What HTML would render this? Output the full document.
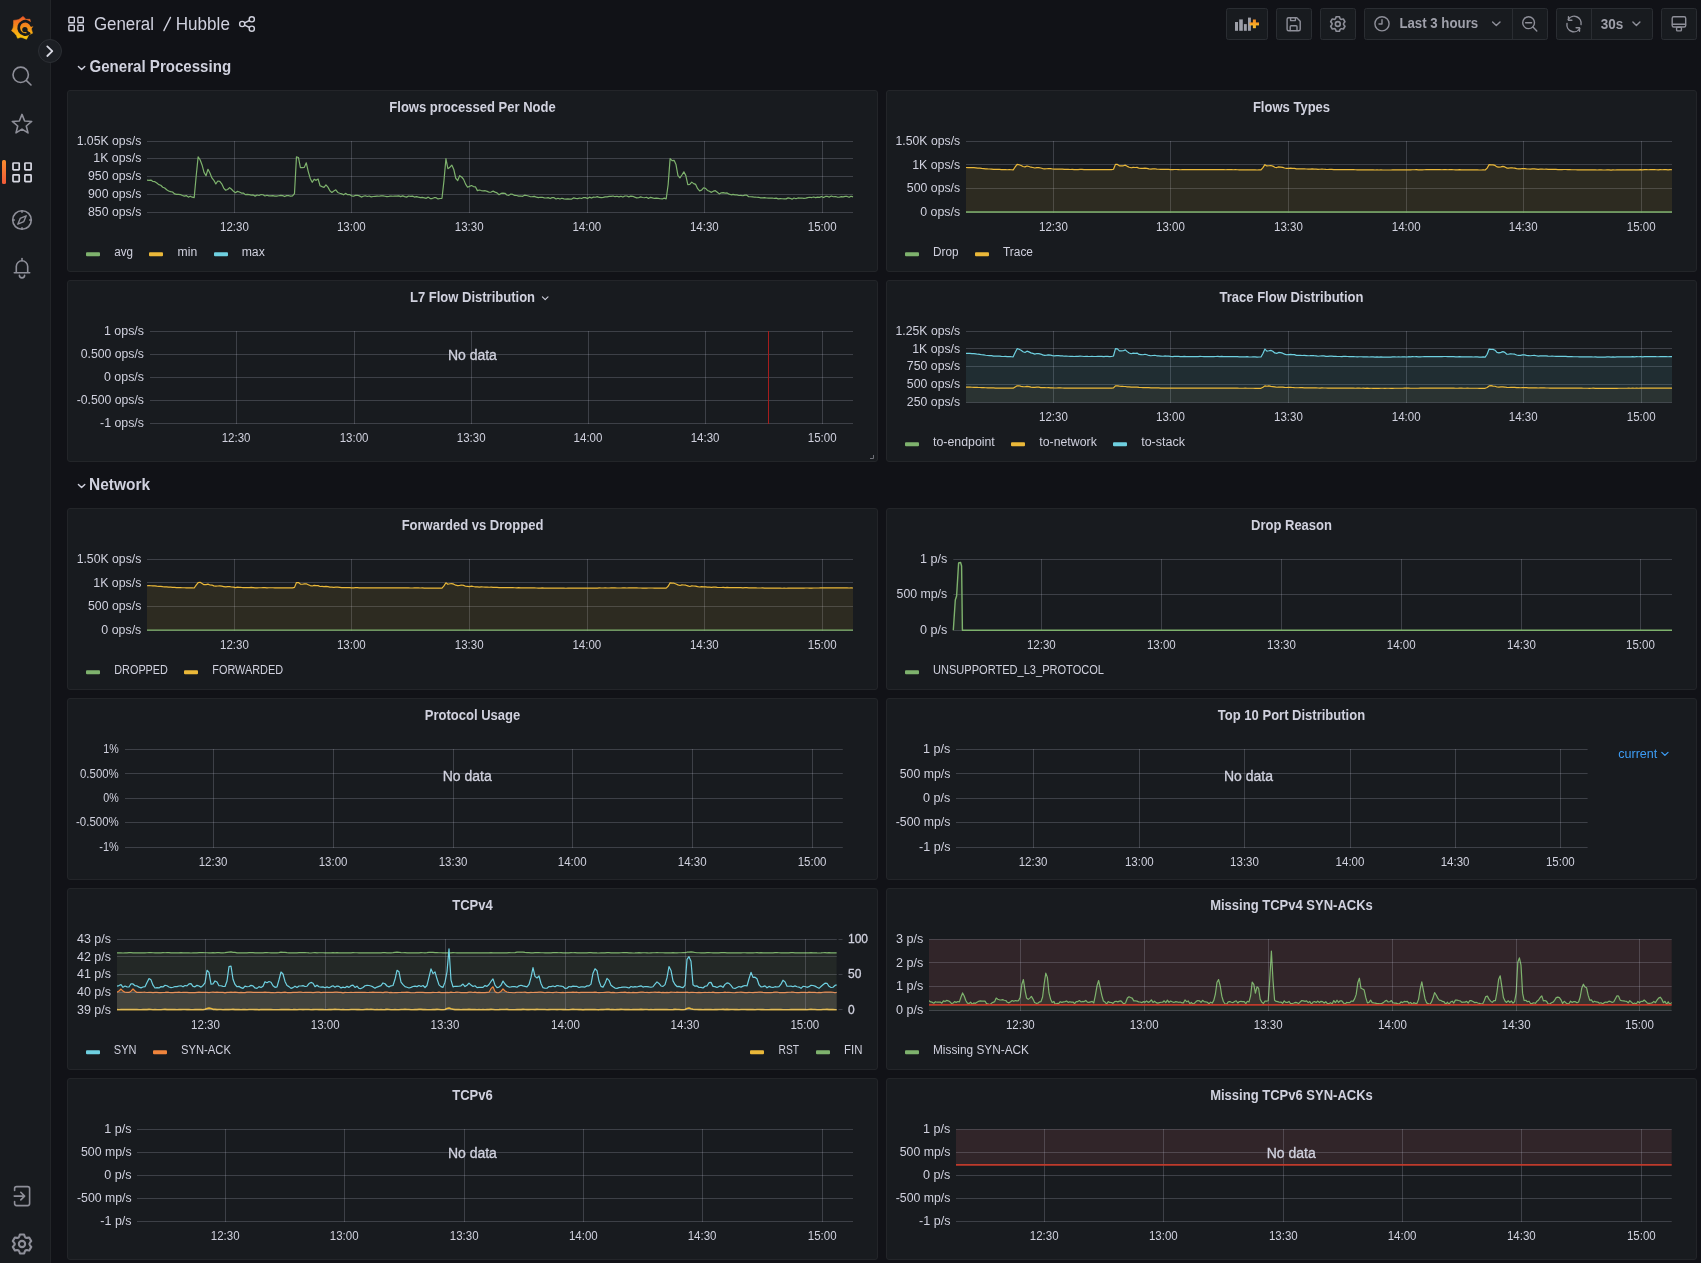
<!DOCTYPE html>
<html><head><meta charset="utf-8"><title>Hubble - Grafana</title>
<style>html,body{margin:0;padding:0;background:#111217;width:1701px;height:1263px;overflow:hidden}
svg{display:block;font-family:"Liberation Sans",sans-serif;will-change:transform}</style></head>
<body><svg width="1701" height="1263" viewBox="0 0 1701 1263" font-family="Liberation Sans, sans-serif"><rect x="0" y="0" width="1701" height="1263" fill="#111217"/><rect x="0" y="0" width="50" height="1263" fill="#181b1f"/><rect x="50" y="0" width="1" height="1263" fill="#222428"/><defs><linearGradient id="lg" x1="0" y1="0" x2="0" y2="1"><stop offset="0" stop-color="#f05a28"/><stop offset="1" stop-color="#fbca0a"/></linearGradient><linearGradient id="pg" x1="0" y1="0" x2="0" y2="1"><stop offset="0" stop-color="#f38a1e"/><stop offset="1" stop-color="#fbc02d"/></linearGradient></defs><polygon points="20.34,18.49 23,16.4 25.44,18.75 25.84,19.56 26.65,19.33 30,19.3 30.49,22.62 30.48,23.6 30.45,24.49 32.8,26.4 31.23,28.98 31.6,29.54 31.68,30.08 32.5,33.2 29.52,34.44 28.63,35.11 28.1,36.24 26.5,39.2 23.35,38.01 21.98,37.49 20.66,37.35 17.6,38.2 16.34,35.28 15.17,34.05 14.19,32.64 11.6,30.8 13.07,27.98 13.38,25.95 13.57,23.77 13.6,20.4 16.94,19.97 18.8,19.62" fill="url(#lg)" stroke="url(#lg)" stroke-width="0.6" stroke-linejoin="round"/><path d="M31.6,25.4 A6.7,6.7 0 1 0 29.2,33.4" fill="none" stroke="#181b1f" stroke-width="2.7" stroke-linecap="round"/><path d="M21.4,28.8 A3.6,3.6 0 0 1 28.4,28.4" fill="none" stroke="none"/><circle cx="24.9" cy="29.6" r="2.7" fill="#181b1f"/><path d="M25,30 L28.2,32.6" stroke="#181b1f" stroke-width="2" stroke-linecap="round"/><circle cx="50" cy="51" r="11.5" fill="#1c1f24" stroke="#2c2f34" stroke-width="1"/><path d="M47.3,46.4 L52.3,51.2 L47.3,56" fill="none" stroke="#d8d9e3" stroke-width="1.8" stroke-linecap="round" stroke-linejoin="round"/><circle cx="20.7" cy="74.8" r="7.7" fill="none" stroke="#8e8f99" stroke-width="1.6" stroke-linecap="round" stroke-linejoin="round"/><path d="M26.5,80.6 L31,85" fill="none" stroke="#8e8f99" stroke-width="1.6" stroke-linecap="round" stroke-linejoin="round"/><polygon points="22,114.4 24.65,120.96 31.7,121.45 26.28,125.99 28,132.85 22,129.1 16,132.85 17.72,125.99 12.3,121.45 19.35,120.96" fill="none" stroke="#8e8f99" stroke-width="1.6" stroke-linecap="round" stroke-linejoin="round"/><rect x="13" y="163" width="6.2" height="6.9" rx="0.6" fill="none" stroke="#d8d9e3" stroke-width="1.7" stroke-linejoin="round"/><rect x="24.9" y="163" width="6.2" height="6.9" rx="0.6" fill="none" stroke="#d8d9e3" stroke-width="1.7" stroke-linejoin="round"/><rect x="13" y="174.8" width="6.2" height="6.9" rx="0.6" fill="none" stroke="#d8d9e3" stroke-width="1.7" stroke-linejoin="round"/><rect x="24.9" y="174.8" width="6.2" height="6.9" rx="0.6" fill="none" stroke="#d8d9e3" stroke-width="1.7" stroke-linejoin="round"/><defs><linearGradient id="ab" x1="0" y1="0" x2="0" y2="1"><stop offset="0" stop-color="#fa8c2f"/><stop offset="1" stop-color="#f05a38"/></linearGradient></defs><rect x="2" y="160" width="4" height="24" rx="1.5" fill="url(#ab)"/><circle cx="22" cy="220" r="9.3" fill="none" stroke="#8e8f99" stroke-width="1.6" stroke-linecap="round" stroke-linejoin="round"/><path d="M17.8,224.2 L20.2,218.4 L26.2,215.8 L23.8,221.6 Z" fill="none" stroke="#8e8f99" stroke-width="1.4" stroke-linecap="round" stroke-linejoin="round"/><path d="M22,210.7 L22,212.3" fill="none" stroke="#8e8f99" stroke-width="1.6" stroke-linecap="round" stroke-linejoin="round"/><path d="M22,227.7 L22,229.3" fill="none" stroke="#8e8f99" stroke-width="1.6" stroke-linecap="round" stroke-linejoin="round"/><path d="M12.7,220 L14.3,220" fill="none" stroke="#8e8f99" stroke-width="1.6" stroke-linecap="round" stroke-linejoin="round"/><path d="M29.7,220 L31.3,220" fill="none" stroke="#8e8f99" stroke-width="1.6" stroke-linecap="round" stroke-linejoin="round"/><path d="M16.3,272.2 V266.5 A5.7,5.7 0 0 1 27.7,266.5 V272.2" fill="none" stroke="#8e8f99" stroke-width="1.6" stroke-linecap="round" stroke-linejoin="round"/><path d="M14.3,272.8 H29.7" fill="none" stroke="#8e8f99" stroke-width="1.6" stroke-linecap="round" stroke-linejoin="round"/><path d="M22,258.6 V260.6" fill="none" stroke="#8e8f99" stroke-width="1.6" stroke-linecap="round" stroke-linejoin="round"/><path d="M19.4,275.3 A2.6,2.6 0 0 0 24.6,275.3" fill="none" stroke="#8e8f99" stroke-width="1.6" stroke-linecap="round" stroke-linejoin="round"/><path d="M14.6,1190.5 V1188.6 A2,2 0 0 1 16.6,1186.6 H27.6 A2,2 0 0 1 29.6,1188.6 V1203.6 A2,2 0 0 1 27.6,1205.6 H16.6 A2,2 0 0 1 14.6,1203.6 V1201.5" fill="none" stroke="#8e8f99" stroke-width="1.6" stroke-linecap="round" stroke-linejoin="round"/><path d="M14.2,1196.1 H24.6 M20.8,1192.3 L24.6,1196.1 L20.8,1199.9" fill="none" stroke="#8e8f99" stroke-width="1.6" stroke-linecap="round" stroke-linejoin="round"/><path transform="translate(9.78,1231.4) scale(1.05)" fill="#8e8f99" d="M19.9,12.66a1,1,0,0,1,0-1.32L21.18,9.9a1,1,0,0,0,.12-1.17l-2-3.46a1,1,0,0,0-1.07-.48l-1.88.38a1,1,0,0,1-1.15-.66l-.61-1.830A1,1,0,0,0,13.640,2h-4a1,1,0,0,0-1,.68L8.08,4.51a1,1,0,0,1-1.15.66L5,4.79A1,1,0,0,0,4,5.27L2,8.73A1,1,0,0,0,2.1,9.9l1.27,1.44a1,1,0,0,1,0,1.32L2.1,14.1A1,1,0,0,0,2,15.27l2,3.46a1,1,0,0,0,1.07.48l1.88-.38a1,1,0,0,1,1.15.66l.61,1.83a1,1,0,0,0,1,.68h4a1,1,0,0,0,.95-.68l.61-1.83a1,1,0,0,1,1.15-.66l1.88.38a1,1,0,0,0,1.07-.48l2-3.46a1,1,0,0,0-.12-1.17ZM18.41,14l.8.9-1.28,2.22-1.18-.24a3,3,0,0,0-3.45,2L12.92,20H10.36L10,18.86a3,3,0,0,0-3.45-2l-1.18.24L4.07,14.89l.8-.9a3,3,0,0,0,0-4l-.8-.9L5.35,6.89l1.18.24a3,3,0,0,0,3.45-2L10.36,4h2.56l.38,1.14a3,3,0,0,0,3.45,2l1.18-.24,1.28,2.22-.8.9A3,3,0,0,0,18.41,14ZM11.64,8a4,4,0,1,0,4,4A4,4,0,0,0,11.64,8Zm0,6a2,2,0,1,1,2-2A2,2,0,0,1,11.64,14Z"/><rect x="68.9" y="17.2" width="5.4" height="5.6" rx="0.8" fill="none" stroke="#d0d1de" stroke-width="1.4" stroke-linejoin="round"/><rect x="77.9" y="17.2" width="5.4" height="5.6" rx="0.8" fill="none" stroke="#d0d1de" stroke-width="1.4" stroke-linejoin="round"/><rect x="68.9" y="25.2" width="5.4" height="5.6" rx="0.8" fill="none" stroke="#d0d1de" stroke-width="1.4" stroke-linejoin="round"/><rect x="77.9" y="25.2" width="5.4" height="5.6" rx="0.8" fill="none" stroke="#d0d1de" stroke-width="1.4" stroke-linejoin="round"/><text x="93.9" y="29.84" font-size="18" font-weight="400" text-anchor="start" fill="#d0d1de" textLength="60.1" lengthAdjust="spacingAndGlyphs">General</text><path d="M163.9,30.6 L170.5,17.4" stroke="#d0d1de" stroke-width="1.35" stroke-linecap="round"/><text x="175.8" y="29.84" font-size="18" font-weight="400" text-anchor="start" fill="#d0d1de" textLength="54.1" lengthAdjust="spacingAndGlyphs">Hubble</text><circle cx="251.8" cy="19.3" r="2.6" fill="none" stroke="#d0d1de" stroke-width="1.4" stroke-linejoin="round"/><circle cx="242.2" cy="24" r="2.6" fill="none" stroke="#d0d1de" stroke-width="1.4" stroke-linejoin="round"/><circle cx="251.8" cy="28.7" r="2.6" fill="none" stroke="#d0d1de" stroke-width="1.4" stroke-linejoin="round"/><path d="M244.5,22.8 L249.5,20.5 M244.5,25.2 L249.5,27.5" fill="none" stroke="#d0d1de" stroke-width="1.4" stroke-linejoin="round"/><rect x="1226.5" y="8.5" width="41" height="31" rx="2" fill="#181b1f" stroke="#2a2d32" stroke-width="1"/><rect x="1276.5" y="8.5" width="35" height="31" rx="2" fill="#181b1f" stroke="#2a2d32" stroke-width="1"/><rect x="1320.5" y="8.5" width="35" height="31" rx="2" fill="#181b1f" stroke="#2a2d32" stroke-width="1"/><rect x="1364.5" y="8.5" width="183" height="31" rx="2" fill="#181b1f" stroke="#2a2d32" stroke-width="1"/><rect x="1556.5" y="8.5" width="96" height="31" rx="2" fill="#181b1f" stroke="#2a2d32" stroke-width="1"/><rect x="1661.5" y="8.5" width="35" height="31" rx="2" fill="#181b1f" stroke="#2a2d32" stroke-width="1"/><rect x="1512" y="9" width="1" height="30" fill="#2a2d32"/><rect x="1591" y="9" width="1" height="30" fill="#2a2d32"/><rect x="1235" y="22" width="3" height="8.8" fill="#9d9fa8"/><rect x="1239.2" y="19.4" width="3.6" height="11.4" fill="#9d9fa8"/><rect x="1243.9" y="24.1" width="2.9" height="6.7" fill="#9d9fa8"/><rect x="1248" y="17.6" width="2.9" height="13.2" fill="#9d9fa8"/><rect x="1249.6" y="22.4" width="9.4" height="3" fill="url(#pg)"/><rect x="1252.9" y="19.5" width="3" height="8.7" fill="url(#pg)"/><path d="M1288.6,17.8 H1296.8 L1300.2,21.2 V29.3 A1.5,1.5 0 0 1 1298.7,30.8 H1288.6 A1.5,1.5 0 0 1 1287.1,29.3 V19.3 A1.5,1.5 0 0 1 1288.6,17.8 Z" fill="none" stroke="#8e8f99" stroke-width="1.4" stroke-linecap="round" stroke-linejoin="round"/><path d="M1290.6,18 V20.6 H1295.4 V18" fill="none" stroke="#8e8f99" stroke-width="1.4" stroke-linecap="round" stroke-linejoin="round"/><path d="M1290.2,30.6 V26.8 A1,1 0 0 1 1291.2,25.8 H1296 A1,1 0 0 1 1297,26.8 V30.6" fill="none" stroke="#8e8f99" stroke-width="1.4" stroke-linecap="round" stroke-linejoin="round"/><path transform="translate(1328.37,14.28) scale(0.81)" fill="#8e8f99" d="M19.9,12.66a1,1,0,0,1,0-1.32L21.18,9.9a1,1,0,0,0,.12-1.17l-2-3.46a1,1,0,0,0-1.07-.48l-1.88.38a1,1,0,0,1-1.15-.66l-.61-1.830A1,1,0,0,0,13.640,2h-4a1,1,0,0,0-1,.68L8.08,4.51a1,1,0,0,1-1.15.66L5,4.79A1,1,0,0,0,4,5.27L2,8.73A1,1,0,0,0,2.1,9.9l1.27,1.44a1,1,0,0,1,0,1.32L2.1,14.1A1,1,0,0,0,2,15.27l2,3.46a1,1,0,0,0,1.07.48l1.88-.38a1,1,0,0,1,1.15.66l.61,1.83a1,1,0,0,0,1,.68h4a1,1,0,0,0,.95-.68l.61-1.83a1,1,0,0,1,1.15-.66l1.88.38a1,1,0,0,0,1.07-.48l2-3.46a1,1,0,0,0-.12-1.17ZM18.41,14l.8.9-1.28,2.22-1.18-.24a3,3,0,0,0-3.45,2L12.92,20H10.36L10,18.86a3,3,0,0,0-3.45-2l-1.18.24L4.07,14.89l.8-.9a3,3,0,0,0,0-4l-.8-.9L5.35,6.89l1.18.24a3,3,0,0,0,3.45-2L10.36,4h2.56l.38,1.14a3,3,0,0,0,3.45,2l1.18-.24,1.28,2.22-.8.9A3,3,0,0,0,18.41,14ZM11.64,8a4,4,0,1,0,4,4A4,4,0,0,0,11.64,8Zm0,6a2,2,0,1,1,2-2A2,2,0,0,1,11.64,14Z"/><circle cx="1382" cy="23.8" r="7.1" fill="none" stroke="#8e8f99" stroke-width="1.4" stroke-linecap="round" stroke-linejoin="round"/><path d="M1382,19.8 V24 H1379" fill="none" stroke="#8e8f99" stroke-width="1.4" stroke-linecap="round" stroke-linejoin="round"/><text x="1399.4" y="28.42" font-size="14" font-weight="700" text-anchor="start" fill="#9fa0aa" textLength="78.8" lengthAdjust="spacingAndGlyphs">Last 3 hours</text><path d="M1492.6,22 L1496.3,25.6 L1500,22" fill="none" stroke="#8e8f99" stroke-width="1.4" stroke-linecap="round" stroke-linejoin="round"/><circle cx="1528.6" cy="22.7" r="5.9" fill="none" stroke="#8e8f99" stroke-width="1.4" stroke-linecap="round" stroke-linejoin="round"/><path d="M1525.6,22.7 H1531.6 M1533,27.1 L1536.8,30.9" fill="none" stroke="#8e8f99" stroke-width="1.4" stroke-linecap="round" stroke-linejoin="round"/><path d="M1568.2,19.5 A7,7 0 0 1 1581,24.5" fill="none" stroke="#8e8f99" stroke-width="1.4" stroke-linecap="round" stroke-linejoin="round"/><path d="M1568.5,16.8 V20.2 H1571.9" fill="none" stroke="#8e8f99" stroke-width="1.4" stroke-linecap="round" stroke-linejoin="round"/><path d="M1579.8,28.5 A7,7 0 0 1 1567,23.5" fill="none" stroke="#8e8f99" stroke-width="1.4" stroke-linecap="round" stroke-linejoin="round"/><path d="M1579.5,31.2 V27.8 H1576.1" fill="none" stroke="#8e8f99" stroke-width="1.4" stroke-linecap="round" stroke-linejoin="round"/><text x="1600.8" y="28.62" font-size="14" font-weight="700" text-anchor="start" fill="#9fa0aa" textLength="22.5" lengthAdjust="spacingAndGlyphs">30s</text><path d="M1632.9,22 L1636.4,25.5 L1639.9,22" fill="none" stroke="#8e8f99" stroke-width="1.4" stroke-linecap="round" stroke-linejoin="round"/><rect x="1672.2" y="16.8" width="13.5" height="10.2" rx="1.5" fill="none" stroke="#8e8f99" stroke-width="1.4" stroke-linecap="round" stroke-linejoin="round"/><path d="M1672.4,24.2 H1685.5" fill="none" stroke="#8e8f99" stroke-width="1.4" stroke-linecap="round" stroke-linejoin="round"/><rect x="1676.6" y="27.3" width="4.8" height="3.6" rx="0.8" fill="none" stroke="#8e8f99" stroke-width="1.4" stroke-linecap="round" stroke-linejoin="round"/><path d="M78.4,66.4 L81.6,69.6 L84.8,66.4" fill="none" stroke="#d0d1de" stroke-width="1.4" stroke-linecap="round" stroke-linejoin="round"/><text x="89.5" y="71.91" font-size="17" font-weight="700" text-anchor="start" fill="#d0d1de" textLength="141.6" lengthAdjust="spacingAndGlyphs">General Processing</text><path d="M78.4,484.4 L81.6,487.6 L84.8,484.4" fill="none" stroke="#d0d1de" stroke-width="1.4" stroke-linecap="round" stroke-linejoin="round"/><text x="89.1" y="489.91" font-size="17" font-weight="700" text-anchor="start" fill="#d0d1de" textLength="61" lengthAdjust="spacingAndGlyphs">Network</text><rect x="67.5" y="90.5" width="810" height="181" rx="2.5" fill="#181b1f" stroke="#232529" stroke-width="1"/><text x="472.5" y="111.62" font-size="14" font-weight="700" text-anchor="middle" fill="#d0d1de" textLength="166.37" lengthAdjust="spacingAndGlyphs">Flows processed Per Node</text><rect x="147" y="141" width="706" height="1" fill="rgba(204,204,220,0.21)"/><rect x="147" y="158" width="706" height="1" fill="rgba(204,204,220,0.21)"/><rect x="147" y="176" width="706" height="1" fill="rgba(204,204,220,0.21)"/><rect x="147" y="194" width="706" height="1" fill="rgba(204,204,220,0.21)"/><rect x="147" y="212" width="706" height="1" fill="rgba(204,204,220,0.21)"/><rect x="234" y="141" width="1" height="72" fill="rgba(204,204,220,0.21)"/><rect x="351" y="141" width="1" height="72" fill="rgba(204,204,220,0.21)"/><rect x="469" y="141" width="1" height="72" fill="rgba(204,204,220,0.21)"/><rect x="587" y="141" width="1" height="72" fill="rgba(204,204,220,0.21)"/><rect x="704" y="141" width="1" height="72" fill="rgba(204,204,220,0.21)"/><rect x="822" y="141" width="1" height="72" fill="rgba(204,204,220,0.21)"/><text x="141.3" y="145.26" font-size="12" font-weight="400" text-anchor="end" fill="#d0d1de" textLength="64.64" lengthAdjust="spacingAndGlyphs">1.05K ops/s</text><text x="141.3" y="162.46" font-size="12" font-weight="400" text-anchor="end" fill="#d0d1de" textLength="47.97" lengthAdjust="spacingAndGlyphs">1K ops/s</text><text x="141.3" y="180.36" font-size="12" font-weight="400" text-anchor="end" fill="#d0d1de" textLength="53.32" lengthAdjust="spacingAndGlyphs">950 ops/s</text><text x="141.3" y="198.16" font-size="12" font-weight="400" text-anchor="end" fill="#d0d1de" textLength="53.32" lengthAdjust="spacingAndGlyphs">900 ops/s</text><text x="141.3" y="216.16" font-size="12" font-weight="400" text-anchor="end" fill="#d0d1de" textLength="53.32" lengthAdjust="spacingAndGlyphs">850 ops/s</text><text x="234.4" y="230.96" font-size="12" font-weight="400" text-anchor="middle" fill="#d0d1de" textLength="28.8" lengthAdjust="spacingAndGlyphs">12:30</text><text x="351.3" y="230.96" font-size="12" font-weight="400" text-anchor="middle" fill="#d0d1de" textLength="28.8" lengthAdjust="spacingAndGlyphs">13:00</text><text x="469.2" y="230.96" font-size="12" font-weight="400" text-anchor="middle" fill="#d0d1de" textLength="28.8" lengthAdjust="spacingAndGlyphs">13:30</text><text x="586.8" y="230.96" font-size="12" font-weight="400" text-anchor="middle" fill="#d0d1de" textLength="28.8" lengthAdjust="spacingAndGlyphs">14:00</text><text x="704.3" y="230.96" font-size="12" font-weight="400" text-anchor="middle" fill="#d0d1de" textLength="28.8" lengthAdjust="spacingAndGlyphs">14:30</text><text x="822.2" y="230.96" font-size="12" font-weight="400" text-anchor="middle" fill="#d0d1de" textLength="28.8" lengthAdjust="spacingAndGlyphs">15:00</text><path d="M147,180.15 L148.97,180.42 L150.93,180.05 L152.9,181.48 L154.87,181.67 L156.83,182.96 L158.8,184.6 L160.77,185.25 L162.73,187.25 L164.7,188.01 L166.67,189.8 L168.63,190.97 L170.6,191.59 L172.57,191.99 L174.53,193.84 L176.5,194.43 L178.47,194.47 L180.43,194.53 L182.4,195.48 L184.36,196.09 L186.33,195.56 L188.3,197.13 L190.26,196.18 L192.23,197.18 L194.2,197.55 L196.16,176.2 L198.13,156.91 L200.1,159.73 L202.06,164.96 L204.03,172.39 L206,175.76 L207.96,169.25 L209.93,173 L211.9,177.93 L213.86,180.28 L215.83,183.93 L217.8,181.03 L219.76,181.45 L221.73,183.84 L223.7,188.04 L225.66,190.24 L227.63,189.51 L229.6,187.62 L231.56,189.25 L233.53,191.34 L235.5,192.76 L237.46,191.34 L239.43,191.95 L241.4,193.03 L243.36,193.06 L245.33,194.65 L247.3,194.46 L249.26,194.7 L251.23,195.16 L253.19,194.93 L255.16,196.12 L257.13,195.02 L259.09,195.49 L261.06,194.53 L263.03,194.73 L264.99,195.96 L266.96,195.29 L268.93,195.9 L270.89,195.94 L272.86,195.68 L274.83,196.11 L276.79,196.12 L278.76,195.73 L280.73,195.34 L282.69,195.6 L284.66,196.55 L286.63,195.6 L288.59,195.59 L290.56,196.22 L292.53,195.99 L294.49,193.58 L296.46,156.9 L298.43,157.47 L300.39,167.6 L302.36,167.6 L304.33,167.33 L306.29,162.82 L308.26,171.62 L310.23,178.43 L312.19,182.31 L314.16,179.25 L316.13,180.36 L318.09,179 L320.06,185.74 L322.03,186.62 L323.99,187.36 L325.96,184.89 L327.92,187.14 L329.89,190.79 L331.86,192.43 L333.82,191.01 L335.79,189.81 L337.76,192.47 L339.72,193.24 L341.69,193.84 L343.66,194.8 L345.62,193.37 L347.59,194.66 L349.56,194.56 L351.52,195.87 L353.49,196.23 L355.46,195.36 L357.42,195.26 L359.39,195.87 L361.36,197.08 L363.32,196.29 L365.29,195.74 L367.26,196.49 L369.22,196.02 L371.19,196.82 L373.16,196.5 L375.12,196.3 L377.09,196.07 L379.06,196.25 L381.02,195.83 L382.99,195.93 L384.96,196.22 L386.92,196.61 L388.89,196.4 L390.86,196.01 L392.82,196.23 L394.79,196.21 L396.75,196.15 L398.72,195.87 L400.69,196.57 L402.65,195.86 L404.62,196.57 L406.59,197.14 L408.55,195.99 L410.52,196.44 L412.49,196.13 L414.45,197.07 L416.42,196.56 L418.39,197.13 L420.35,197.54 L422.32,197.35 L424.29,197.81 L426.25,198.3 L428.22,197.12 L430.19,198.57 L432.15,198.56 L434.12,197.69 L436.09,197.67 L438.05,198.92 L440.02,198.52 L441.99,198.3 L443.95,180.81 L445.92,158.69 L447.89,168.75 L449.85,167.25 L451.82,165.1 L453.79,169.44 L455.75,178.25 L457.72,180.57 L459.69,175.64 L461.65,177 L463.62,179.39 L465.58,184.12 L467.55,187.21 L469.52,186.38 L471.48,185.55 L473.45,186.59 L475.42,186.8 L477.38,190.63 L479.35,190.01 L481.32,190.54 L483.28,190.96 L485.25,190.7 L487.22,191.35 L489.18,192.27 L491.15,192.05 L493.12,191.16 L495.08,192.13 L497.05,192.89 L499.02,194.75 L500.98,193.44 L502.95,193.12 L504.92,193.3 L506.88,194.99 L508.85,195.38 L510.82,193.98 L512.78,194.43 L514.75,195.44 L516.72,195.52 L518.68,196.16 L520.65,196.01 L522.62,196.31 L524.58,195.17 L526.55,195.49 L528.52,195.97 L530.48,196.74 L532.45,196.69 L534.42,196.36 L536.38,197.21 L538.35,197.65 L540.31,197.25 L542.28,197.28 L544.25,197.89 L546.21,198 L548.18,197.62 L550.15,198.55 L552.11,197.62 L554.08,197.71 L556.05,199.01 L558.01,198.25 L559.98,199.05 L561.95,198.22 L563.91,198.82 L565.88,199.03 L567.85,198.94 L569.81,199.04 L571.78,199.07 L573.75,197.86 L575.71,198.31 L577.68,198.6 L579.65,198.01 L581.61,198.47 L583.58,197.49 L585.55,197.59 L587.51,198.48 L589.48,197.16 L591.45,198.05 L593.41,197.12 L595.38,197.25 L597.35,196.62 L599.31,197.47 L601.28,197.63 L603.25,197.32 L605.21,196.89 L607.18,196.8 L609.14,196.41 L611.11,196.41 L613.08,196.01 L615.04,196.7 L617.01,196.23 L618.98,196.83 L620.94,196.21 L622.91,197.05 L624.88,196.01 L626.84,196.02 L628.81,196.91 L630.78,196.12 L632.74,196.29 L634.71,197.17 L636.68,197.81 L638.64,197.74 L640.61,196.86 L642.58,197.47 L644.54,197.74 L646.51,197.23 L648.48,198.41 L650.44,197.34 L652.41,197.85 L654.38,198.45 L656.34,198.04 L658.31,198.36 L660.28,198.77 L662.24,198.94 L664.21,198.17 L666.18,198.81 L668.14,184.73 L670.11,158.66 L672.08,160.68 L674.04,160.35 L676.01,164.52 L677.97,175.54 L679.94,177.8 L681.91,175.02 L683.87,171.83 L685.84,175.6 L687.81,184.69 L689.77,184.31 L691.74,182.11 L693.71,183.61 L695.67,184.41 L697.64,188.66 L699.61,190.81 L701.57,190.14 L703.54,187.76 L705.51,188.33 L707.47,190.46 L709.44,191.31 L711.41,192.35 L713.37,191.16 L715.34,190.69 L717.31,192.21 L719.27,193.91 L721.24,192.84 L723.21,192.7 L725.17,193.14 L727.14,192.91 L729.11,194.15 L731.07,194.79 L733.04,194.46 L735.01,194.82 L736.97,194.95 L738.94,195.51 L740.91,195.4 L742.87,195.77 L744.84,195.12 L746.81,195.18 L748.77,196.7 L750.74,196.73 L752.7,196.94 L754.67,197.22 L756.64,197.23 L758.6,197.28 L760.57,197.87 L762.54,197.8 L764.5,197.63 L766.47,198 L768.44,198.12 L770.4,198.15 L772.37,197.98 L774.34,198.46 L776.3,198.12 L778.27,198.88 L780.24,198.59 L782.2,198.73 L784.17,198.87 L786.14,198.89 L788.1,197.89 L790.07,198.32 L792.04,199.16 L794,197.98 L795.97,198.77 L797.94,197.96 L799.9,198.18 L801.87,197.98 L803.84,198.42 L805.8,198.2 L807.77,197.66 L809.74,197.26 L811.7,197.54 L813.67,196.95 L815.64,197.62 L817.6,197.1 L819.57,197.38 L821.53,196.57 L823.5,197.55 L825.47,196.44 L827.43,196.45 L829.4,197.09 L831.37,196.03 L833.33,196.77 L835.3,196.55 L837.27,197.04 L839.23,197.27 L841.2,196.58 L843.17,196.89 L845.13,196.42 L847.1,196.47 L849.07,197.29 L851.03,196.2 L853,196.9" fill="none" stroke="#7eb26d" stroke-width="1.2" stroke-linejoin="round"/><rect x="86" y="252.3" width="14" height="4" rx="1" fill="#7eb26d"/><text x="114.3" y="255.96" font-size="12" font-weight="400" text-anchor="start" fill="#d0d1de" textLength="18.8" lengthAdjust="spacingAndGlyphs">avg</text><rect x="149" y="252.3" width="14" height="4" rx="1" fill="#eab839"/><text x="177.6" y="255.96" font-size="12" font-weight="400" text-anchor="start" fill="#d0d1de" textLength="19.6" lengthAdjust="spacingAndGlyphs">min</text><rect x="214" y="252.3" width="14" height="4" rx="1" fill="#6ed0e0"/><text x="241.7" y="255.96" font-size="12" font-weight="400" text-anchor="start" fill="#d0d1de" textLength="23.1" lengthAdjust="spacingAndGlyphs">max</text><rect x="886.5" y="90.5" width="810" height="181" rx="2.5" fill="#181b1f" stroke="#232529" stroke-width="1"/><text x="1291.5" y="111.62" font-size="14" font-weight="700" text-anchor="middle" fill="#d0d1de" textLength="77.15" lengthAdjust="spacingAndGlyphs">Flows Types</text><rect x="966" y="141" width="706" height="1" fill="rgba(204,204,220,0.21)"/><rect x="966" y="164" width="706" height="1" fill="rgba(204,204,220,0.21)"/><rect x="966" y="188" width="706" height="1" fill="rgba(204,204,220,0.21)"/><rect x="966" y="212" width="706" height="1" fill="rgba(204,204,220,0.21)"/><rect x="1053" y="141" width="1" height="72" fill="rgba(204,204,220,0.21)"/><rect x="1170" y="141" width="1" height="72" fill="rgba(204,204,220,0.21)"/><rect x="1288" y="141" width="1" height="72" fill="rgba(204,204,220,0.21)"/><rect x="1406" y="141" width="1" height="72" fill="rgba(204,204,220,0.21)"/><rect x="1523" y="141" width="1" height="72" fill="rgba(204,204,220,0.21)"/><rect x="1641" y="141" width="1" height="72" fill="rgba(204,204,220,0.21)"/><text x="960.2" y="145.26" font-size="12" font-weight="400" text-anchor="end" fill="#d0d1de" textLength="64.64" lengthAdjust="spacingAndGlyphs">1.50K ops/s</text><text x="960.2" y="168.56" font-size="12" font-weight="400" text-anchor="end" fill="#d0d1de" textLength="47.97" lengthAdjust="spacingAndGlyphs">1K ops/s</text><text x="960.2" y="192.16" font-size="12" font-weight="400" text-anchor="end" fill="#d0d1de" textLength="53.32" lengthAdjust="spacingAndGlyphs">500 ops/s</text><text x="960.2" y="215.96" font-size="12" font-weight="400" text-anchor="end" fill="#d0d1de" textLength="39.97" lengthAdjust="spacingAndGlyphs">0 ops/s</text><text x="1053.4" y="230.96" font-size="12" font-weight="400" text-anchor="middle" fill="#d0d1de" textLength="28.8" lengthAdjust="spacingAndGlyphs">12:30</text><text x="1170.4" y="230.96" font-size="12" font-weight="400" text-anchor="middle" fill="#d0d1de" textLength="28.8" lengthAdjust="spacingAndGlyphs">13:00</text><text x="1288.4" y="230.96" font-size="12" font-weight="400" text-anchor="middle" fill="#d0d1de" textLength="28.8" lengthAdjust="spacingAndGlyphs">13:30</text><text x="1406.2" y="230.96" font-size="12" font-weight="400" text-anchor="middle" fill="#d0d1de" textLength="28.8" lengthAdjust="spacingAndGlyphs">14:00</text><text x="1523.2" y="230.96" font-size="12" font-weight="400" text-anchor="middle" fill="#d0d1de" textLength="28.8" lengthAdjust="spacingAndGlyphs">14:30</text><text x="1641.2" y="230.96" font-size="12" font-weight="400" text-anchor="middle" fill="#d0d1de" textLength="28.8" lengthAdjust="spacingAndGlyphs">15:00</text><path d="M966,167.49 L967.97,167.53 L969.93,167.48 L971.9,167.67 L973.87,167.7 L975.83,167.87 L977.8,168.09 L979.77,168.17 L981.73,168.44 L983.7,168.54 L985.67,168.78 L987.63,168.94 L989.6,169.02 L991.57,169.07 L993.53,169.32 L995.5,169.4 L997.47,169.4 L999.43,169.41 L1001.4,169.54 L1003.36,169.62 L1005.33,169.55 L1007.3,169.76 L1009.26,169.63 L1011.23,169.76 L1013.2,169.81 L1015.16,166.97 L1017.13,164.39 L1019.1,164.77 L1021.06,165.47 L1023.03,166.46 L1025,166.91 L1026.96,166.04 L1028.93,166.54 L1030.9,167.2 L1032.86,167.51 L1034.83,168 L1036.8,167.61 L1038.76,167.67 L1040.73,167.99 L1042.7,168.54 L1044.66,168.84 L1046.63,168.74 L1048.6,168.49 L1050.56,168.71 L1052.53,168.98 L1054.5,169.18 L1056.46,168.99 L1058.43,169.07 L1060.4,169.21 L1062.36,169.21 L1064.33,169.43 L1066.3,169.4 L1068.26,169.43 L1070.23,169.49 L1072.19,169.46 L1074.16,169.62 L1076.13,169.48 L1078.09,169.54 L1080.06,169.41 L1082.03,169.44 L1083.99,169.6 L1085.96,169.51 L1087.93,169.59 L1089.89,169.6 L1091.86,169.56 L1093.83,169.62 L1095.79,169.62 L1097.76,169.57 L1099.73,169.52 L1101.69,169.55 L1103.66,169.68 L1105.63,169.55 L1107.59,169.55 L1109.56,169.64 L1111.53,169.61 L1113.49,169.28 L1115.46,164.39 L1117.43,164.47 L1119.39,165.82 L1121.36,165.82 L1123.33,165.78 L1125.29,165.18 L1127.26,166.36 L1129.23,167.26 L1131.19,167.78 L1133.16,167.37 L1135.13,167.52 L1137.09,167.34 L1139.06,168.24 L1141.03,168.36 L1142.99,168.45 L1144.96,168.13 L1146.92,168.42 L1148.89,168.91 L1150.86,169.13 L1152.82,168.94 L1154.79,168.78 L1156.76,169.14 L1158.72,169.24 L1160.69,169.32 L1162.66,169.45 L1164.62,169.26 L1166.59,169.43 L1168.56,169.42 L1170.52,169.59 L1172.49,169.64 L1174.46,169.52 L1176.42,169.51 L1178.39,169.59 L1180.36,169.75 L1182.32,169.65 L1184.29,169.57 L1186.26,169.67 L1188.22,169.61 L1190.19,169.72 L1192.16,169.67 L1194.12,169.65 L1196.09,169.62 L1198.06,169.64 L1200.02,169.58 L1201.99,169.6 L1203.96,169.64 L1205.92,169.69 L1207.89,169.66 L1209.86,169.61 L1211.82,169.64 L1213.79,169.63 L1215.75,169.63 L1217.72,169.59 L1219.69,169.68 L1221.65,169.59 L1223.62,169.68 L1225.59,169.76 L1227.55,169.61 L1229.52,169.66 L1231.49,169.62 L1233.45,169.75 L1235.42,169.68 L1237.39,169.76 L1239.35,169.81 L1241.32,169.79 L1243.29,169.85 L1245.25,169.91 L1247.22,169.76 L1249.19,169.95 L1251.15,169.95 L1253.12,169.83 L1255.09,169.83 L1257.05,170 L1259.02,169.94 L1260.99,169.91 L1262.95,167.58 L1264.92,164.63 L1266.89,165.97 L1268.85,165.77 L1270.82,165.49 L1272.79,166.07 L1274.75,167.24 L1276.72,167.55 L1278.69,166.89 L1280.65,167.07 L1282.62,167.39 L1284.58,168.02 L1286.55,168.43 L1288.52,168.32 L1290.48,168.21 L1292.45,168.35 L1294.42,168.38 L1296.38,168.89 L1298.35,168.81 L1300.32,168.88 L1302.28,168.94 L1304.25,168.9 L1306.22,168.99 L1308.18,169.11 L1310.15,169.08 L1312.12,168.96 L1314.08,169.09 L1316.05,169.19 L1318.02,169.44 L1319.98,169.27 L1321.95,169.22 L1323.92,169.25 L1325.88,169.47 L1327.85,169.52 L1329.82,169.34 L1331.78,169.4 L1333.75,169.53 L1335.72,169.54 L1337.68,169.63 L1339.65,169.61 L1341.62,169.65 L1343.58,169.5 L1345.55,169.54 L1347.52,169.6 L1349.48,169.71 L1351.45,169.7 L1353.42,169.66 L1355.38,169.77 L1357.35,169.83 L1359.31,169.77 L1361.28,169.78 L1363.25,169.86 L1365.21,169.87 L1367.18,169.82 L1369.15,169.95 L1371.11,169.82 L1373.08,169.83 L1375.05,170.01 L1377.01,169.91 L1378.98,170.01 L1380.95,169.9 L1382.91,169.98 L1384.88,170.01 L1386.85,170 L1388.81,170.01 L1390.78,170.02 L1392.75,169.85 L1394.71,169.91 L1396.68,169.95 L1398.65,169.88 L1400.61,169.94 L1402.58,169.81 L1404.55,169.82 L1406.51,169.94 L1408.48,169.76 L1410.45,169.88 L1412.41,169.76 L1414.38,169.77 L1416.35,169.69 L1418.31,169.8 L1420.28,169.82 L1422.25,169.78 L1424.21,169.73 L1426.18,169.71 L1428.14,169.66 L1430.11,169.66 L1432.08,169.61 L1434.04,169.7 L1436.01,169.64 L1437.98,169.72 L1439.94,169.64 L1441.91,169.75 L1443.88,169.61 L1445.84,169.61 L1447.81,169.73 L1449.78,169.62 L1451.74,169.65 L1453.71,169.76 L1455.68,169.85 L1457.64,169.84 L1459.61,169.72 L1461.58,169.8 L1463.54,169.84 L1465.51,169.77 L1467.48,169.93 L1469.44,169.79 L1471.41,169.85 L1473.38,169.93 L1475.34,169.88 L1477.31,169.92 L1479.28,169.98 L1481.24,170 L1483.21,169.9 L1485.18,169.98 L1487.14,168.1 L1489.11,164.63 L1491.08,164.9 L1493.04,164.85 L1495.01,165.41 L1496.97,166.88 L1498.94,167.18 L1500.91,166.81 L1502.87,166.38 L1504.84,166.89 L1506.81,168.1 L1508.77,168.05 L1510.74,167.75 L1512.71,167.95 L1514.67,168.06 L1516.64,168.63 L1518.61,168.91 L1520.57,168.83 L1522.54,168.51 L1524.51,168.58 L1526.47,168.87 L1528.44,168.98 L1530.41,169.12 L1532.37,168.96 L1534.34,168.9 L1536.31,169.1 L1538.27,169.33 L1540.24,169.19 L1542.21,169.17 L1544.17,169.23 L1546.14,169.2 L1548.11,169.36 L1550.07,169.45 L1552.04,169.4 L1554.01,169.45 L1555.97,169.47 L1557.94,169.54 L1559.91,169.53 L1561.87,169.58 L1563.84,169.49 L1565.81,169.5 L1567.77,169.7 L1569.74,169.7 L1571.7,169.73 L1573.67,169.77 L1575.64,169.77 L1577.6,169.78 L1579.57,169.86 L1581.54,169.85 L1583.5,169.82 L1585.47,169.87 L1587.44,169.89 L1589.4,169.89 L1591.37,169.87 L1593.34,169.93 L1595.3,169.89 L1597.27,169.99 L1599.24,169.95 L1601.2,169.97 L1603.17,169.99 L1605.14,169.99 L1607.1,169.86 L1609.07,169.92 L1611.04,170.03 L1613,169.87 L1614.97,169.98 L1616.94,169.87 L1618.9,169.9 L1620.87,169.87 L1622.84,169.93 L1624.8,169.9 L1626.77,169.83 L1628.74,169.78 L1630.7,169.81 L1632.67,169.73 L1634.64,169.82 L1636.6,169.75 L1638.57,169.79 L1640.53,169.68 L1642.5,169.81 L1644.47,169.66 L1646.43,169.67 L1648.4,169.75 L1650.37,169.61 L1652.33,169.71 L1654.3,169.68 L1656.27,169.75 L1658.23,169.78 L1660.2,169.68 L1662.17,169.73 L1664.13,169.66 L1666.1,169.67 L1668.07,169.78 L1670.03,169.63 L1672,169.73 L1672,212.5 L966,212.5 Z" fill="#eab839" fill-opacity="0.1"/><path d="M966,167.49 L967.97,167.53 L969.93,167.48 L971.9,167.67 L973.87,167.7 L975.83,167.87 L977.8,168.09 L979.77,168.17 L981.73,168.44 L983.7,168.54 L985.67,168.78 L987.63,168.94 L989.6,169.02 L991.57,169.07 L993.53,169.32 L995.5,169.4 L997.47,169.4 L999.43,169.41 L1001.4,169.54 L1003.36,169.62 L1005.33,169.55 L1007.3,169.76 L1009.26,169.63 L1011.23,169.76 L1013.2,169.81 L1015.16,166.97 L1017.13,164.39 L1019.1,164.77 L1021.06,165.47 L1023.03,166.46 L1025,166.91 L1026.96,166.04 L1028.93,166.54 L1030.9,167.2 L1032.86,167.51 L1034.83,168 L1036.8,167.61 L1038.76,167.67 L1040.73,167.99 L1042.7,168.54 L1044.66,168.84 L1046.63,168.74 L1048.6,168.49 L1050.56,168.71 L1052.53,168.98 L1054.5,169.18 L1056.46,168.99 L1058.43,169.07 L1060.4,169.21 L1062.36,169.21 L1064.33,169.43 L1066.3,169.4 L1068.26,169.43 L1070.23,169.49 L1072.19,169.46 L1074.16,169.62 L1076.13,169.48 L1078.09,169.54 L1080.06,169.41 L1082.03,169.44 L1083.99,169.6 L1085.96,169.51 L1087.93,169.59 L1089.89,169.6 L1091.86,169.56 L1093.83,169.62 L1095.79,169.62 L1097.76,169.57 L1099.73,169.52 L1101.69,169.55 L1103.66,169.68 L1105.63,169.55 L1107.59,169.55 L1109.56,169.64 L1111.53,169.61 L1113.49,169.28 L1115.46,164.39 L1117.43,164.47 L1119.39,165.82 L1121.36,165.82 L1123.33,165.78 L1125.29,165.18 L1127.26,166.36 L1129.23,167.26 L1131.19,167.78 L1133.16,167.37 L1135.13,167.52 L1137.09,167.34 L1139.06,168.24 L1141.03,168.36 L1142.99,168.45 L1144.96,168.13 L1146.92,168.42 L1148.89,168.91 L1150.86,169.13 L1152.82,168.94 L1154.79,168.78 L1156.76,169.14 L1158.72,169.24 L1160.69,169.32 L1162.66,169.45 L1164.62,169.26 L1166.59,169.43 L1168.56,169.42 L1170.52,169.59 L1172.49,169.64 L1174.46,169.52 L1176.42,169.51 L1178.39,169.59 L1180.36,169.75 L1182.32,169.65 L1184.29,169.57 L1186.26,169.67 L1188.22,169.61 L1190.19,169.72 L1192.16,169.67 L1194.12,169.65 L1196.09,169.62 L1198.06,169.64 L1200.02,169.58 L1201.99,169.6 L1203.96,169.64 L1205.92,169.69 L1207.89,169.66 L1209.86,169.61 L1211.82,169.64 L1213.79,169.63 L1215.75,169.63 L1217.72,169.59 L1219.69,169.68 L1221.65,169.59 L1223.62,169.68 L1225.59,169.76 L1227.55,169.61 L1229.52,169.66 L1231.49,169.62 L1233.45,169.75 L1235.42,169.68 L1237.39,169.76 L1239.35,169.81 L1241.32,169.79 L1243.29,169.85 L1245.25,169.91 L1247.22,169.76 L1249.19,169.95 L1251.15,169.95 L1253.12,169.83 L1255.09,169.83 L1257.05,170 L1259.02,169.94 L1260.99,169.91 L1262.95,167.58 L1264.92,164.63 L1266.89,165.97 L1268.85,165.77 L1270.82,165.49 L1272.79,166.07 L1274.75,167.24 L1276.72,167.55 L1278.69,166.89 L1280.65,167.07 L1282.62,167.39 L1284.58,168.02 L1286.55,168.43 L1288.52,168.32 L1290.48,168.21 L1292.45,168.35 L1294.42,168.38 L1296.38,168.89 L1298.35,168.81 L1300.32,168.88 L1302.28,168.94 L1304.25,168.9 L1306.22,168.99 L1308.18,169.11 L1310.15,169.08 L1312.12,168.96 L1314.08,169.09 L1316.05,169.19 L1318.02,169.44 L1319.98,169.27 L1321.95,169.22 L1323.92,169.25 L1325.88,169.47 L1327.85,169.52 L1329.82,169.34 L1331.78,169.4 L1333.75,169.53 L1335.72,169.54 L1337.68,169.63 L1339.65,169.61 L1341.62,169.65 L1343.58,169.5 L1345.55,169.54 L1347.52,169.6 L1349.48,169.71 L1351.45,169.7 L1353.42,169.66 L1355.38,169.77 L1357.35,169.83 L1359.31,169.77 L1361.28,169.78 L1363.25,169.86 L1365.21,169.87 L1367.18,169.82 L1369.15,169.95 L1371.11,169.82 L1373.08,169.83 L1375.05,170.01 L1377.01,169.91 L1378.98,170.01 L1380.95,169.9 L1382.91,169.98 L1384.88,170.01 L1386.85,170 L1388.81,170.01 L1390.78,170.02 L1392.75,169.85 L1394.71,169.91 L1396.68,169.95 L1398.65,169.88 L1400.61,169.94 L1402.58,169.81 L1404.55,169.82 L1406.51,169.94 L1408.48,169.76 L1410.45,169.88 L1412.41,169.76 L1414.38,169.77 L1416.35,169.69 L1418.31,169.8 L1420.28,169.82 L1422.25,169.78 L1424.21,169.73 L1426.18,169.71 L1428.14,169.66 L1430.11,169.66 L1432.08,169.61 L1434.04,169.7 L1436.01,169.64 L1437.98,169.72 L1439.94,169.64 L1441.91,169.75 L1443.88,169.61 L1445.84,169.61 L1447.81,169.73 L1449.78,169.62 L1451.74,169.65 L1453.71,169.76 L1455.68,169.85 L1457.64,169.84 L1459.61,169.72 L1461.58,169.8 L1463.54,169.84 L1465.51,169.77 L1467.48,169.93 L1469.44,169.79 L1471.41,169.85 L1473.38,169.93 L1475.34,169.88 L1477.31,169.92 L1479.28,169.98 L1481.24,170 L1483.21,169.9 L1485.18,169.98 L1487.14,168.1 L1489.11,164.63 L1491.08,164.9 L1493.04,164.85 L1495.01,165.41 L1496.97,166.88 L1498.94,167.18 L1500.91,166.81 L1502.87,166.38 L1504.84,166.89 L1506.81,168.1 L1508.77,168.05 L1510.74,167.75 L1512.71,167.95 L1514.67,168.06 L1516.64,168.63 L1518.61,168.91 L1520.57,168.83 L1522.54,168.51 L1524.51,168.58 L1526.47,168.87 L1528.44,168.98 L1530.41,169.12 L1532.37,168.96 L1534.34,168.9 L1536.31,169.1 L1538.27,169.33 L1540.24,169.19 L1542.21,169.17 L1544.17,169.23 L1546.14,169.2 L1548.11,169.36 L1550.07,169.45 L1552.04,169.4 L1554.01,169.45 L1555.97,169.47 L1557.94,169.54 L1559.91,169.53 L1561.87,169.58 L1563.84,169.49 L1565.81,169.5 L1567.77,169.7 L1569.74,169.7 L1571.7,169.73 L1573.67,169.77 L1575.64,169.77 L1577.6,169.78 L1579.57,169.86 L1581.54,169.85 L1583.5,169.82 L1585.47,169.87 L1587.44,169.89 L1589.4,169.89 L1591.37,169.87 L1593.34,169.93 L1595.3,169.89 L1597.27,169.99 L1599.24,169.95 L1601.2,169.97 L1603.17,169.99 L1605.14,169.99 L1607.1,169.86 L1609.07,169.92 L1611.04,170.03 L1613,169.87 L1614.97,169.98 L1616.94,169.87 L1618.9,169.9 L1620.87,169.87 L1622.84,169.93 L1624.8,169.9 L1626.77,169.83 L1628.74,169.78 L1630.7,169.81 L1632.67,169.73 L1634.64,169.82 L1636.6,169.75 L1638.57,169.79 L1640.53,169.68 L1642.5,169.81 L1644.47,169.66 L1646.43,169.67 L1648.4,169.75 L1650.37,169.61 L1652.33,169.71 L1654.3,169.68 L1656.27,169.75 L1658.23,169.78 L1660.2,169.68 L1662.17,169.73 L1664.13,169.66 L1666.1,169.67 L1668.07,169.78 L1670.03,169.63 L1672,169.73" fill="none" stroke="#eab839" stroke-width="1.2" stroke-linejoin="round"/><path d="M966,212 L1672,212" fill="none" stroke="#7eb26d" stroke-width="1.3" stroke-linejoin="round"/><rect x="905" y="252.3" width="14" height="4" rx="1" fill="#7eb26d"/><text x="933" y="255.96" font-size="12" font-weight="400" text-anchor="start" fill="#d0d1de" textLength="25.5" lengthAdjust="spacingAndGlyphs">Drop</text><rect x="975" y="252.3" width="14" height="4" rx="1" fill="#eab839"/><text x="1003" y="255.96" font-size="12" font-weight="400" text-anchor="start" fill="#d0d1de" textLength="30" lengthAdjust="spacingAndGlyphs">Trace</text><rect x="67.5" y="280.5" width="810" height="181" rx="2.5" fill="#181b1f" stroke="#232529" stroke-width="1"/><text x="472.5" y="301.62" font-size="14" font-weight="700" text-anchor="middle" fill="#d0d1de" textLength="125.09" lengthAdjust="spacingAndGlyphs">L7 Flow Distribution</text><path d="M542.4,296.8 L545.2,299.6 L548,296.8" fill="none" stroke="#d0d1de" stroke-width="1.1" stroke-linecap="round" stroke-linejoin="round"/><rect x="150" y="331" width="703" height="1" fill="rgba(204,204,220,0.21)"/><rect x="150" y="354" width="703" height="1" fill="rgba(204,204,220,0.21)"/><rect x="150" y="377" width="703" height="1" fill="rgba(204,204,220,0.21)"/><rect x="150" y="400" width="703" height="1" fill="rgba(204,204,220,0.21)"/><rect x="150" y="423" width="703" height="1" fill="rgba(204,204,220,0.21)"/><rect x="236" y="331" width="1" height="93" fill="rgba(204,204,220,0.21)"/><rect x="354" y="331" width="1" height="93" fill="rgba(204,204,220,0.21)"/><rect x="471" y="331" width="1" height="93" fill="rgba(204,204,220,0.21)"/><rect x="588" y="331" width="1" height="93" fill="rgba(204,204,220,0.21)"/><rect x="705" y="331" width="1" height="93" fill="rgba(204,204,220,0.21)"/><rect x="822" y="331" width="1" height="93" fill="rgba(204,204,220,0.21)"/><text x="144" y="335.36" font-size="12" font-weight="400" text-anchor="end" fill="#d0d1de" textLength="39.97" lengthAdjust="spacingAndGlyphs">1 ops/s</text><text x="144" y="358.26" font-size="12" font-weight="400" text-anchor="end" fill="#d0d1de" textLength="63.32" lengthAdjust="spacingAndGlyphs">0.500 ops/s</text><text x="144" y="381.16" font-size="12" font-weight="400" text-anchor="end" fill="#d0d1de" textLength="39.97" lengthAdjust="spacingAndGlyphs">0 ops/s</text><text x="144" y="404.16" font-size="12" font-weight="400" text-anchor="end" fill="#d0d1de" textLength="67.32" lengthAdjust="spacingAndGlyphs">-0.500 ops/s</text><text x="144" y="427.06" font-size="12" font-weight="400" text-anchor="end" fill="#d0d1de" textLength="43.97" lengthAdjust="spacingAndGlyphs">-1 ops/s</text><text x="236.1" y="441.96" font-size="12" font-weight="400" text-anchor="middle" fill="#d0d1de" textLength="28.8" lengthAdjust="spacingAndGlyphs">12:30</text><text x="354.1" y="441.96" font-size="12" font-weight="400" text-anchor="middle" fill="#d0d1de" textLength="28.8" lengthAdjust="spacingAndGlyphs">13:00</text><text x="471.2" y="441.96" font-size="12" font-weight="400" text-anchor="middle" fill="#d0d1de" textLength="28.8" lengthAdjust="spacingAndGlyphs">13:30</text><text x="588" y="441.96" font-size="12" font-weight="400" text-anchor="middle" fill="#d0d1de" textLength="28.8" lengthAdjust="spacingAndGlyphs">14:00</text><text x="705.1" y="441.96" font-size="12" font-weight="400" text-anchor="middle" fill="#d0d1de" textLength="28.8" lengthAdjust="spacingAndGlyphs">14:30</text><text x="822.2" y="441.96" font-size="12" font-weight="400" text-anchor="middle" fill="#d0d1de" textLength="28.8" lengthAdjust="spacingAndGlyphs">15:00</text><rect x="768" y="331" width="1" height="93" fill="#a51d1d"/><text x="472.4" y="359.62" font-size="14" font-weight="400" text-anchor="middle" fill="#d0d1de" stroke="#d0d1de" stroke-width="0.3">No data</text><path d="M873.5,455 V458.5 H870" fill="none" stroke="#6e7077" stroke-width="1"/><rect x="886.5" y="280.5" width="810" height="181" rx="2.5" fill="#181b1f" stroke="#232529" stroke-width="1"/><text x="1291.5" y="301.62" font-size="14" font-weight="700" text-anchor="middle" fill="#d0d1de" textLength="143.92" lengthAdjust="spacingAndGlyphs">Trace Flow Distribution</text><rect x="966" y="331" width="706" height="1" fill="rgba(204,204,220,0.21)"/><rect x="966" y="348" width="706" height="1" fill="rgba(204,204,220,0.21)"/><rect x="966" y="366" width="706" height="1" fill="rgba(204,204,220,0.21)"/><rect x="966" y="384" width="706" height="1" fill="rgba(204,204,220,0.21)"/><rect x="966" y="402" width="706" height="1" fill="rgba(204,204,220,0.21)"/><rect x="1053" y="331" width="1" height="72" fill="rgba(204,204,220,0.21)"/><rect x="1170" y="331" width="1" height="72" fill="rgba(204,204,220,0.21)"/><rect x="1288" y="331" width="1" height="72" fill="rgba(204,204,220,0.21)"/><rect x="1406" y="331" width="1" height="72" fill="rgba(204,204,220,0.21)"/><rect x="1523" y="331" width="1" height="72" fill="rgba(204,204,220,0.21)"/><rect x="1641" y="331" width="1" height="72" fill="rgba(204,204,220,0.21)"/><text x="960.2" y="335.36" font-size="12" font-weight="400" text-anchor="end" fill="#d0d1de" textLength="64.64" lengthAdjust="spacingAndGlyphs">1.25K ops/s</text><text x="960.2" y="352.56" font-size="12" font-weight="400" text-anchor="end" fill="#d0d1de" textLength="47.97" lengthAdjust="spacingAndGlyphs">1K ops/s</text><text x="960.2" y="370.26" font-size="12" font-weight="400" text-anchor="end" fill="#d0d1de" textLength="53.32" lengthAdjust="spacingAndGlyphs">750 ops/s</text><text x="960.2" y="388.06" font-size="12" font-weight="400" text-anchor="end" fill="#d0d1de" textLength="53.32" lengthAdjust="spacingAndGlyphs">500 ops/s</text><text x="960.2" y="406.16" font-size="12" font-weight="400" text-anchor="end" fill="#d0d1de" textLength="53.32" lengthAdjust="spacingAndGlyphs">250 ops/s</text><text x="1053.4" y="420.96" font-size="12" font-weight="400" text-anchor="middle" fill="#d0d1de" textLength="28.8" lengthAdjust="spacingAndGlyphs">12:30</text><text x="1170.4" y="420.96" font-size="12" font-weight="400" text-anchor="middle" fill="#d0d1de" textLength="28.8" lengthAdjust="spacingAndGlyphs">13:00</text><text x="1288.4" y="420.96" font-size="12" font-weight="400" text-anchor="middle" fill="#d0d1de" textLength="28.8" lengthAdjust="spacingAndGlyphs">13:30</text><text x="1406.2" y="420.96" font-size="12" font-weight="400" text-anchor="middle" fill="#d0d1de" textLength="28.8" lengthAdjust="spacingAndGlyphs">14:00</text><text x="1523.2" y="420.96" font-size="12" font-weight="400" text-anchor="middle" fill="#d0d1de" textLength="28.8" lengthAdjust="spacingAndGlyphs">14:30</text><text x="1641.2" y="420.96" font-size="12" font-weight="400" text-anchor="middle" fill="#d0d1de" textLength="28.8" lengthAdjust="spacingAndGlyphs">15:00</text><path d="M966,353.33 L967.97,353.38 L969.93,353.31 L971.9,353.59 L973.87,353.63 L975.83,353.89 L977.8,354.22 L979.77,354.35 L981.73,354.74 L983.7,354.9 L985.67,355.25 L987.63,355.49 L989.6,355.61 L991.57,355.69 L993.53,356.06 L995.5,356.18 L997.47,356.18 L999.43,356.2 L1001.4,356.39 L1003.36,356.51 L1005.33,356.4 L1007.3,356.71 L1009.26,356.53 L1011.23,356.72 L1013.2,356.8 L1015.16,352.54 L1017.13,348.69 L1019.1,349.26 L1021.06,350.3 L1023.03,351.78 L1025,352.45 L1026.96,351.15 L1028.93,351.9 L1030.9,352.88 L1032.86,353.35 L1034.83,354.08 L1036.8,353.5 L1038.76,353.59 L1040.73,354.06 L1042.7,354.9 L1044.66,355.34 L1046.63,355.2 L1048.6,354.82 L1050.56,355.14 L1052.53,355.56 L1054.5,355.84 L1056.46,355.56 L1058.43,355.68 L1060.4,355.9 L1062.36,355.9 L1064.33,356.22 L1066.3,356.18 L1068.26,356.23 L1070.23,356.32 L1072.19,356.28 L1074.16,356.51 L1076.13,356.29 L1078.09,356.39 L1080.06,356.2 L1082.03,356.24 L1083.99,356.48 L1085.96,356.35 L1087.93,356.47 L1089.89,356.48 L1091.86,356.43 L1093.83,356.51 L1095.79,356.51 L1097.76,356.43 L1099.73,356.36 L1101.69,356.41 L1103.66,356.6 L1105.63,356.41 L1107.59,356.41 L1109.56,356.53 L1111.53,356.49 L1113.49,356.01 L1115.46,348.69 L1117.43,348.8 L1119.39,350.82 L1121.36,350.82 L1123.33,350.77 L1125.29,349.87 L1127.26,351.63 L1129.23,352.99 L1131.19,353.76 L1133.16,353.15 L1135.13,353.37 L1137.09,353.1 L1139.06,354.44 L1141.03,354.62 L1142.99,354.77 L1144.96,354.27 L1146.92,354.72 L1148.89,355.45 L1150.86,355.78 L1152.82,355.49 L1154.79,355.26 L1156.76,355.78 L1158.72,355.94 L1160.69,356.06 L1162.66,356.25 L1164.62,355.97 L1166.59,356.22 L1168.56,356.2 L1170.52,356.46 L1172.49,356.53 L1174.46,356.36 L1176.42,356.34 L1178.39,356.46 L1180.36,356.7 L1182.32,356.55 L1184.29,356.44 L1186.26,356.59 L1188.22,356.49 L1190.19,356.65 L1192.16,356.59 L1194.12,356.55 L1196.09,356.5 L1198.06,356.54 L1200.02,356.46 L1201.99,356.48 L1203.96,356.53 L1205.92,356.61 L1207.89,356.57 L1209.86,356.49 L1211.82,356.53 L1213.79,356.53 L1215.75,356.52 L1217.72,356.46 L1219.69,356.6 L1221.65,356.46 L1223.62,356.6 L1225.59,356.72 L1227.55,356.49 L1229.52,356.58 L1231.49,356.52 L1233.45,356.7 L1235.42,356.6 L1237.39,356.71 L1239.35,356.8 L1241.32,356.76 L1243.29,356.85 L1245.25,356.95 L1247.22,356.71 L1249.19,357 L1251.15,357 L1253.12,356.83 L1255.09,356.82 L1257.05,357.07 L1259.02,356.99 L1260.99,356.95 L1262.95,353.46 L1264.92,349.05 L1266.89,351.05 L1268.85,350.75 L1270.82,350.33 L1272.79,351.19 L1274.75,352.95 L1276.72,353.41 L1278.69,352.43 L1280.65,352.7 L1282.62,353.18 L1284.58,354.12 L1286.55,354.74 L1288.52,354.57 L1290.48,354.4 L1292.45,354.61 L1294.42,354.65 L1296.38,355.42 L1298.35,355.3 L1300.32,355.4 L1302.28,355.48 L1304.25,355.43 L1306.22,355.56 L1308.18,355.75 L1310.15,355.7 L1312.12,355.52 L1314.08,355.72 L1316.05,355.87 L1318.02,356.24 L1319.98,355.98 L1321.95,355.92 L1323.92,355.95 L1325.88,356.29 L1327.85,356.37 L1329.82,356.09 L1331.78,356.18 L1333.75,356.38 L1335.72,356.39 L1337.68,356.52 L1339.65,356.49 L1341.62,356.55 L1343.58,356.32 L1345.55,356.39 L1347.52,356.48 L1349.48,356.64 L1351.45,356.63 L1353.42,356.56 L1355.38,356.73 L1357.35,356.82 L1359.31,356.74 L1361.28,356.74 L1363.25,356.87 L1365.21,356.89 L1367.18,356.81 L1369.15,357 L1371.11,356.81 L1373.08,356.83 L1375.05,357.09 L1377.01,356.94 L1378.98,357.1 L1380.95,356.93 L1382.91,357.05 L1384.88,357.09 L1386.85,357.07 L1388.81,357.1 L1390.78,357.1 L1392.75,356.86 L1394.71,356.95 L1396.68,357.01 L1398.65,356.89 L1400.61,356.98 L1402.58,356.79 L1404.55,356.81 L1406.51,356.98 L1408.48,356.72 L1410.45,356.9 L1412.41,356.71 L1414.38,356.74 L1416.35,356.61 L1418.31,356.78 L1420.28,356.81 L1422.25,356.75 L1424.21,356.67 L1426.18,356.65 L1428.14,356.57 L1430.11,356.57 L1432.08,356.49 L1434.04,356.63 L1436.01,356.53 L1437.98,356.66 L1439.94,356.53 L1441.91,356.7 L1443.88,356.49 L1445.84,356.49 L1447.81,356.67 L1449.78,356.51 L1451.74,356.55 L1453.71,356.72 L1455.68,356.85 L1457.64,356.84 L1459.61,356.66 L1461.58,356.78 L1463.54,356.84 L1465.51,356.73 L1467.48,356.97 L1469.44,356.76 L1471.41,356.86 L1473.38,356.98 L1475.34,356.9 L1477.31,356.96 L1479.28,357.04 L1481.24,357.08 L1483.21,356.92 L1485.18,357.05 L1487.14,354.24 L1489.11,349.04 L1491.08,349.45 L1493.04,349.38 L1495.01,350.21 L1496.97,352.41 L1498.94,352.86 L1500.91,352.31 L1502.87,351.67 L1504.84,352.42 L1506.81,354.23 L1508.77,354.16 L1510.74,353.72 L1512.71,354.02 L1514.67,354.18 L1516.64,355.03 L1518.61,355.45 L1520.57,355.32 L1522.54,354.85 L1524.51,354.96 L1526.47,355.38 L1528.44,355.55 L1530.41,355.76 L1532.37,355.52 L1534.34,355.43 L1536.31,355.73 L1538.27,356.07 L1540.24,355.86 L1542.21,355.83 L1544.17,355.92 L1546.14,355.87 L1548.11,356.12 L1550.07,356.25 L1552.04,356.18 L1554.01,356.25 L1555.97,356.28 L1557.94,356.39 L1559.91,356.37 L1561.87,356.44 L1563.84,356.31 L1565.81,356.33 L1567.77,356.63 L1569.74,356.63 L1571.7,356.68 L1573.67,356.73 L1575.64,356.74 L1577.6,356.75 L1579.57,356.86 L1581.54,356.85 L1583.5,356.81 L1585.47,356.89 L1587.44,356.91 L1589.4,356.92 L1591.37,356.88 L1593.34,356.98 L1595.3,356.91 L1597.27,357.06 L1599.24,357.01 L1601.2,357.03 L1603.17,357.06 L1605.14,357.07 L1607.1,356.87 L1609.07,356.95 L1611.04,357.12 L1613,356.88 L1614.97,357.04 L1616.94,356.88 L1618.9,356.92 L1620.87,356.88 L1622.84,356.97 L1624.8,356.93 L1626.77,356.82 L1628.74,356.74 L1630.7,356.8 L1632.67,356.68 L1634.64,356.81 L1636.6,356.71 L1638.57,356.76 L1640.53,356.6 L1642.5,356.8 L1644.47,356.58 L1646.43,356.58 L1648.4,356.71 L1650.37,356.5 L1652.33,356.64 L1654.3,356.6 L1656.27,356.7 L1658.23,356.74 L1660.2,356.6 L1662.17,356.67 L1664.13,356.57 L1666.1,356.58 L1668.07,356.75 L1670.03,356.53 L1672,356.67 L1672,402.5 L966,402.5 Z" fill="#6ed0e0" fill-opacity="0.1"/><path d="M966,387.17 L967.97,387.17 L969.93,387.16 L971.9,387.23 L973.87,387.28 L975.83,387.33 L977.8,387.44 L979.77,387.49 L981.73,387.56 L983.7,387.62 L985.67,387.76 L987.63,387.81 L989.6,387.9 L991.57,387.89 L993.53,387.96 L995.5,388.05 L997.47,388.01 L999.43,388.04 L1001.4,388.1 L1003.36,388.12 L1005.33,388.18 L1007.3,388.2 L1009.26,388.17 L1011.23,388.22 L1013.2,388.22 L1015.16,386.94 L1017.13,385.84 L1019.1,385.79 L1021.06,386.31 L1023.03,386.69 L1025,386.74 L1026.96,386.36 L1028.93,386.56 L1030.9,387.1 L1032.86,387.39 L1034.83,387.28 L1036.8,387.2 L1038.76,387.16 L1040.73,387.6 L1042.7,387.59 L1044.66,387.66 L1046.63,387.74 L1048.6,387.66 L1050.56,387.83 L1052.53,387.81 L1054.5,388.01 L1056.46,388 L1058.43,387.9 L1060.4,387.94 L1062.36,388.01 L1064.33,388.07 L1066.3,388.08 L1068.26,388.06 L1070.23,387.98 L1072.19,388.05 L1074.16,388.12 L1076.13,388.08 L1078.09,388.06 L1080.06,388.11 L1082.03,388.1 L1083.99,388.16 L1085.96,388.12 L1087.93,388.1 L1089.89,388.11 L1091.86,388.1 L1093.83,388.09 L1095.79,388.16 L1097.76,388.09 L1099.73,388.14 L1101.69,388.08 L1103.66,388.09 L1105.63,388.12 L1107.59,388.17 L1109.56,388.1 L1111.53,388.13 L1113.49,387.92 L1115.46,385.8 L1117.43,385.81 L1119.39,386.11 L1121.36,386.28 L1123.33,386.45 L1125.29,386.48 L1127.26,386.79 L1129.23,386.82 L1131.19,387.17 L1133.16,387.22 L1135.13,386.99 L1137.09,387.21 L1139.06,387.39 L1141.03,387.52 L1142.99,387.53 L1144.96,387.56 L1146.92,387.57 L1148.89,387.7 L1150.86,387.88 L1152.82,387.92 L1154.79,387.79 L1156.76,387.84 L1158.72,387.96 L1160.69,388.06 L1162.66,388.05 L1164.62,387.98 L1166.59,388.07 L1168.56,388.11 L1170.52,388.11 L1172.49,388.12 L1174.46,388.09 L1176.42,388.1 L1178.39,388.15 L1180.36,388.1 L1182.32,388.16 L1184.29,388.17 L1186.26,388.13 L1188.22,388.11 L1190.19,388.19 L1192.16,388.19 L1194.12,388.17 L1196.09,388.18 L1198.06,388.11 L1200.02,388.18 L1201.99,388.14 L1203.96,388.1 L1205.92,388.14 L1207.89,388.14 L1209.86,388.16 L1211.82,388.14 L1213.79,388.15 L1215.75,388.18 L1217.72,388.17 L1219.69,388.11 L1221.65,388.12 L1223.62,388.16 L1225.59,388.15 L1227.55,388.15 L1229.52,388.13 L1231.49,388.16 L1233.45,388.16 L1235.42,388.2 L1237.39,388.2 L1239.35,388.25 L1241.32,388.23 L1243.29,388.26 L1245.25,388.2 L1247.22,388.24 L1249.19,388.27 L1251.15,388.24 L1253.12,388.23 L1255.09,388.28 L1257.05,388.3 L1259.02,388.28 L1260.99,388.28 L1262.95,387.29 L1264.92,385.87 L1266.89,386.26 L1268.85,385.9 L1270.82,386.36 L1272.79,386.54 L1274.75,386.79 L1276.72,387.23 L1278.69,387.05 L1280.65,387.08 L1282.62,387.12 L1284.58,387.41 L1286.55,387.5 L1288.52,387.45 L1290.48,387.38 L1292.45,387.51 L1294.42,387.68 L1296.38,387.73 L1298.35,387.77 L1300.32,387.67 L1302.28,387.72 L1304.25,387.89 L1306.22,387.9 L1308.18,387.97 L1310.15,387.89 L1312.12,387.87 L1314.08,387.94 L1316.05,387.94 L1318.02,388 L1319.98,388.03 L1321.95,387.94 L1323.92,388 L1325.88,388.01 L1327.85,388.06 L1329.82,388.03 L1331.78,388.08 L1333.75,388.09 L1335.72,388.06 L1337.68,388.1 L1339.65,388.1 L1341.62,388.15 L1343.58,388.14 L1345.55,388.18 L1347.52,388.16 L1349.48,388.16 L1351.45,388.16 L1353.42,388.19 L1355.38,388.24 L1357.35,388.21 L1359.31,388.22 L1361.28,388.27 L1363.25,388.22 L1365.21,388.28 L1367.18,388.22 L1369.15,388.28 L1371.11,388.27 L1373.08,388.3 L1375.05,388.31 L1377.01,388.27 L1378.98,388.29 L1380.95,388.25 L1382.91,388.25 L1384.88,388.3 L1386.85,388.27 L1388.81,388.24 L1390.78,388.32 L1392.75,388.31 L1394.71,388.26 L1396.68,388.27 L1398.65,388.24 L1400.61,388.25 L1402.58,388.27 L1404.55,388.2 L1406.51,388.2 L1408.48,388.2 L1410.45,388.23 L1412.41,388.25 L1414.38,388.23 L1416.35,388.24 L1418.31,388.23 L1420.28,388.16 L1422.25,388.2 L1424.21,388.15 L1426.18,388.19 L1428.14,388.17 L1430.11,388.17 L1432.08,388.19 L1434.04,388.16 L1436.01,388.2 L1437.98,388.2 L1439.94,388.16 L1441.91,388.19 L1443.88,388.15 L1445.84,388.16 L1447.81,388.16 L1449.78,388.17 L1451.74,388.15 L1453.71,388.17 L1455.68,388.23 L1457.64,388.23 L1459.61,388.17 L1461.58,388.21 L1463.54,388.23 L1465.51,388.27 L1467.48,388.22 L1469.44,388.27 L1471.41,388.25 L1473.38,388.23 L1475.34,388.23 L1477.31,388.23 L1479.28,388.28 L1481.24,388.3 L1483.21,388.26 L1485.18,388.32 L1487.14,387.48 L1489.11,385.91 L1491.08,385.62 L1493.04,386.17 L1495.01,386.24 L1496.97,386.98 L1498.94,387.03 L1500.91,386.88 L1502.87,386.94 L1504.84,387.03 L1506.81,387.31 L1508.77,387.5 L1510.74,387.43 L1512.71,387.38 L1514.67,387.41 L1516.64,387.68 L1518.61,387.66 L1520.57,387.76 L1522.54,387.64 L1524.51,387.72 L1526.47,387.72 L1528.44,387.91 L1530.41,387.85 L1532.37,387.79 L1534.34,387.86 L1536.31,387.92 L1538.27,388.02 L1540.24,387.97 L1542.21,387.94 L1544.17,387.93 L1546.14,387.98 L1548.11,388 L1550.07,388.09 L1552.04,388.03 L1554.01,388.07 L1555.97,388.06 L1557.94,388.1 L1559.91,388.08 L1561.87,388.09 L1563.84,388.07 L1565.81,388.09 L1567.77,388.15 L1569.74,388.15 L1571.7,388.21 L1573.67,388.16 L1575.64,388.21 L1577.6,388.17 L1579.57,388.21 L1581.54,388.22 L1583.5,388.24 L1585.47,388.25 L1587.44,388.26 L1589.4,388.28 L1591.37,388.24 L1593.34,388.22 L1595.3,388.31 L1597.27,388.24 L1599.24,388.28 L1601.2,388.31 L1603.17,388.29 L1605.14,388.3 L1607.1,388.32 L1609.07,388.32 L1611.04,388.32 L1613,388.28 L1614.97,388.28 L1616.94,388.3 L1618.9,388.24 L1620.87,388.26 L1622.84,388.25 L1624.8,388.23 L1626.77,388.24 L1628.74,388.21 L1630.7,388.24 L1632.67,388.19 L1634.64,388.25 L1636.6,388.21 L1638.57,388.23 L1640.53,388.17 L1642.5,388.15 L1644.47,388.22 L1646.43,388.15 L1648.4,388.21 L1650.37,388.2 L1652.33,388.13 L1654.3,388.21 L1656.27,388.15 L1658.23,388.18 L1660.2,388.18 L1662.17,388.19 L1664.13,388.15 L1666.1,388.16 L1668.07,388.2 L1670.03,388.19 L1672,388.16 L1672,402.5 L966,402.5 Z" fill="#eab839" fill-opacity="0.05"/><path d="M966,353.33 L967.97,353.38 L969.93,353.31 L971.9,353.59 L973.87,353.63 L975.83,353.89 L977.8,354.22 L979.77,354.35 L981.73,354.74 L983.7,354.9 L985.67,355.25 L987.63,355.49 L989.6,355.61 L991.57,355.69 L993.53,356.06 L995.5,356.18 L997.47,356.18 L999.43,356.2 L1001.4,356.39 L1003.36,356.51 L1005.33,356.4 L1007.3,356.71 L1009.26,356.53 L1011.23,356.72 L1013.2,356.8 L1015.16,352.54 L1017.13,348.69 L1019.1,349.26 L1021.06,350.3 L1023.03,351.78 L1025,352.45 L1026.96,351.15 L1028.93,351.9 L1030.9,352.88 L1032.86,353.35 L1034.83,354.08 L1036.8,353.5 L1038.76,353.59 L1040.73,354.06 L1042.7,354.9 L1044.66,355.34 L1046.63,355.2 L1048.6,354.82 L1050.56,355.14 L1052.53,355.56 L1054.5,355.84 L1056.46,355.56 L1058.43,355.68 L1060.4,355.9 L1062.36,355.9 L1064.33,356.22 L1066.3,356.18 L1068.26,356.23 L1070.23,356.32 L1072.19,356.28 L1074.16,356.51 L1076.13,356.29 L1078.09,356.39 L1080.06,356.2 L1082.03,356.24 L1083.99,356.48 L1085.96,356.35 L1087.93,356.47 L1089.89,356.48 L1091.86,356.43 L1093.83,356.51 L1095.79,356.51 L1097.76,356.43 L1099.73,356.36 L1101.69,356.41 L1103.66,356.6 L1105.63,356.41 L1107.59,356.41 L1109.56,356.53 L1111.53,356.49 L1113.49,356.01 L1115.46,348.69 L1117.43,348.8 L1119.39,350.82 L1121.36,350.82 L1123.33,350.77 L1125.29,349.87 L1127.26,351.63 L1129.23,352.99 L1131.19,353.76 L1133.16,353.15 L1135.13,353.37 L1137.09,353.1 L1139.06,354.44 L1141.03,354.62 L1142.99,354.77 L1144.96,354.27 L1146.92,354.72 L1148.89,355.45 L1150.86,355.78 L1152.82,355.49 L1154.79,355.26 L1156.76,355.78 L1158.72,355.94 L1160.69,356.06 L1162.66,356.25 L1164.62,355.97 L1166.59,356.22 L1168.56,356.2 L1170.52,356.46 L1172.49,356.53 L1174.46,356.36 L1176.42,356.34 L1178.39,356.46 L1180.36,356.7 L1182.32,356.55 L1184.29,356.44 L1186.26,356.59 L1188.22,356.49 L1190.19,356.65 L1192.16,356.59 L1194.12,356.55 L1196.09,356.5 L1198.06,356.54 L1200.02,356.46 L1201.99,356.48 L1203.96,356.53 L1205.92,356.61 L1207.89,356.57 L1209.86,356.49 L1211.82,356.53 L1213.79,356.53 L1215.75,356.52 L1217.72,356.46 L1219.69,356.6 L1221.65,356.46 L1223.62,356.6 L1225.59,356.72 L1227.55,356.49 L1229.52,356.58 L1231.49,356.52 L1233.45,356.7 L1235.42,356.6 L1237.39,356.71 L1239.35,356.8 L1241.32,356.76 L1243.29,356.85 L1245.25,356.95 L1247.22,356.71 L1249.19,357 L1251.15,357 L1253.12,356.83 L1255.09,356.82 L1257.05,357.07 L1259.02,356.99 L1260.99,356.95 L1262.95,353.46 L1264.92,349.05 L1266.89,351.05 L1268.85,350.75 L1270.82,350.33 L1272.79,351.19 L1274.75,352.95 L1276.72,353.41 L1278.69,352.43 L1280.65,352.7 L1282.62,353.18 L1284.58,354.12 L1286.55,354.74 L1288.52,354.57 L1290.48,354.4 L1292.45,354.61 L1294.42,354.65 L1296.38,355.42 L1298.35,355.3 L1300.32,355.4 L1302.28,355.48 L1304.25,355.43 L1306.22,355.56 L1308.18,355.75 L1310.15,355.7 L1312.12,355.52 L1314.08,355.72 L1316.05,355.87 L1318.02,356.24 L1319.98,355.98 L1321.95,355.92 L1323.92,355.95 L1325.88,356.29 L1327.85,356.37 L1329.82,356.09 L1331.78,356.18 L1333.75,356.38 L1335.72,356.39 L1337.68,356.52 L1339.65,356.49 L1341.62,356.55 L1343.58,356.32 L1345.55,356.39 L1347.52,356.48 L1349.48,356.64 L1351.45,356.63 L1353.42,356.56 L1355.38,356.73 L1357.35,356.82 L1359.31,356.74 L1361.28,356.74 L1363.25,356.87 L1365.21,356.89 L1367.18,356.81 L1369.15,357 L1371.11,356.81 L1373.08,356.83 L1375.05,357.09 L1377.01,356.94 L1378.98,357.1 L1380.95,356.93 L1382.91,357.05 L1384.88,357.09 L1386.85,357.07 L1388.81,357.1 L1390.78,357.1 L1392.75,356.86 L1394.71,356.95 L1396.68,357.01 L1398.65,356.89 L1400.61,356.98 L1402.58,356.79 L1404.55,356.81 L1406.51,356.98 L1408.48,356.72 L1410.45,356.9 L1412.41,356.71 L1414.38,356.74 L1416.35,356.61 L1418.31,356.78 L1420.28,356.81 L1422.25,356.75 L1424.21,356.67 L1426.18,356.65 L1428.14,356.57 L1430.11,356.57 L1432.08,356.49 L1434.04,356.63 L1436.01,356.53 L1437.98,356.66 L1439.94,356.53 L1441.91,356.7 L1443.88,356.49 L1445.84,356.49 L1447.81,356.67 L1449.78,356.51 L1451.74,356.55 L1453.71,356.72 L1455.68,356.85 L1457.64,356.84 L1459.61,356.66 L1461.58,356.78 L1463.54,356.84 L1465.51,356.73 L1467.48,356.97 L1469.44,356.76 L1471.41,356.86 L1473.38,356.98 L1475.34,356.9 L1477.31,356.96 L1479.28,357.04 L1481.24,357.08 L1483.21,356.92 L1485.18,357.05 L1487.14,354.24 L1489.11,349.04 L1491.08,349.45 L1493.04,349.38 L1495.01,350.21 L1496.97,352.41 L1498.94,352.86 L1500.91,352.31 L1502.87,351.67 L1504.84,352.42 L1506.81,354.23 L1508.77,354.16 L1510.74,353.72 L1512.71,354.02 L1514.67,354.18 L1516.64,355.03 L1518.61,355.45 L1520.57,355.32 L1522.54,354.85 L1524.51,354.96 L1526.47,355.38 L1528.44,355.55 L1530.41,355.76 L1532.37,355.52 L1534.34,355.43 L1536.31,355.73 L1538.27,356.07 L1540.24,355.86 L1542.21,355.83 L1544.17,355.92 L1546.14,355.87 L1548.11,356.12 L1550.07,356.25 L1552.04,356.18 L1554.01,356.25 L1555.97,356.28 L1557.94,356.39 L1559.91,356.37 L1561.87,356.44 L1563.84,356.31 L1565.81,356.33 L1567.77,356.63 L1569.74,356.63 L1571.7,356.68 L1573.67,356.73 L1575.64,356.74 L1577.6,356.75 L1579.57,356.86 L1581.54,356.85 L1583.5,356.81 L1585.47,356.89 L1587.44,356.91 L1589.4,356.92 L1591.37,356.88 L1593.34,356.98 L1595.3,356.91 L1597.27,357.06 L1599.24,357.01 L1601.2,357.03 L1603.17,357.06 L1605.14,357.07 L1607.1,356.87 L1609.07,356.95 L1611.04,357.12 L1613,356.88 L1614.97,357.04 L1616.94,356.88 L1618.9,356.92 L1620.87,356.88 L1622.84,356.97 L1624.8,356.93 L1626.77,356.82 L1628.74,356.74 L1630.7,356.8 L1632.67,356.68 L1634.64,356.81 L1636.6,356.71 L1638.57,356.76 L1640.53,356.6 L1642.5,356.8 L1644.47,356.58 L1646.43,356.58 L1648.4,356.71 L1650.37,356.5 L1652.33,356.64 L1654.3,356.6 L1656.27,356.7 L1658.23,356.74 L1660.2,356.6 L1662.17,356.67 L1664.13,356.57 L1666.1,356.58 L1668.07,356.75 L1670.03,356.53 L1672,356.67" fill="none" stroke="#6ed0e0" stroke-width="1.2" stroke-linejoin="round"/><path d="M966,387.17 L967.97,387.17 L969.93,387.16 L971.9,387.23 L973.87,387.28 L975.83,387.33 L977.8,387.44 L979.77,387.49 L981.73,387.56 L983.7,387.62 L985.67,387.76 L987.63,387.81 L989.6,387.9 L991.57,387.89 L993.53,387.96 L995.5,388.05 L997.47,388.01 L999.43,388.04 L1001.4,388.1 L1003.36,388.12 L1005.33,388.18 L1007.3,388.2 L1009.26,388.17 L1011.23,388.22 L1013.2,388.22 L1015.16,386.94 L1017.13,385.84 L1019.1,385.79 L1021.06,386.31 L1023.03,386.69 L1025,386.74 L1026.96,386.36 L1028.93,386.56 L1030.9,387.1 L1032.86,387.39 L1034.83,387.28 L1036.8,387.2 L1038.76,387.16 L1040.73,387.6 L1042.7,387.59 L1044.66,387.66 L1046.63,387.74 L1048.6,387.66 L1050.56,387.83 L1052.53,387.81 L1054.5,388.01 L1056.46,388 L1058.43,387.9 L1060.4,387.94 L1062.36,388.01 L1064.33,388.07 L1066.3,388.08 L1068.26,388.06 L1070.23,387.98 L1072.19,388.05 L1074.16,388.12 L1076.13,388.08 L1078.09,388.06 L1080.06,388.11 L1082.03,388.1 L1083.99,388.16 L1085.96,388.12 L1087.93,388.1 L1089.89,388.11 L1091.86,388.1 L1093.83,388.09 L1095.79,388.16 L1097.76,388.09 L1099.73,388.14 L1101.69,388.08 L1103.66,388.09 L1105.63,388.12 L1107.59,388.17 L1109.56,388.1 L1111.53,388.13 L1113.49,387.92 L1115.46,385.8 L1117.43,385.81 L1119.39,386.11 L1121.36,386.28 L1123.33,386.45 L1125.29,386.48 L1127.26,386.79 L1129.23,386.82 L1131.19,387.17 L1133.16,387.22 L1135.13,386.99 L1137.09,387.21 L1139.06,387.39 L1141.03,387.52 L1142.99,387.53 L1144.96,387.56 L1146.92,387.57 L1148.89,387.7 L1150.86,387.88 L1152.82,387.92 L1154.79,387.79 L1156.76,387.84 L1158.72,387.96 L1160.69,388.06 L1162.66,388.05 L1164.62,387.98 L1166.59,388.07 L1168.56,388.11 L1170.52,388.11 L1172.49,388.12 L1174.46,388.09 L1176.42,388.1 L1178.39,388.15 L1180.36,388.1 L1182.32,388.16 L1184.29,388.17 L1186.26,388.13 L1188.22,388.11 L1190.19,388.19 L1192.16,388.19 L1194.12,388.17 L1196.09,388.18 L1198.06,388.11 L1200.02,388.18 L1201.99,388.14 L1203.96,388.1 L1205.92,388.14 L1207.89,388.14 L1209.86,388.16 L1211.82,388.14 L1213.79,388.15 L1215.75,388.18 L1217.72,388.17 L1219.69,388.11 L1221.65,388.12 L1223.62,388.16 L1225.59,388.15 L1227.55,388.15 L1229.52,388.13 L1231.49,388.16 L1233.45,388.16 L1235.42,388.2 L1237.39,388.2 L1239.35,388.25 L1241.32,388.23 L1243.29,388.26 L1245.25,388.2 L1247.22,388.24 L1249.19,388.27 L1251.15,388.24 L1253.12,388.23 L1255.09,388.28 L1257.05,388.3 L1259.02,388.28 L1260.99,388.28 L1262.95,387.29 L1264.92,385.87 L1266.89,386.26 L1268.85,385.9 L1270.82,386.36 L1272.79,386.54 L1274.75,386.79 L1276.72,387.23 L1278.69,387.05 L1280.65,387.08 L1282.62,387.12 L1284.58,387.41 L1286.55,387.5 L1288.52,387.45 L1290.48,387.38 L1292.45,387.51 L1294.42,387.68 L1296.38,387.73 L1298.35,387.77 L1300.32,387.67 L1302.28,387.72 L1304.25,387.89 L1306.22,387.9 L1308.18,387.97 L1310.15,387.89 L1312.12,387.87 L1314.08,387.94 L1316.05,387.94 L1318.02,388 L1319.98,388.03 L1321.95,387.94 L1323.92,388 L1325.88,388.01 L1327.85,388.06 L1329.82,388.03 L1331.78,388.08 L1333.75,388.09 L1335.72,388.06 L1337.68,388.1 L1339.65,388.1 L1341.62,388.15 L1343.58,388.14 L1345.55,388.18 L1347.52,388.16 L1349.48,388.16 L1351.45,388.16 L1353.42,388.19 L1355.38,388.24 L1357.35,388.21 L1359.31,388.22 L1361.28,388.27 L1363.25,388.22 L1365.21,388.28 L1367.18,388.22 L1369.15,388.28 L1371.11,388.27 L1373.08,388.3 L1375.05,388.31 L1377.01,388.27 L1378.98,388.29 L1380.95,388.25 L1382.91,388.25 L1384.88,388.3 L1386.85,388.27 L1388.81,388.24 L1390.78,388.32 L1392.75,388.31 L1394.71,388.26 L1396.68,388.27 L1398.65,388.24 L1400.61,388.25 L1402.58,388.27 L1404.55,388.2 L1406.51,388.2 L1408.48,388.2 L1410.45,388.23 L1412.41,388.25 L1414.38,388.23 L1416.35,388.24 L1418.31,388.23 L1420.28,388.16 L1422.25,388.2 L1424.21,388.15 L1426.18,388.19 L1428.14,388.17 L1430.11,388.17 L1432.08,388.19 L1434.04,388.16 L1436.01,388.2 L1437.98,388.2 L1439.94,388.16 L1441.91,388.19 L1443.88,388.15 L1445.84,388.16 L1447.81,388.16 L1449.78,388.17 L1451.74,388.15 L1453.71,388.17 L1455.68,388.23 L1457.64,388.23 L1459.61,388.17 L1461.58,388.21 L1463.54,388.23 L1465.51,388.27 L1467.48,388.22 L1469.44,388.27 L1471.41,388.25 L1473.38,388.23 L1475.34,388.23 L1477.31,388.23 L1479.28,388.28 L1481.24,388.3 L1483.21,388.26 L1485.18,388.32 L1487.14,387.48 L1489.11,385.91 L1491.08,385.62 L1493.04,386.17 L1495.01,386.24 L1496.97,386.98 L1498.94,387.03 L1500.91,386.88 L1502.87,386.94 L1504.84,387.03 L1506.81,387.31 L1508.77,387.5 L1510.74,387.43 L1512.71,387.38 L1514.67,387.41 L1516.64,387.68 L1518.61,387.66 L1520.57,387.76 L1522.54,387.64 L1524.51,387.72 L1526.47,387.72 L1528.44,387.91 L1530.41,387.85 L1532.37,387.79 L1534.34,387.86 L1536.31,387.92 L1538.27,388.02 L1540.24,387.97 L1542.21,387.94 L1544.17,387.93 L1546.14,387.98 L1548.11,388 L1550.07,388.09 L1552.04,388.03 L1554.01,388.07 L1555.97,388.06 L1557.94,388.1 L1559.91,388.08 L1561.87,388.09 L1563.84,388.07 L1565.81,388.09 L1567.77,388.15 L1569.74,388.15 L1571.7,388.21 L1573.67,388.16 L1575.64,388.21 L1577.6,388.17 L1579.57,388.21 L1581.54,388.22 L1583.5,388.24 L1585.47,388.25 L1587.44,388.26 L1589.4,388.28 L1591.37,388.24 L1593.34,388.22 L1595.3,388.31 L1597.27,388.24 L1599.24,388.28 L1601.2,388.31 L1603.17,388.29 L1605.14,388.3 L1607.1,388.32 L1609.07,388.32 L1611.04,388.32 L1613,388.28 L1614.97,388.28 L1616.94,388.3 L1618.9,388.24 L1620.87,388.26 L1622.84,388.25 L1624.8,388.23 L1626.77,388.24 L1628.74,388.21 L1630.7,388.24 L1632.67,388.19 L1634.64,388.25 L1636.6,388.21 L1638.57,388.23 L1640.53,388.17 L1642.5,388.15 L1644.47,388.22 L1646.43,388.15 L1648.4,388.21 L1650.37,388.2 L1652.33,388.13 L1654.3,388.21 L1656.27,388.15 L1658.23,388.18 L1660.2,388.18 L1662.17,388.19 L1664.13,388.15 L1666.1,388.16 L1668.07,388.2 L1670.03,388.19 L1672,388.16" fill="none" stroke="#eab839" stroke-width="1.2" stroke-linejoin="round"/><rect x="905" y="442.3" width="14" height="4" rx="1" fill="#7eb26d"/><text x="933" y="445.96" font-size="12" font-weight="400" text-anchor="start" fill="#d0d1de" textLength="61.8" lengthAdjust="spacingAndGlyphs">to-endpoint</text><rect x="1011" y="442.3" width="14" height="4" rx="1" fill="#eab839"/><text x="1039.3" y="445.96" font-size="12" font-weight="400" text-anchor="start" fill="#d0d1de" textLength="57.5" lengthAdjust="spacingAndGlyphs">to-network</text><rect x="1113" y="442.3" width="14" height="4" rx="1" fill="#6ed0e0"/><text x="1141.2" y="445.96" font-size="12" font-weight="400" text-anchor="start" fill="#d0d1de" textLength="43.8" lengthAdjust="spacingAndGlyphs">to-stack</text><rect x="67.5" y="508.5" width="810" height="181" rx="2.5" fill="#181b1f" stroke="#232529" stroke-width="1"/><text x="472.5" y="529.62" font-size="14" font-weight="700" text-anchor="middle" fill="#d0d1de" textLength="141.75" lengthAdjust="spacingAndGlyphs">Forwarded vs Dropped</text><rect x="147" y="559" width="706" height="1" fill="rgba(204,204,220,0.21)"/><rect x="147" y="582" width="706" height="1" fill="rgba(204,204,220,0.21)"/><rect x="147" y="606" width="706" height="1" fill="rgba(204,204,220,0.21)"/><rect x="147" y="630" width="706" height="1" fill="rgba(204,204,220,0.21)"/><rect x="234" y="559" width="1" height="72" fill="rgba(204,204,220,0.21)"/><rect x="351" y="559" width="1" height="72" fill="rgba(204,204,220,0.21)"/><rect x="469" y="559" width="1" height="72" fill="rgba(204,204,220,0.21)"/><rect x="587" y="559" width="1" height="72" fill="rgba(204,204,220,0.21)"/><rect x="704" y="559" width="1" height="72" fill="rgba(204,204,220,0.21)"/><rect x="822" y="559" width="1" height="72" fill="rgba(204,204,220,0.21)"/><text x="141.3" y="563.26" font-size="12" font-weight="400" text-anchor="end" fill="#d0d1de" textLength="64.64" lengthAdjust="spacingAndGlyphs">1.50K ops/s</text><text x="141.3" y="586.76" font-size="12" font-weight="400" text-anchor="end" fill="#d0d1de" textLength="47.97" lengthAdjust="spacingAndGlyphs">1K ops/s</text><text x="141.3" y="610.26" font-size="12" font-weight="400" text-anchor="end" fill="#d0d1de" textLength="53.32" lengthAdjust="spacingAndGlyphs">500 ops/s</text><text x="141.3" y="634.06" font-size="12" font-weight="400" text-anchor="end" fill="#d0d1de" textLength="39.97" lengthAdjust="spacingAndGlyphs">0 ops/s</text><text x="234.4" y="648.96" font-size="12" font-weight="400" text-anchor="middle" fill="#d0d1de" textLength="28.8" lengthAdjust="spacingAndGlyphs">12:30</text><text x="351.3" y="648.96" font-size="12" font-weight="400" text-anchor="middle" fill="#d0d1de" textLength="28.8" lengthAdjust="spacingAndGlyphs">13:00</text><text x="469.2" y="648.96" font-size="12" font-weight="400" text-anchor="middle" fill="#d0d1de" textLength="28.8" lengthAdjust="spacingAndGlyphs">13:30</text><text x="586.8" y="648.96" font-size="12" font-weight="400" text-anchor="middle" fill="#d0d1de" textLength="28.8" lengthAdjust="spacingAndGlyphs">14:00</text><text x="704.3" y="648.96" font-size="12" font-weight="400" text-anchor="middle" fill="#d0d1de" textLength="28.8" lengthAdjust="spacingAndGlyphs">14:30</text><text x="822.2" y="648.96" font-size="12" font-weight="400" text-anchor="middle" fill="#d0d1de" textLength="28.8" lengthAdjust="spacingAndGlyphs">15:00</text><path d="M147,585.73 L148.97,585.68 L150.93,585.76 L152.9,585.79 L154.87,585.9 L156.83,586.15 L158.8,586.32 L160.77,586.33 L162.73,586.62 L164.7,586.8 L166.67,586.83 L168.63,587.09 L170.6,587.16 L172.57,587.36 L174.53,587.44 L176.5,587.63 L178.47,587.62 L180.43,587.65 L182.4,587.77 L184.36,587.77 L186.33,587.83 L188.3,587.97 L190.26,587.87 L192.23,587.93 L194.2,588 L196.16,585.21 L198.13,582.6 L200.1,582.27 L202.06,583.51 L204.03,584.71 L206,584.63 L207.96,584.16 L209.93,584.98 L211.9,585.03 L213.86,585.92 L215.83,586.1 L217.8,585.99 L219.76,585.85 L221.73,586.19 L223.7,586.54 L225.66,586.93 L227.63,586.63 L229.6,586.67 L231.56,586.99 L233.53,587.17 L235.5,587.54 L237.46,587.2 L239.43,587.34 L241.4,587.47 L243.36,587.54 L245.33,587.68 L247.3,587.71 L249.26,587.59 L251.23,587.47 L253.19,587.6 L255.16,587.86 L257.13,587.84 L259.09,587.76 L261.06,587.76 L263.03,587.71 L264.99,587.72 L266.96,587.8 L268.93,587.77 L270.89,587.73 L272.86,587.75 L274.83,587.78 L276.79,587.77 L278.76,587.84 L280.73,587.77 L282.69,587.89 L284.66,587.81 L286.63,587.82 L288.59,587.92 L290.56,587.84 L292.53,587.87 L294.49,587.37 L296.46,582.58 L298.43,582.59 L300.39,584.03 L302.36,584.25 L304.33,583.91 L306.29,583.73 L308.26,584.67 L310.23,585.58 L312.19,585.99 L314.16,585.35 L316.13,585.7 L318.09,585.6 L320.06,586.51 L322.03,586.45 L323.99,586.66 L325.96,586.45 L327.92,586.69 L329.89,587.06 L331.86,587.19 L333.82,587.31 L335.79,587.1 L337.76,587.21 L339.72,587.33 L341.69,587.66 L343.66,587.69 L345.62,587.63 L347.59,587.48 L349.56,587.61 L351.52,587.81 L353.49,587.8 L355.46,587.72 L357.42,587.71 L359.39,587.8 L361.36,587.79 L363.32,587.78 L365.29,587.93 L367.26,587.9 L369.22,587.84 L371.19,587.81 L373.16,587.97 L375.12,587.79 L377.09,587.85 L379.06,587.87 L381.02,587.87 L382.99,587.93 L384.96,587.87 L386.92,587.87 L388.89,587.85 L390.86,587.85 L392.82,587.81 L394.79,587.86 L396.75,587.82 L398.72,587.87 L400.69,587.88 L402.65,587.92 L404.62,587.83 L406.59,587.84 L408.55,587.89 L410.52,588.01 L412.49,588.02 L414.45,587.88 L416.42,587.9 L418.39,587.94 L420.35,587.98 L422.32,587.97 L424.29,588.11 L426.25,588.13 L428.22,588 L430.19,588.13 L432.15,588.12 L434.12,588.14 L436.09,588.13 L438.05,588.09 L440.02,588.1 L441.99,588.16 L443.95,585.94 L445.92,582.76 L447.89,584.28 L449.85,583.75 L451.82,583.66 L453.79,584.2 L455.75,585.19 L457.72,585.61 L459.69,585.34 L461.65,585 L463.62,585.39 L465.58,586.23 L467.55,586.31 L469.52,586.61 L471.48,586.07 L473.45,586.52 L475.42,586.86 L477.38,586.97 L479.35,587.04 L481.32,586.82 L483.28,586.98 L485.25,587.13 L487.22,587.22 L489.18,587.27 L491.15,587.18 L493.12,587.31 L495.08,587.43 L497.05,587.46 L499.02,587.56 L500.98,587.49 L502.95,587.57 L504.92,587.51 L506.88,587.66 L508.85,587.72 L510.82,587.69 L512.78,587.59 L514.75,587.77 L516.72,587.81 L518.68,587.72 L520.65,587.86 L522.62,587.85 L524.58,587.73 L526.55,587.84 L528.52,587.93 L530.48,587.87 L532.45,587.93 L534.42,587.94 L536.38,587.98 L538.35,588.07 L540.31,588.07 L542.28,587.96 L544.25,588.12 L546.21,588.03 L548.18,588.02 L550.15,588.12 L552.11,588.19 L554.08,588.12 L556.05,588.15 L558.01,588.08 L559.98,588.16 L561.95,588.22 L563.91,588.22 L565.88,588.23 L567.85,588.17 L569.81,588.18 L571.78,588.18 L573.75,588.22 L575.71,588.17 L577.68,588.17 L579.65,588.15 L581.61,588.08 L583.58,588 L585.55,588.15 L587.51,588.03 L589.48,588.05 L591.45,588.12 L593.41,588.09 L595.38,588.02 L597.35,588.05 L599.31,587.96 L601.28,588.01 L603.25,588.01 L605.21,587.96 L607.18,588.02 L609.14,588 L611.11,587.84 L613.08,587.86 L615.04,587.92 L617.01,587.98 L618.98,587.99 L620.94,588 L622.91,587.9 L624.88,587.86 L626.84,588 L628.81,587.84 L630.78,587.94 L632.74,587.92 L634.71,587.94 L636.68,587.95 L638.64,587.99 L640.61,588 L642.58,588.03 L644.54,588.06 L646.51,588.13 L648.48,588.02 L650.44,588 L652.41,588.02 L654.38,588.13 L656.34,588.04 L658.31,588.17 L660.28,588.1 L662.24,588.11 L664.21,588.2 L666.18,588.12 L668.14,586.3 L670.11,582.84 L672.08,583.03 L674.04,583.22 L676.01,584 L677.97,584.86 L679.94,585.51 L681.91,584.91 L683.87,584.98 L685.84,585.2 L687.81,585.81 L689.77,586.46 L691.74,585.93 L693.71,586.02 L695.67,586.12 L697.64,586.65 L699.61,586.97 L701.57,586.69 L703.54,586.8 L705.51,586.83 L707.47,587.11 L709.44,587.22 L711.41,587.31 L713.37,587.17 L715.34,587.15 L717.31,587.45 L719.27,587.51 L721.24,587.49 L723.21,587.39 L725.17,587.53 L727.14,587.46 L729.11,587.6 L731.07,587.57 L733.04,587.5 L735.01,587.58 L736.97,587.59 L738.94,587.72 L740.91,587.68 L742.87,587.83 L744.84,587.71 L746.81,587.7 L748.77,587.86 L750.74,587.9 L752.7,587.82 L754.67,587.83 L756.64,587.96 L758.6,587.98 L760.57,588.02 L762.54,587.97 L764.5,588.05 L766.47,587.98 L768.44,588.09 L770.4,588.17 L772.37,588.2 L774.34,588.04 L776.3,588.05 L778.27,588.16 L780.24,588.1 L782.2,588.26 L784.17,588.16 L786.14,588.24 L788.1,588.11 L790.07,588.18 L792.04,588.14 L794,588.13 L795.97,588.22 L797.94,588.17 L799.9,588.16 L801.87,588.14 L803.84,588.16 L805.8,588.02 L807.77,587.99 L809.74,588.06 L811.7,588.06 L813.67,587.99 L815.64,588 L817.6,587.98 L819.57,587.97 L821.53,587.9 L823.5,587.92 L825.47,587.85 L827.43,587.89 L829.4,587.93 L831.37,587.9 L833.33,587.9 L835.3,587.81 L837.27,587.87 L839.23,587.95 L841.2,587.89 L843.17,587.96 L845.13,587.91 L847.1,587.91 L849.07,588 L851.03,587.84 L853,588 L853,630.5 L147,630.5 Z" fill="#eab839" fill-opacity="0.1"/><path d="M147,585.73 L148.97,585.68 L150.93,585.76 L152.9,585.79 L154.87,585.9 L156.83,586.15 L158.8,586.32 L160.77,586.33 L162.73,586.62 L164.7,586.8 L166.67,586.83 L168.63,587.09 L170.6,587.16 L172.57,587.36 L174.53,587.44 L176.5,587.63 L178.47,587.62 L180.43,587.65 L182.4,587.77 L184.36,587.77 L186.33,587.83 L188.3,587.97 L190.26,587.87 L192.23,587.93 L194.2,588 L196.16,585.21 L198.13,582.6 L200.1,582.27 L202.06,583.51 L204.03,584.71 L206,584.63 L207.96,584.16 L209.93,584.98 L211.9,585.03 L213.86,585.92 L215.83,586.1 L217.8,585.99 L219.76,585.85 L221.73,586.19 L223.7,586.54 L225.66,586.93 L227.63,586.63 L229.6,586.67 L231.56,586.99 L233.53,587.17 L235.5,587.54 L237.46,587.2 L239.43,587.34 L241.4,587.47 L243.36,587.54 L245.33,587.68 L247.3,587.71 L249.26,587.59 L251.23,587.47 L253.19,587.6 L255.16,587.86 L257.13,587.84 L259.09,587.76 L261.06,587.76 L263.03,587.71 L264.99,587.72 L266.96,587.8 L268.93,587.77 L270.89,587.73 L272.86,587.75 L274.83,587.78 L276.79,587.77 L278.76,587.84 L280.73,587.77 L282.69,587.89 L284.66,587.81 L286.63,587.82 L288.59,587.92 L290.56,587.84 L292.53,587.87 L294.49,587.37 L296.46,582.58 L298.43,582.59 L300.39,584.03 L302.36,584.25 L304.33,583.91 L306.29,583.73 L308.26,584.67 L310.23,585.58 L312.19,585.99 L314.16,585.35 L316.13,585.7 L318.09,585.6 L320.06,586.51 L322.03,586.45 L323.99,586.66 L325.96,586.45 L327.92,586.69 L329.89,587.06 L331.86,587.19 L333.82,587.31 L335.79,587.1 L337.76,587.21 L339.72,587.33 L341.69,587.66 L343.66,587.69 L345.62,587.63 L347.59,587.48 L349.56,587.61 L351.52,587.81 L353.49,587.8 L355.46,587.72 L357.42,587.71 L359.39,587.8 L361.36,587.79 L363.32,587.78 L365.29,587.93 L367.26,587.9 L369.22,587.84 L371.19,587.81 L373.16,587.97 L375.12,587.79 L377.09,587.85 L379.06,587.87 L381.02,587.87 L382.99,587.93 L384.96,587.87 L386.92,587.87 L388.89,587.85 L390.86,587.85 L392.82,587.81 L394.79,587.86 L396.75,587.82 L398.72,587.87 L400.69,587.88 L402.65,587.92 L404.62,587.83 L406.59,587.84 L408.55,587.89 L410.52,588.01 L412.49,588.02 L414.45,587.88 L416.42,587.9 L418.39,587.94 L420.35,587.98 L422.32,587.97 L424.29,588.11 L426.25,588.13 L428.22,588 L430.19,588.13 L432.15,588.12 L434.12,588.14 L436.09,588.13 L438.05,588.09 L440.02,588.1 L441.99,588.16 L443.95,585.94 L445.92,582.76 L447.89,584.28 L449.85,583.75 L451.82,583.66 L453.79,584.2 L455.75,585.19 L457.72,585.61 L459.69,585.34 L461.65,585 L463.62,585.39 L465.58,586.23 L467.55,586.31 L469.52,586.61 L471.48,586.07 L473.45,586.52 L475.42,586.86 L477.38,586.97 L479.35,587.04 L481.32,586.82 L483.28,586.98 L485.25,587.13 L487.22,587.22 L489.18,587.27 L491.15,587.18 L493.12,587.31 L495.08,587.43 L497.05,587.46 L499.02,587.56 L500.98,587.49 L502.95,587.57 L504.92,587.51 L506.88,587.66 L508.85,587.72 L510.82,587.69 L512.78,587.59 L514.75,587.77 L516.72,587.81 L518.68,587.72 L520.65,587.86 L522.62,587.85 L524.58,587.73 L526.55,587.84 L528.52,587.93 L530.48,587.87 L532.45,587.93 L534.42,587.94 L536.38,587.98 L538.35,588.07 L540.31,588.07 L542.28,587.96 L544.25,588.12 L546.21,588.03 L548.18,588.02 L550.15,588.12 L552.11,588.19 L554.08,588.12 L556.05,588.15 L558.01,588.08 L559.98,588.16 L561.95,588.22 L563.91,588.22 L565.88,588.23 L567.85,588.17 L569.81,588.18 L571.78,588.18 L573.75,588.22 L575.71,588.17 L577.68,588.17 L579.65,588.15 L581.61,588.08 L583.58,588 L585.55,588.15 L587.51,588.03 L589.48,588.05 L591.45,588.12 L593.41,588.09 L595.38,588.02 L597.35,588.05 L599.31,587.96 L601.28,588.01 L603.25,588.01 L605.21,587.96 L607.18,588.02 L609.14,588 L611.11,587.84 L613.08,587.86 L615.04,587.92 L617.01,587.98 L618.98,587.99 L620.94,588 L622.91,587.9 L624.88,587.86 L626.84,588 L628.81,587.84 L630.78,587.94 L632.74,587.92 L634.71,587.94 L636.68,587.95 L638.64,587.99 L640.61,588 L642.58,588.03 L644.54,588.06 L646.51,588.13 L648.48,588.02 L650.44,588 L652.41,588.02 L654.38,588.13 L656.34,588.04 L658.31,588.17 L660.28,588.1 L662.24,588.11 L664.21,588.2 L666.18,588.12 L668.14,586.3 L670.11,582.84 L672.08,583.03 L674.04,583.22 L676.01,584 L677.97,584.86 L679.94,585.51 L681.91,584.91 L683.87,584.98 L685.84,585.2 L687.81,585.81 L689.77,586.46 L691.74,585.93 L693.71,586.02 L695.67,586.12 L697.64,586.65 L699.61,586.97 L701.57,586.69 L703.54,586.8 L705.51,586.83 L707.47,587.11 L709.44,587.22 L711.41,587.31 L713.37,587.17 L715.34,587.15 L717.31,587.45 L719.27,587.51 L721.24,587.49 L723.21,587.39 L725.17,587.53 L727.14,587.46 L729.11,587.6 L731.07,587.57 L733.04,587.5 L735.01,587.58 L736.97,587.59 L738.94,587.72 L740.91,587.68 L742.87,587.83 L744.84,587.71 L746.81,587.7 L748.77,587.86 L750.74,587.9 L752.7,587.82 L754.67,587.83 L756.64,587.96 L758.6,587.98 L760.57,588.02 L762.54,587.97 L764.5,588.05 L766.47,587.98 L768.44,588.09 L770.4,588.17 L772.37,588.2 L774.34,588.04 L776.3,588.05 L778.27,588.16 L780.24,588.1 L782.2,588.26 L784.17,588.16 L786.14,588.24 L788.1,588.11 L790.07,588.18 L792.04,588.14 L794,588.13 L795.97,588.22 L797.94,588.17 L799.9,588.16 L801.87,588.14 L803.84,588.16 L805.8,588.02 L807.77,587.99 L809.74,588.06 L811.7,588.06 L813.67,587.99 L815.64,588 L817.6,587.98 L819.57,587.97 L821.53,587.9 L823.5,587.92 L825.47,587.85 L827.43,587.89 L829.4,587.93 L831.37,587.9 L833.33,587.9 L835.3,587.81 L837.27,587.87 L839.23,587.95 L841.2,587.89 L843.17,587.96 L845.13,587.91 L847.1,587.91 L849.07,588 L851.03,587.84 L853,588" fill="none" stroke="#eab839" stroke-width="1.2" stroke-linejoin="round"/><path d="M147,630.1 L853,630.1" fill="none" stroke="#7eb26d" stroke-width="1.3" stroke-linejoin="round"/><rect x="86" y="670.3" width="14" height="4" rx="1" fill="#7eb26d"/><text x="114.3" y="673.96" font-size="12" font-weight="400" text-anchor="start" fill="#d0d1de" textLength="53.6" lengthAdjust="spacingAndGlyphs">DROPPED</text><rect x="184" y="670.3" width="14" height="4" rx="1" fill="#eab839"/><text x="212.3" y="673.96" font-size="12" font-weight="400" text-anchor="start" fill="#d0d1de" textLength="70.7" lengthAdjust="spacingAndGlyphs">FORWARDED</text><rect x="886.5" y="508.5" width="810" height="181" rx="2.5" fill="#181b1f" stroke="#232529" stroke-width="1"/><text x="1291.5" y="529.62" font-size="14" font-weight="700" text-anchor="middle" fill="#d0d1de" textLength="81" lengthAdjust="spacingAndGlyphs">Drop Reason</text><rect x="953.3" y="559" width="718.7" height="1" fill="rgba(204,204,220,0.21)"/><rect x="953.3" y="594" width="718.7" height="1" fill="rgba(204,204,220,0.21)"/><rect x="953.3" y="630" width="718.7" height="1" fill="rgba(204,204,220,0.21)"/><rect x="1041" y="559" width="1" height="72" fill="rgba(204,204,220,0.21)"/><rect x="1161" y="559" width="1" height="72" fill="rgba(204,204,220,0.21)"/><rect x="1281" y="559" width="1" height="72" fill="rgba(204,204,220,0.21)"/><rect x="1401" y="559" width="1" height="72" fill="rgba(204,204,220,0.21)"/><rect x="1521" y="559" width="1" height="72" fill="rgba(204,204,220,0.21)"/><rect x="1640" y="559" width="1" height="72" fill="rgba(204,204,220,0.21)"/><text x="947.2" y="563.26" font-size="12" font-weight="400" text-anchor="end" fill="#d0d1de" textLength="27.3" lengthAdjust="spacingAndGlyphs">1 p/s</text><text x="947.2" y="598.36" font-size="12" font-weight="400" text-anchor="end" fill="#d0d1de" textLength="50.64" lengthAdjust="spacingAndGlyphs">500 mp/s</text><text x="947.2" y="634.16" font-size="12" font-weight="400" text-anchor="end" fill="#d0d1de" textLength="27.3" lengthAdjust="spacingAndGlyphs">0 p/s</text><text x="1041.3" y="648.96" font-size="12" font-weight="400" text-anchor="middle" fill="#d0d1de" textLength="28.8" lengthAdjust="spacingAndGlyphs">12:30</text><text x="1161.3" y="648.96" font-size="12" font-weight="400" text-anchor="middle" fill="#d0d1de" textLength="28.8" lengthAdjust="spacingAndGlyphs">13:00</text><text x="1281.5" y="648.96" font-size="12" font-weight="400" text-anchor="middle" fill="#d0d1de" textLength="28.8" lengthAdjust="spacingAndGlyphs">13:30</text><text x="1401.2" y="648.96" font-size="12" font-weight="400" text-anchor="middle" fill="#d0d1de" textLength="28.8" lengthAdjust="spacingAndGlyphs">14:00</text><text x="1521.4" y="648.96" font-size="12" font-weight="400" text-anchor="middle" fill="#d0d1de" textLength="28.8" lengthAdjust="spacingAndGlyphs">14:30</text><text x="1640.4" y="648.96" font-size="12" font-weight="400" text-anchor="middle" fill="#d0d1de" textLength="28.8" lengthAdjust="spacingAndGlyphs">15:00</text><path d="M953.3,630.2 L955.3,600 L956.6,596 L958.6,563 L960.6,562.5 L961.6,566 L962.4,630.2 L1672,630.2 L1672,630.5 L953.3,630.5 Z" fill="#7eb26d" fill-opacity="0.1"/><path d="M953.3,630.2 L955.3,600 L956.6,596 L958.6,563 L960.6,562.5 L961.6,566 L962.4,630.2 L1672,630.2" fill="none" stroke="#7eb26d" stroke-width="1.4" stroke-linejoin="round"/><rect x="905" y="670.3" width="14" height="4" rx="1" fill="#7eb26d"/><text x="933" y="673.96" font-size="12" font-weight="400" text-anchor="start" fill="#d0d1de" textLength="171" lengthAdjust="spacingAndGlyphs">UNSUPPORTED_L3_PROTOCOL</text><rect x="67.5" y="698.5" width="810" height="181" rx="2.5" fill="#181b1f" stroke="#232529" stroke-width="1"/><text x="472.5" y="719.62" font-size="14" font-weight="700" text-anchor="middle" fill="#d0d1de" textLength="95.47" lengthAdjust="spacingAndGlyphs">Protocol Usage</text><rect x="125" y="749" width="717.8" height="1" fill="rgba(204,204,220,0.21)"/><rect x="125" y="773" width="717.8" height="1" fill="rgba(204,204,220,0.21)"/><rect x="125" y="798" width="717.8" height="1" fill="rgba(204,204,220,0.21)"/><rect x="125" y="822" width="717.8" height="1" fill="rgba(204,204,220,0.21)"/><rect x="125" y="847" width="717.8" height="1" fill="rgba(204,204,220,0.21)"/><rect x="213" y="749" width="1" height="99" fill="rgba(204,204,220,0.21)"/><rect x="333" y="749" width="1" height="99" fill="rgba(204,204,220,0.21)"/><rect x="453" y="749" width="1" height="99" fill="rgba(204,204,220,0.21)"/><rect x="572" y="749" width="1" height="99" fill="rgba(204,204,220,0.21)"/><rect x="692" y="749" width="1" height="99" fill="rgba(204,204,220,0.21)"/><rect x="812" y="749" width="1" height="99" fill="rgba(204,204,220,0.21)"/><text x="118.8" y="753.26" font-size="12" font-weight="400" text-anchor="end" fill="#d0d1de" textLength="15.44" lengthAdjust="spacingAndGlyphs">1%</text><text x="118.8" y="777.56" font-size="12" font-weight="400" text-anchor="end" fill="#d0d1de" textLength="38.79" lengthAdjust="spacingAndGlyphs">0.500%</text><text x="118.8" y="802.16" font-size="12" font-weight="400" text-anchor="end" fill="#d0d1de" textLength="15.44" lengthAdjust="spacingAndGlyphs">0%</text><text x="118.8" y="826.46" font-size="12" font-weight="400" text-anchor="end" fill="#d0d1de" textLength="42.79" lengthAdjust="spacingAndGlyphs">-0.500%</text><text x="118.8" y="851.46" font-size="12" font-weight="400" text-anchor="end" fill="#d0d1de" textLength="19.44" lengthAdjust="spacingAndGlyphs">-1%</text><text x="213.1" y="865.96" font-size="12" font-weight="400" text-anchor="middle" fill="#d0d1de" textLength="28.8" lengthAdjust="spacingAndGlyphs">12:30</text><text x="333.1" y="865.96" font-size="12" font-weight="400" text-anchor="middle" fill="#d0d1de" textLength="28.8" lengthAdjust="spacingAndGlyphs">13:00</text><text x="453.1" y="865.96" font-size="12" font-weight="400" text-anchor="middle" fill="#d0d1de" textLength="28.8" lengthAdjust="spacingAndGlyphs">13:30</text><text x="572.2" y="865.96" font-size="12" font-weight="400" text-anchor="middle" fill="#d0d1de" textLength="28.8" lengthAdjust="spacingAndGlyphs">14:00</text><text x="692.2" y="865.96" font-size="12" font-weight="400" text-anchor="middle" fill="#d0d1de" textLength="28.8" lengthAdjust="spacingAndGlyphs">14:30</text><text x="812.1" y="865.96" font-size="12" font-weight="400" text-anchor="middle" fill="#d0d1de" textLength="28.8" lengthAdjust="spacingAndGlyphs">15:00</text><text x="467.2" y="780.62" font-size="14" font-weight="400" text-anchor="middle" fill="#d0d1de" stroke="#d0d1de" stroke-width="0.3">No data</text><rect x="886.5" y="698.5" width="810" height="181" rx="2.5" fill="#181b1f" stroke="#232529" stroke-width="1"/><text x="1291.5" y="719.62" font-size="14" font-weight="700" text-anchor="middle" fill="#d0d1de" textLength="147.27" lengthAdjust="spacingAndGlyphs">Top 10 Port Distribution</text><rect x="956" y="749" width="631.6" height="1" fill="rgba(204,204,220,0.21)"/><rect x="956" y="773" width="631.6" height="1" fill="rgba(204,204,220,0.21)"/><rect x="956" y="798" width="631.6" height="1" fill="rgba(204,204,220,0.21)"/><rect x="956" y="822" width="631.6" height="1" fill="rgba(204,204,220,0.21)"/><rect x="956" y="847" width="631.6" height="1" fill="rgba(204,204,220,0.21)"/><rect x="1033" y="749" width="1" height="99" fill="rgba(204,204,220,0.21)"/><rect x="1139" y="749" width="1" height="99" fill="rgba(204,204,220,0.21)"/><rect x="1244" y="749" width="1" height="99" fill="rgba(204,204,220,0.21)"/><rect x="1350" y="749" width="1" height="99" fill="rgba(204,204,220,0.21)"/><rect x="1455" y="749" width="1" height="99" fill="rgba(204,204,220,0.21)"/><rect x="1560" y="749" width="1" height="99" fill="rgba(204,204,220,0.21)"/><text x="950.4" y="753.26" font-size="12" font-weight="400" text-anchor="end" fill="#d0d1de" textLength="27.3" lengthAdjust="spacingAndGlyphs">1 p/s</text><text x="950.4" y="777.56" font-size="12" font-weight="400" text-anchor="end" fill="#d0d1de" textLength="50.64" lengthAdjust="spacingAndGlyphs">500 mp/s</text><text x="950.4" y="802.16" font-size="12" font-weight="400" text-anchor="end" fill="#d0d1de" textLength="27.3" lengthAdjust="spacingAndGlyphs">0 p/s</text><text x="950.4" y="826.46" font-size="12" font-weight="400" text-anchor="end" fill="#d0d1de" textLength="54.64" lengthAdjust="spacingAndGlyphs">-500 mp/s</text><text x="950.4" y="851.46" font-size="12" font-weight="400" text-anchor="end" fill="#d0d1de" textLength="31.3" lengthAdjust="spacingAndGlyphs">-1 p/s</text><text x="1033.1" y="865.96" font-size="12" font-weight="400" text-anchor="middle" fill="#d0d1de" textLength="28.8" lengthAdjust="spacingAndGlyphs">12:30</text><text x="1139.3" y="865.96" font-size="12" font-weight="400" text-anchor="middle" fill="#d0d1de" textLength="28.8" lengthAdjust="spacingAndGlyphs">13:00</text><text x="1244.5" y="865.96" font-size="12" font-weight="400" text-anchor="middle" fill="#d0d1de" textLength="28.8" lengthAdjust="spacingAndGlyphs">13:30</text><text x="1350" y="865.96" font-size="12" font-weight="400" text-anchor="middle" fill="#d0d1de" textLength="28.8" lengthAdjust="spacingAndGlyphs">14:00</text><text x="1455.1" y="865.96" font-size="12" font-weight="400" text-anchor="middle" fill="#d0d1de" textLength="28.8" lengthAdjust="spacingAndGlyphs">14:30</text><text x="1560.3" y="865.96" font-size="12" font-weight="400" text-anchor="middle" fill="#d0d1de" textLength="28.8" lengthAdjust="spacingAndGlyphs">15:00</text><text x="1248.5" y="780.62" font-size="14" font-weight="400" text-anchor="middle" fill="#d0d1de" stroke="#d0d1de" stroke-width="0.3">No data</text><text x="1618.2" y="757.96" font-size="12" font-weight="400" text-anchor="start" fill="#3d9df5" textLength="39.1" lengthAdjust="spacingAndGlyphs">current</text><path d="M1661.8,752.4 L1664.9,755.4 L1668,752.4" fill="none" stroke="#3d9df5" stroke-width="1.3" stroke-linecap="round" stroke-linejoin="round"/><rect x="67.5" y="888.5" width="810" height="181" rx="2.5" fill="#181b1f" stroke="#232529" stroke-width="1"/><text x="472.5" y="909.62" font-size="14" font-weight="700" text-anchor="middle" fill="#d0d1de" textLength="40.51" lengthAdjust="spacingAndGlyphs">TCPv4</text><defs><clipPath id="c9"><rect x="117" y="938.3" width="719.8" height="72.5"/></clipPath></defs><g clip-path="url(#c9)"><path d="M117,952.78 L119,952.86 L121,952.92 L123,952.98 L125,952.91 L127,952.91 L129,952.65 L131,952.72 L133,952.84 L135,952.81 L137,952.93 L139,952.77 L141,952.86 L143,952.77 L145,952.79 L147,952.76 L149,952.61 L151,952.69 L153,952.75 L155,952.95 L157,952.94 L159,952.77 L161,952.88 L163,952.67 L165,952.76 L167,952.65 L169,952.66 L171,952.92 L173,952.8 L175,952.8 L177,952.95 L179,952.87 L181,952.69 L183,952.84 L185,952.76 L187,952.85 L189,952.78 L191,952.98 L193,952.9 L195,952.92 L197,952.85 L199,952.68 L201,952.71 L203,952.7 L205,952.75 L207,952.76 L209,952.82 L211,952.86 L213,952.66 L215,952.78 L217,952.69 L219,952.71 L221,952.88 L223,952.81 L225,952.66 L227,952.39 L229,952.1 L231,951.9 L233,952.39 L235,952.46 L237,952.8 L239,952.91 L241,952.75 L243,952.94 L245,952.8 L247,952.8 L249,952.62 L251,952.62 L253,952.68 L255,952.92 L257,952.78 L259,952.93 L261,952.96 L263,952.91 L265,952.72 L267,952.69 L269,952.75 L271,952.85 L273,952.74 L275,952.9 L277,952.81 L279,952.58 L281,952.1 L283,952.28 L285,952.29 L287,952.59 L289,952.81 L291,952.95 L293,952.83 L295,952.95 L297,952.82 L299,952.71 L301,952.68 L303,952.66 L305,952.68 L307,952.75 L309,952.91 L311,952.99 L313,952.75 L315,952.67 L317,952.85 L319,952.74 L321,952.74 L323,952.75 L325,952.88 L327,952.95 L329,952.84 L331,952.78 L333,952.65 L335,952.83 L337,952.63 L339,952.78 L341,952.92 L343,952.78 L345,952.92 L347,952.94 L349,952.81 L351,952.81 L353,952.64 L355,952.74 L357,952.73 L359,952.94 L361,952.82 L363,952.84 L365,952.92 L367,952.84 L369,952.84 L371,952.73 L373,952.78 L375,952.89 L377,952.86 L379,952.82 L381,952.81 L383,952.69 L385,952.71 L387,952.85 L389,952.86 L391,952.78 L393,952.64 L395,952.37 L397,952.15 L399,952.28 L401,952.6 L403,952.75 L405,952.7 L407,952.85 L409,952.9 L411,952.92 L413,952.9 L415,952.89 L417,952.74 L419,952.79 L421,952.68 L423,952.75 L425,952.81 L427,952.68 L429,952.36 L431,952.36 L433,952.37 L435,952.55 L437,952.55 L439,952.74 L441,952.73 L443,952.88 L445,952.86 L447,952.94 L449,952.86 L451,952.85 L453,952.7 L455,952.77 L457,952.82 L459,952.89 L461,952.82 L463,952.95 L465,952.94 L467,952.85 L469,952.87 L471,952.84 L473,952.75 L475,952.79 L477,952.76 L479,952.95 L481,952.97 L483,952.82 L485,952.82 L487,952.79 L489,952.79 L491,952.68 L493,952.88 L495,952.88 L497,952.91 L499,952.83 L501,952.83 L503,952.82 L505,952.76 L507,952.8 L509,952.67 L511,952.73 L513,952.74 L515,952.61 L517,952.2 L519,952.05 L521,952 L523,952.06 L525,952.46 L527,952.64 L529,952.72 L531,952.78 L533,952.8 L535,952.72 L537,952.68 L539,952.62 L541,952.74 L543,952.76 L545,952.87 L547,952.89 L549,952.8 L551,952.92 L553,952.65 L555,952.71 L557,952.68 L559,952.74 L561,952.72 L563,952.94 L565,952.84 L567,952.73 L569,952.82 L571,952.65 L573,952.74 L575,952.71 L577,952.81 L579,952.95 L581,952.95 L583,952.84 L585,952.9 L587,952.8 L589,952.7 L591,952.65 L593,952.79 L595,952.83 L597,952.97 L599,952.98 L601,952.87 L603,952.76 L605,952.84 L607,952.61 L609,952.65 L611,952.81 L613,952.87 L615,952.78 L617,952.89 L619,952.92 L621,952.74 L623,952.72 L625,952.67 L627,952.72 L629,952.93 L631,952.83 L633,952.98 L635,952.94 L637,952.82 L639,952.69 L641,952.84 L643,952.74 L645,952.77 L647,952.8 L649,952.99 L651,952.86 L653,952.77 L655,952.76 L657,952.64 L659,952.76 L661,952.75 L663,952.77 L665,952.93 L667,952.95 L669,952.73 L671,952.8 L673,952.69 L675,952.83 L677,952.81 L679,952.73 L681,952.76 L683,952.68 L685,952.68 L687,952.21 L689,952.03 L691,951.96 L693,952.21 L695,952.5 L697,952.77 L699,952.74 L701,952.93 L703,952.79 L705,952.8 L707,952.71 L709,952.68 L711,952.75 L713,952.79 L715,952.81 L717,952.93 L719,952.88 L721,952.71 L723,952.71 L725,952.72 L727,952.83 L729,952.86 L731,952.83 L733,952.75 L735,952.94 L737,952.82 L739,952.81 L741,952.8 L743,952.76 L745,952.74 L747,952.89 L749,952.82 L751,952.85 L753,952.94 L755,952.75 L757,952.72 L759,952.81 L761,952.63 L763,952.85 L765,952.87 L767,952.85 L769,952.82 L771,952.91 L773,952.89 L775,952.66 L777,952.72 L779,952.76 L781,952.8 L783,952.8 L785,952.79 L787,952.88 L789,952.89 L791,952.66 L793,952.67 L795,952.81 L797,952.84 L799,952.86 L801,952.75 L803,952.92 L805,952.96 L807,952.91 L809,952.79 L811,952.62 L813,952.83 L815,952.73 L817,952.88 L819,952.98 L821,952.91 L823,952.73 L825,952.71 L827,952.83 L829,952.65 L831,952.8 L833,952.8 L835,952.78 L836.8,952.9 L836.8,1010.5 L117,1010.5 Z" fill="#232826" fill-opacity="1"/><path d="M117,986.13 L119,985.56 L121,984.67 L123,987.27 L125,986.05 L127,986.87 L129,987.02 L131,983.75 L133,983.96 L135,985.68 L137,985.89 L139,987.13 L141,987.87 L143,986.98 L145,986.65 L147,982.41 L149,978.6 L151,979.84 L153,985.18 L155,988.03 L157,987.65 L159,987.9 L161,986.62 L163,986.96 L165,985.28 L167,985.77 L169,986.99 L171,987.58 L173,987.24 L175,986.51 L177,986.59 L179,985.99 L181,985.76 L183,986.82 L185,985.49 L187,985.87 L189,983.92 L191,983.54 L193,986.4 L195,986.81 L197,985.36 L199,985.99 L201,987.12 L203,985.47 L205,982.94 L207,970.25 L209,972.34 L211,984.2 L213,984.02 L215,980.92 L217,982.08 L219,985.77 L221,985.75 L223,986.33 L225,986.51 L227,980.98 L229,966.62 L231,966.11 L233,979.22 L235,984.41 L237,986.75 L239,986.38 L241,987.66 L243,988.42 L245,986.11 L247,986.74 L249,986.47 L251,985.38 L253,985.9 L255,987.96 L257,988.39 L259,986.62 L261,987.52 L263,986.18 L265,981.72 L267,982.7 L269,981.54 L271,982.24 L273,985.82 L275,987.32 L277,986.82 L279,979.77 L281,972.02 L283,973.99 L285,981.44 L287,985.55 L289,986.61 L291,988.37 L293,987.62 L295,986.22 L297,987.5 L299,986.01 L301,986 L303,985.62 L305,986.49 L307,986.23 L309,983.59 L311,982.39 L313,983.27 L315,986.73 L317,985.16 L319,986.77 L321,987.1 L323,986.88 L325,987.77 L327,986.91 L329,987.79 L331,986.67 L333,985.79 L335,987.17 L337,986.04 L339,986.37 L341,987.91 L343,987.14 L345,987.77 L347,986.34 L349,987.34 L351,985.69 L353,985.17 L355,987.47 L357,986.17 L359,988.29 L361,988.53 L363,987.5 L365,985.75 L367,985.41 L369,985.5 L371,986.01 L373,986.9 L375,988.15 L377,987.09 L379,986.35 L381,985.64 L383,982.98 L385,983.76 L387,986.02 L389,986.85 L391,985.8 L393,985.47 L395,979.27 L397,970.26 L399,971.84 L401,982.15 L403,984.7 L405,986.7 L407,987.26 L409,987.97 L411,987.42 L413,986.51 L415,986.06 L417,986.64 L419,985.5 L421,986.45 L423,985.53 L425,987.49 L427,985.48 L429,977.14 L431,968.91 L433,973.59 L435,971.87 L437,978.8 L439,984.85 L441,986.62 L443,987.31 L445,982.15 L447,971.85 L449,948.75 L451,980.17 L453,986.94 L455,986.26 L457,986.43 L459,986.26 L461,985.81 L463,984.07 L465,986.56 L467,985.27 L469,983.11 L471,985.09 L473,986.5 L475,985.8 L477,987.59 L479,987.33 L481,987.37 L483,987.33 L485,985.57 L487,986.33 L489,984.48 L491,981.46 L493,978.94 L495,985.17 L497,987.6 L499,987.11 L501,985.29 L503,981.13 L505,984.03 L507,986.14 L509,987.06 L511,986.95 L513,986.49 L515,986.7 L517,987.26 L519,985.85 L521,985.25 L523,985.85 L525,986.4 L527,986.92 L529,984.48 L531,977.38 L533,967.56 L535,976.35 L537,977.96 L539,976 L541,983.47 L543,987.64 L545,988.24 L547,988.17 L549,986.51 L551,986.68 L553,985.95 L555,986.81 L557,985.5 L559,985.86 L561,986.09 L563,986.51 L565,988.42 L567,988.27 L569,986.49 L571,986.86 L573,986.07 L575,986.34 L577,986.42 L579,987.47 L581,986.86 L583,986.84 L585,987.05 L587,985.86 L589,985.87 L591,984.15 L593,973.15 L595,968.8 L597,970.71 L599,981.03 L601,986.39 L603,987.12 L605,983.45 L607,978.4 L609,980.33 L611,985.15 L613,986.67 L615,988.1 L617,988.42 L619,987.63 L621,987.41 L623,987.14 L625,987.01 L627,987.41 L629,987.99 L631,986.46 L633,987.05 L635,986.65 L637,986.98 L639,986.3 L641,985.8 L643,987.05 L645,986.5 L647,986.55 L649,986.95 L651,987.25 L653,986.74 L655,984.06 L657,981.88 L659,983.44 L661,985.97 L663,986.41 L665,984.65 L667,977.73 L669,966.53 L671,970.48 L673,980.91 L675,984.53 L677,986.54 L679,986.38 L681,987.08 L683,987.67 L685,985.26 L687,959.33 L689,956.68 L691,961.3 L693,984.84 L695,986.14 L697,985.92 L699,987.48 L701,987.38 L703,988 L705,986.22 L707,985.85 L709,982.71 L711,982.36 L713,986.39 L715,986.66 L717,987.52 L719,986.41 L721,985.89 L723,987.34 L725,984.37 L727,982.93 L729,983.43 L731,985.43 L733,988.02 L735,988.53 L737,987.52 L739,986.5 L741,987.16 L743,986.15 L745,985.48 L747,986.01 L749,978.74 L751,972.34 L753,977.36 L755,977.22 L757,978.81 L759,984.74 L761,986.88 L763,986.68 L765,985.92 L767,987.78 L769,986.39 L771,987.13 L773,987.52 L775,986.69 L777,987.03 L779,986.66 L781,984.13 L783,980.25 L785,981.85 L787,986.25 L789,986.24 L791,986.11 L793,986.72 L795,985.86 L797,986.75 L799,987.11 L801,988.32 L803,986.4 L805,986.48 L807,987.32 L809,986.66 L811,985.25 L813,985.53 L815,986.14 L817,987.32 L819,988.33 L821,986.53 L823,984.79 L825,983.22 L827,983.28 L829,986.34 L831,987.52 L833,987.24 L835,985.44 L836.8,984.9 L836.8,1010.5 L117,1010.5 Z" fill="#222a2b" fill-opacity="1"/><path d="M117,992.11 L119,990.96 L121,989.05 L123,991.13 L125,992.24 L127,992.37 L129,992.46 L131,991.15 L133,989 L135,990.96 L137,992.42 L139,992.43 L141,992.38 L143,992.27 L145,992.22 L147,992.49 L149,992.42 L151,992.46 L153,992.56 L155,992.35 L157,992.45 L159,992.58 L161,992.53 L163,992.49 L165,992.44 L167,992.06 L169,992.41 L171,992.55 L173,992.54 L175,992.38 L177,992.46 L179,992.16 L181,992.49 L183,992.43 L185,992.33 L187,992.31 L189,992.71 L191,992.59 L193,992.7 L195,992.59 L197,992.32 L199,992.21 L201,992.32 L203,992.32 L205,992.3 L207,992.44 L209,992.7 L211,992.24 L213,992.13 L215,992.34 L217,992.14 L219,992.33 L221,992.4 L223,992.43 L225,992.8 L227,992.36 L229,992.37 L231,992.16 L233,992.32 L235,992.16 L237,992.29 L239,992.59 L241,992.45 L243,992.57 L245,992.67 L247,992.16 L249,992.05 L251,992.12 L253,992.44 L255,992.47 L257,992.38 L259,992.47 L261,992.35 L263,992.39 L265,992.08 L267,992.35 L269,992.47 L271,992.59 L273,992.59 L275,992.77 L277,992.3 L279,992.36 L281,992.59 L283,992.41 L285,992.21 L287,992.53 L289,992.48 L291,992.67 L293,992.45 L295,992.35 L297,992.38 L299,992.12 L301,992.19 L303,992.51 L305,992.28 L307,992.23 L309,992.31 L311,992.37 L313,992.6 L315,992.29 L317,992.16 L319,992.05 L321,992.55 L323,992.38 L325,992.37 L327,992.33 L329,992.28 L331,992.24 L333,992.39 L335,992.08 L337,992.05 L339,992.36 L341,992.35 L343,992.79 L345,992.35 L347,992.48 L349,992.49 L351,992.22 L353,992.5 L355,992.3 L357,992.29 L359,992.47 L361,992.32 L363,992.47 L365,992.28 L367,992.5 L369,992.42 L371,992.28 L373,992.13 L375,992.35 L377,992.41 L379,992.39 L381,992.32 L383,992.54 L385,992.09 L387,992.03 L389,992.53 L391,992.46 L393,992.76 L395,992.5 L397,992.7 L399,992.48 L401,992.45 L403,992.37 L405,992.28 L407,992.17 L409,992.33 L411,992.73 L413,992.74 L415,992.67 L417,992.27 L419,992.35 L421,992.4 L423,992.39 L425,992.58 L427,992.53 L429,992.63 L431,992.6 L433,992.29 L435,992.51 L437,992.48 L439,992.07 L441,992.61 L443,992.71 L445,992.63 L447,992.31 L449,992.65 L451,992.16 L453,992.5 L455,992.34 L457,992.1 L459,992.26 L461,992.59 L463,992.58 L465,992.62 L467,992.61 L469,992.16 L471,992 L473,992.49 L475,992.13 L477,992.67 L479,992.35 L481,992.69 L483,992.59 L485,992.53 L487,992.29 L489,992.26 L491,988.68 L493,986.79 L495,991.64 L497,992.74 L499,992.61 L501,991.39 L503,988.91 L505,991.02 L507,992.02 L509,992.42 L511,992.48 L513,992.73 L515,992.59 L517,992.27 L519,992.27 L521,992.4 L523,992.27 L525,992.08 L527,992.6 L529,992.69 L531,992.34 L533,992.52 L535,992.34 L537,992.44 L539,992.16 L541,992.15 L543,992.37 L545,992.72 L547,992.34 L549,992.34 L551,992.51 L553,992.53 L555,992.27 L557,992.22 L559,992.51 L561,992.57 L563,992.31 L565,992.74 L567,992.34 L569,992.29 L571,992.46 L573,992.21 L575,992.43 L577,992.21 L579,992.67 L581,992.38 L583,992.36 L585,992.44 L587,992.26 L589,992.28 L591,992.46 L593,992.43 L595,992.19 L597,992.43 L599,992.57 L601,992.49 L603,992.5 L605,992.28 L607,992.04 L609,992.16 L611,992.56 L613,992.41 L615,992.68 L617,992.77 L619,992.51 L621,992.43 L623,992.32 L625,992.17 L627,992.54 L629,992.42 L631,992.73 L633,992.45 L635,992.68 L637,992.53 L639,992.35 L641,992.22 L643,992.11 L645,992.52 L647,992.42 L649,992.63 L651,992.35 L653,992.23 L655,992.16 L657,992.42 L659,992.1 L661,992.53 L663,992.38 L665,992.56 L667,992.47 L669,992.55 L671,992.18 L673,992.24 L675,992.47 L677,992.13 L679,992.46 L681,992.4 L683,992.45 L685,992.29 L687,992.2 L689,992.56 L691,992.43 L693,992.41 L695,992.49 L697,992.67 L699,992.36 L701,992.59 L703,992.49 L705,992.42 L707,992.51 L709,992.38 L711,992.52 L713,992.2 L715,992.57 L717,992.64 L719,992.65 L721,992.5 L723,992.5 L725,992.16 L727,992.47 L729,992.29 L731,992.49 L733,992.73 L735,992.65 L737,992.39 L739,992.25 L741,992.2 L743,992.31 L745,992.54 L747,992.59 L749,992.44 L751,992.5 L753,992.68 L755,992.33 L757,992.29 L759,992.02 L761,992.1 L763,992.36 L765,992.54 L767,992.59 L769,992.48 L771,992.71 L773,992.44 L775,992.11 L777,992.03 L779,992.53 L781,992.64 L783,992.7 L785,992.6 L787,992.43 L789,992.23 L791,992.21 L793,992.12 L795,992.48 L797,992.54 L799,992.59 L801,992.36 L803,992.42 L805,992.38 L807,992.6 L809,992.12 L811,992.4 L813,992.38 L815,992.42 L817,992.73 L819,992.43 L821,992.54 L823,992.26 L825,992.12 L827,992.02 L829,992.17 L831,992.15 L833,992.23 L835,992.78 L836.8,992.44 L836.8,1010.5 L117,1010.5 Z" fill="#42433d" fill-opacity="1"/><path d="M117,952.78 L119,952.86 L121,952.92 L123,952.98 L125,952.91 L127,952.91 L129,952.65 L131,952.72 L133,952.84 L135,952.81 L137,952.93 L139,952.77 L141,952.86 L143,952.77 L145,952.79 L147,952.76 L149,952.61 L151,952.69 L153,952.75 L155,952.95 L157,952.94 L159,952.77 L161,952.88 L163,952.67 L165,952.76 L167,952.65 L169,952.66 L171,952.92 L173,952.8 L175,952.8 L177,952.95 L179,952.87 L181,952.69 L183,952.84 L185,952.76 L187,952.85 L189,952.78 L191,952.98 L193,952.9 L195,952.92 L197,952.85 L199,952.68 L201,952.71 L203,952.7 L205,952.75 L207,952.76 L209,952.82 L211,952.86 L213,952.66 L215,952.78 L217,952.69 L219,952.71 L221,952.88 L223,952.81 L225,952.66 L227,952.39 L229,952.1 L231,951.9 L233,952.39 L235,952.46 L237,952.8 L239,952.91 L241,952.75 L243,952.94 L245,952.8 L247,952.8 L249,952.62 L251,952.62 L253,952.68 L255,952.92 L257,952.78 L259,952.93 L261,952.96 L263,952.91 L265,952.72 L267,952.69 L269,952.75 L271,952.85 L273,952.74 L275,952.9 L277,952.81 L279,952.58 L281,952.1 L283,952.28 L285,952.29 L287,952.59 L289,952.81 L291,952.95 L293,952.83 L295,952.95 L297,952.82 L299,952.71 L301,952.68 L303,952.66 L305,952.68 L307,952.75 L309,952.91 L311,952.99 L313,952.75 L315,952.67 L317,952.85 L319,952.74 L321,952.74 L323,952.75 L325,952.88 L327,952.95 L329,952.84 L331,952.78 L333,952.65 L335,952.83 L337,952.63 L339,952.78 L341,952.92 L343,952.78 L345,952.92 L347,952.94 L349,952.81 L351,952.81 L353,952.64 L355,952.74 L357,952.73 L359,952.94 L361,952.82 L363,952.84 L365,952.92 L367,952.84 L369,952.84 L371,952.73 L373,952.78 L375,952.89 L377,952.86 L379,952.82 L381,952.81 L383,952.69 L385,952.71 L387,952.85 L389,952.86 L391,952.78 L393,952.64 L395,952.37 L397,952.15 L399,952.28 L401,952.6 L403,952.75 L405,952.7 L407,952.85 L409,952.9 L411,952.92 L413,952.9 L415,952.89 L417,952.74 L419,952.79 L421,952.68 L423,952.75 L425,952.81 L427,952.68 L429,952.36 L431,952.36 L433,952.37 L435,952.55 L437,952.55 L439,952.74 L441,952.73 L443,952.88 L445,952.86 L447,952.94 L449,952.86 L451,952.85 L453,952.7 L455,952.77 L457,952.82 L459,952.89 L461,952.82 L463,952.95 L465,952.94 L467,952.85 L469,952.87 L471,952.84 L473,952.75 L475,952.79 L477,952.76 L479,952.95 L481,952.97 L483,952.82 L485,952.82 L487,952.79 L489,952.79 L491,952.68 L493,952.88 L495,952.88 L497,952.91 L499,952.83 L501,952.83 L503,952.82 L505,952.76 L507,952.8 L509,952.67 L511,952.73 L513,952.74 L515,952.61 L517,952.2 L519,952.05 L521,952 L523,952.06 L525,952.46 L527,952.64 L529,952.72 L531,952.78 L533,952.8 L535,952.72 L537,952.68 L539,952.62 L541,952.74 L543,952.76 L545,952.87 L547,952.89 L549,952.8 L551,952.92 L553,952.65 L555,952.71 L557,952.68 L559,952.74 L561,952.72 L563,952.94 L565,952.84 L567,952.73 L569,952.82 L571,952.65 L573,952.74 L575,952.71 L577,952.81 L579,952.95 L581,952.95 L583,952.84 L585,952.9 L587,952.8 L589,952.7 L591,952.65 L593,952.79 L595,952.83 L597,952.97 L599,952.98 L601,952.87 L603,952.76 L605,952.84 L607,952.61 L609,952.65 L611,952.81 L613,952.87 L615,952.78 L617,952.89 L619,952.92 L621,952.74 L623,952.72 L625,952.67 L627,952.72 L629,952.93 L631,952.83 L633,952.98 L635,952.94 L637,952.82 L639,952.69 L641,952.84 L643,952.74 L645,952.77 L647,952.8 L649,952.99 L651,952.86 L653,952.77 L655,952.76 L657,952.64 L659,952.76 L661,952.75 L663,952.77 L665,952.93 L667,952.95 L669,952.73 L671,952.8 L673,952.69 L675,952.83 L677,952.81 L679,952.73 L681,952.76 L683,952.68 L685,952.68 L687,952.21 L689,952.03 L691,951.96 L693,952.21 L695,952.5 L697,952.77 L699,952.74 L701,952.93 L703,952.79 L705,952.8 L707,952.71 L709,952.68 L711,952.75 L713,952.79 L715,952.81 L717,952.93 L719,952.88 L721,952.71 L723,952.71 L725,952.72 L727,952.83 L729,952.86 L731,952.83 L733,952.75 L735,952.94 L737,952.82 L739,952.81 L741,952.8 L743,952.76 L745,952.74 L747,952.89 L749,952.82 L751,952.85 L753,952.94 L755,952.75 L757,952.72 L759,952.81 L761,952.63 L763,952.85 L765,952.87 L767,952.85 L769,952.82 L771,952.91 L773,952.89 L775,952.66 L777,952.72 L779,952.76 L781,952.8 L783,952.8 L785,952.79 L787,952.88 L789,952.89 L791,952.66 L793,952.67 L795,952.81 L797,952.84 L799,952.86 L801,952.75 L803,952.92 L805,952.96 L807,952.91 L809,952.79 L811,952.62 L813,952.83 L815,952.73 L817,952.88 L819,952.98 L821,952.91 L823,952.73 L825,952.71 L827,952.83 L829,952.65 L831,952.8 L833,952.8 L835,952.78 L836.8,952.9" fill="none" stroke="#7eb26d" stroke-width="1.2" stroke-linejoin="round"/><path d="M117,986.13 L119,985.56 L121,984.67 L123,987.27 L125,986.05 L127,986.87 L129,987.02 L131,983.75 L133,983.96 L135,985.68 L137,985.89 L139,987.13 L141,987.87 L143,986.98 L145,986.65 L147,982.41 L149,978.6 L151,979.84 L153,985.18 L155,988.03 L157,987.65 L159,987.9 L161,986.62 L163,986.96 L165,985.28 L167,985.77 L169,986.99 L171,987.58 L173,987.24 L175,986.51 L177,986.59 L179,985.99 L181,985.76 L183,986.82 L185,985.49 L187,985.87 L189,983.92 L191,983.54 L193,986.4 L195,986.81 L197,985.36 L199,985.99 L201,987.12 L203,985.47 L205,982.94 L207,970.25 L209,972.34 L211,984.2 L213,984.02 L215,980.92 L217,982.08 L219,985.77 L221,985.75 L223,986.33 L225,986.51 L227,980.98 L229,966.62 L231,966.11 L233,979.22 L235,984.41 L237,986.75 L239,986.38 L241,987.66 L243,988.42 L245,986.11 L247,986.74 L249,986.47 L251,985.38 L253,985.9 L255,987.96 L257,988.39 L259,986.62 L261,987.52 L263,986.18 L265,981.72 L267,982.7 L269,981.54 L271,982.24 L273,985.82 L275,987.32 L277,986.82 L279,979.77 L281,972.02 L283,973.99 L285,981.44 L287,985.55 L289,986.61 L291,988.37 L293,987.62 L295,986.22 L297,987.5 L299,986.01 L301,986 L303,985.62 L305,986.49 L307,986.23 L309,983.59 L311,982.39 L313,983.27 L315,986.73 L317,985.16 L319,986.77 L321,987.1 L323,986.88 L325,987.77 L327,986.91 L329,987.79 L331,986.67 L333,985.79 L335,987.17 L337,986.04 L339,986.37 L341,987.91 L343,987.14 L345,987.77 L347,986.34 L349,987.34 L351,985.69 L353,985.17 L355,987.47 L357,986.17 L359,988.29 L361,988.53 L363,987.5 L365,985.75 L367,985.41 L369,985.5 L371,986.01 L373,986.9 L375,988.15 L377,987.09 L379,986.35 L381,985.64 L383,982.98 L385,983.76 L387,986.02 L389,986.85 L391,985.8 L393,985.47 L395,979.27 L397,970.26 L399,971.84 L401,982.15 L403,984.7 L405,986.7 L407,987.26 L409,987.97 L411,987.42 L413,986.51 L415,986.06 L417,986.64 L419,985.5 L421,986.45 L423,985.53 L425,987.49 L427,985.48 L429,977.14 L431,968.91 L433,973.59 L435,971.87 L437,978.8 L439,984.85 L441,986.62 L443,987.31 L445,982.15 L447,971.85 L449,948.75 L451,980.17 L453,986.94 L455,986.26 L457,986.43 L459,986.26 L461,985.81 L463,984.07 L465,986.56 L467,985.27 L469,983.11 L471,985.09 L473,986.5 L475,985.8 L477,987.59 L479,987.33 L481,987.37 L483,987.33 L485,985.57 L487,986.33 L489,984.48 L491,981.46 L493,978.94 L495,985.17 L497,987.6 L499,987.11 L501,985.29 L503,981.13 L505,984.03 L507,986.14 L509,987.06 L511,986.95 L513,986.49 L515,986.7 L517,987.26 L519,985.85 L521,985.25 L523,985.85 L525,986.4 L527,986.92 L529,984.48 L531,977.38 L533,967.56 L535,976.35 L537,977.96 L539,976 L541,983.47 L543,987.64 L545,988.24 L547,988.17 L549,986.51 L551,986.68 L553,985.95 L555,986.81 L557,985.5 L559,985.86 L561,986.09 L563,986.51 L565,988.42 L567,988.27 L569,986.49 L571,986.86 L573,986.07 L575,986.34 L577,986.42 L579,987.47 L581,986.86 L583,986.84 L585,987.05 L587,985.86 L589,985.87 L591,984.15 L593,973.15 L595,968.8 L597,970.71 L599,981.03 L601,986.39 L603,987.12 L605,983.45 L607,978.4 L609,980.33 L611,985.15 L613,986.67 L615,988.1 L617,988.42 L619,987.63 L621,987.41 L623,987.14 L625,987.01 L627,987.41 L629,987.99 L631,986.46 L633,987.05 L635,986.65 L637,986.98 L639,986.3 L641,985.8 L643,987.05 L645,986.5 L647,986.55 L649,986.95 L651,987.25 L653,986.74 L655,984.06 L657,981.88 L659,983.44 L661,985.97 L663,986.41 L665,984.65 L667,977.73 L669,966.53 L671,970.48 L673,980.91 L675,984.53 L677,986.54 L679,986.38 L681,987.08 L683,987.67 L685,985.26 L687,959.33 L689,956.68 L691,961.3 L693,984.84 L695,986.14 L697,985.92 L699,987.48 L701,987.38 L703,988 L705,986.22 L707,985.85 L709,982.71 L711,982.36 L713,986.39 L715,986.66 L717,987.52 L719,986.41 L721,985.89 L723,987.34 L725,984.37 L727,982.93 L729,983.43 L731,985.43 L733,988.02 L735,988.53 L737,987.52 L739,986.5 L741,987.16 L743,986.15 L745,985.48 L747,986.01 L749,978.74 L751,972.34 L753,977.36 L755,977.22 L757,978.81 L759,984.74 L761,986.88 L763,986.68 L765,985.92 L767,987.78 L769,986.39 L771,987.13 L773,987.52 L775,986.69 L777,987.03 L779,986.66 L781,984.13 L783,980.25 L785,981.85 L787,986.25 L789,986.24 L791,986.11 L793,986.72 L795,985.86 L797,986.75 L799,987.11 L801,988.32 L803,986.4 L805,986.48 L807,987.32 L809,986.66 L811,985.25 L813,985.53 L815,986.14 L817,987.32 L819,988.33 L821,986.53 L823,984.79 L825,983.22 L827,983.28 L829,986.34 L831,987.52 L833,987.24 L835,985.44 L836.8,984.9" fill="none" stroke="#6ed0e0" stroke-width="1.2" stroke-linejoin="round"/><path d="M117,992.11 L119,990.96 L121,989.05 L123,991.13 L125,992.24 L127,992.37 L129,992.46 L131,991.15 L133,989 L135,990.96 L137,992.42 L139,992.43 L141,992.38 L143,992.27 L145,992.22 L147,992.49 L149,992.42 L151,992.46 L153,992.56 L155,992.35 L157,992.45 L159,992.58 L161,992.53 L163,992.49 L165,992.44 L167,992.06 L169,992.41 L171,992.55 L173,992.54 L175,992.38 L177,992.46 L179,992.16 L181,992.49 L183,992.43 L185,992.33 L187,992.31 L189,992.71 L191,992.59 L193,992.7 L195,992.59 L197,992.32 L199,992.21 L201,992.32 L203,992.32 L205,992.3 L207,992.44 L209,992.7 L211,992.24 L213,992.13 L215,992.34 L217,992.14 L219,992.33 L221,992.4 L223,992.43 L225,992.8 L227,992.36 L229,992.37 L231,992.16 L233,992.32 L235,992.16 L237,992.29 L239,992.59 L241,992.45 L243,992.57 L245,992.67 L247,992.16 L249,992.05 L251,992.12 L253,992.44 L255,992.47 L257,992.38 L259,992.47 L261,992.35 L263,992.39 L265,992.08 L267,992.35 L269,992.47 L271,992.59 L273,992.59 L275,992.77 L277,992.3 L279,992.36 L281,992.59 L283,992.41 L285,992.21 L287,992.53 L289,992.48 L291,992.67 L293,992.45 L295,992.35 L297,992.38 L299,992.12 L301,992.19 L303,992.51 L305,992.28 L307,992.23 L309,992.31 L311,992.37 L313,992.6 L315,992.29 L317,992.16 L319,992.05 L321,992.55 L323,992.38 L325,992.37 L327,992.33 L329,992.28 L331,992.24 L333,992.39 L335,992.08 L337,992.05 L339,992.36 L341,992.35 L343,992.79 L345,992.35 L347,992.48 L349,992.49 L351,992.22 L353,992.5 L355,992.3 L357,992.29 L359,992.47 L361,992.32 L363,992.47 L365,992.28 L367,992.5 L369,992.42 L371,992.28 L373,992.13 L375,992.35 L377,992.41 L379,992.39 L381,992.32 L383,992.54 L385,992.09 L387,992.03 L389,992.53 L391,992.46 L393,992.76 L395,992.5 L397,992.7 L399,992.48 L401,992.45 L403,992.37 L405,992.28 L407,992.17 L409,992.33 L411,992.73 L413,992.74 L415,992.67 L417,992.27 L419,992.35 L421,992.4 L423,992.39 L425,992.58 L427,992.53 L429,992.63 L431,992.6 L433,992.29 L435,992.51 L437,992.48 L439,992.07 L441,992.61 L443,992.71 L445,992.63 L447,992.31 L449,992.65 L451,992.16 L453,992.5 L455,992.34 L457,992.1 L459,992.26 L461,992.59 L463,992.58 L465,992.62 L467,992.61 L469,992.16 L471,992 L473,992.49 L475,992.13 L477,992.67 L479,992.35 L481,992.69 L483,992.59 L485,992.53 L487,992.29 L489,992.26 L491,988.68 L493,986.79 L495,991.64 L497,992.74 L499,992.61 L501,991.39 L503,988.91 L505,991.02 L507,992.02 L509,992.42 L511,992.48 L513,992.73 L515,992.59 L517,992.27 L519,992.27 L521,992.4 L523,992.27 L525,992.08 L527,992.6 L529,992.69 L531,992.34 L533,992.52 L535,992.34 L537,992.44 L539,992.16 L541,992.15 L543,992.37 L545,992.72 L547,992.34 L549,992.34 L551,992.51 L553,992.53 L555,992.27 L557,992.22 L559,992.51 L561,992.57 L563,992.31 L565,992.74 L567,992.34 L569,992.29 L571,992.46 L573,992.21 L575,992.43 L577,992.21 L579,992.67 L581,992.38 L583,992.36 L585,992.44 L587,992.26 L589,992.28 L591,992.46 L593,992.43 L595,992.19 L597,992.43 L599,992.57 L601,992.49 L603,992.5 L605,992.28 L607,992.04 L609,992.16 L611,992.56 L613,992.41 L615,992.68 L617,992.77 L619,992.51 L621,992.43 L623,992.32 L625,992.17 L627,992.54 L629,992.42 L631,992.73 L633,992.45 L635,992.68 L637,992.53 L639,992.35 L641,992.22 L643,992.11 L645,992.52 L647,992.42 L649,992.63 L651,992.35 L653,992.23 L655,992.16 L657,992.42 L659,992.1 L661,992.53 L663,992.38 L665,992.56 L667,992.47 L669,992.55 L671,992.18 L673,992.24 L675,992.47 L677,992.13 L679,992.46 L681,992.4 L683,992.45 L685,992.29 L687,992.2 L689,992.56 L691,992.43 L693,992.41 L695,992.49 L697,992.67 L699,992.36 L701,992.59 L703,992.49 L705,992.42 L707,992.51 L709,992.38 L711,992.52 L713,992.2 L715,992.57 L717,992.64 L719,992.65 L721,992.5 L723,992.5 L725,992.16 L727,992.47 L729,992.29 L731,992.49 L733,992.73 L735,992.65 L737,992.39 L739,992.25 L741,992.2 L743,992.31 L745,992.54 L747,992.59 L749,992.44 L751,992.5 L753,992.68 L755,992.33 L757,992.29 L759,992.02 L761,992.1 L763,992.36 L765,992.54 L767,992.59 L769,992.48 L771,992.71 L773,992.44 L775,992.11 L777,992.03 L779,992.53 L781,992.64 L783,992.7 L785,992.6 L787,992.43 L789,992.23 L791,992.21 L793,992.12 L795,992.48 L797,992.54 L799,992.59 L801,992.36 L803,992.42 L805,992.38 L807,992.6 L809,992.12 L811,992.4 L813,992.38 L815,992.42 L817,992.73 L819,992.43 L821,992.54 L823,992.26 L825,992.12 L827,992.02 L829,992.17 L831,992.15 L833,992.23 L835,992.78 L836.8,992.44" fill="none" stroke="#ef843c" stroke-width="1.2" stroke-linejoin="round"/><path d="M117,1009.63 L119,1009.7 L121,1009.66 L123,1009.62 L125,1009.52 L127,1009.66 L129,1009.54 L131,1009.59 L133,1009.48 L135,1009.65 L137,1009.57 L139,1009.77 L141,1009.75 L143,1009.62 L145,1009.59 L147,1009.58 L149,1009.42 L151,1009.56 L153,1009.7 L155,1009.59 L157,1009.78 L159,1009.72 L161,1009.71 L163,1009.5 L165,1009.39 L167,1009.61 L169,1009.66 L171,1009.62 L173,1009.56 L175,1009.59 L177,1009.68 L179,1009.51 L181,1009.66 L183,1009.54 L185,1009.45 L187,1009.65 L189,1009.62 L191,1009.82 L193,1009.79 L195,1009.61 L197,1009.59 L199,1009.57 L201,1009.61 L203,1009.69 L205,1009.23 L207,1008.62 L209,1008.11 L211,1008.56 L213,1009.33 L215,1009.37 L217,1009.62 L219,1009.55 L221,1009.49 L223,1009.72 L225,1009.63 L227,1009.58 L229,1009.6 L231,1009.44 L233,1009.42 L235,1009.63 L237,1009.64 L239,1009.49 L241,1009.77 L243,1009.54 L245,1009.59 L247,1009.7 L249,1009.56 L251,1009.45 L253,1009.51 L255,1009.58 L257,1009.56 L259,1009.84 L261,1009.53 L263,1009.58 L265,1009.62 L267,1009.48 L269,1009.67 L271,1009.5 L273,1009.79 L275,1009.8 L277,1009.73 L279,1009.76 L281,1009.56 L283,1009.62 L285,1009.6 L287,1009.55 L289,1009.6 L291,1009.73 L293,1009.66 L295,1009.54 L297,1009.68 L299,1009.47 L301,1009.51 L303,1009.61 L305,1009.48 L307,1009.5 L309,1009.57 L311,1009.71 L313,1009.6 L315,1009.5 L317,1009.51 L319,1009.64 L321,1009.47 L323,1009.58 L325,1009.78 L327,1009.72 L329,1009.59 L331,1009.6 L333,1009.54 L335,1009.4 L337,1009.49 L339,1009.52 L341,1009.74 L343,1009.63 L345,1009.73 L347,1009.78 L349,1009.7 L351,1009.48 L353,1009.54 L355,1009.5 L357,1009.58 L359,1009.67 L361,1009.78 L363,1009.79 L365,1009.54 L367,1009.39 L369,1009.5 L371,1009.39 L373,1009.44 L375,1009.73 L377,1009.57 L379,1009.75 L381,1009.59 L383,1009.7 L385,1009.63 L387,1009.38 L389,1009.46 L391,1009.75 L393,1009.7 L395,1009.67 L397,1009.75 L399,1009.7 L401,1009.54 L403,1009.5 L405,1009.41 L407,1009.54 L409,1009.54 L411,1009.72 L413,1009.71 L415,1009.53 L417,1009.61 L419,1009.4 L421,1009.39 L423,1009.6 L425,1009.6 L427,1009.79 L429,1009.73 L431,1009.72 L433,1009.49 L435,1009.64 L437,1009.39 L439,1009.56 L441,1009.7 L443,1009.73 L445,1009.45 L447,1008.51 L449,1008.11 L451,1008.77 L453,1009.21 L455,1009.63 L457,1009.67 L459,1009.6 L461,1009.76 L463,1009.67 L465,1009.59 L467,1009.66 L469,1009.41 L471,1009.6 L473,1009.67 L475,1009.52 L477,1009.78 L479,1009.56 L481,1009.79 L483,1009.57 L485,1009.71 L487,1009.5 L489,1009.64 L491,1009.41 L493,1009.49 L495,1009.77 L497,1009.73 L499,1009.67 L501,1009.46 L503,1009.44 L505,1009.47 L507,1009.39 L509,1009.73 L511,1009.73 L513,1009.82 L515,1009.74 L517,1009.58 L519,1009.44 L521,1009.59 L523,1009.4 L525,1009.57 L527,1009.61 L529,1009.67 L531,1009.56 L533,1009.53 L535,1009.6 L537,1009.4 L539,1009.52 L541,1009.43 L543,1009.52 L545,1009.55 L547,1009.71 L549,1009.65 L551,1009.55 L553,1009.48 L555,1009.54 L557,1009.64 L559,1009.53 L561,1009.52 L563,1009.62 L565,1009.61 L567,1009.68 L569,1009.68 L571,1009.56 L573,1009.42 L575,1009.48 L577,1009.55 L579,1009.63 L581,1009.66 L583,1009.83 L585,1009.64 L587,1009.61 L589,1009.58 L591,1009.56 L593,1009.65 L595,1009.58 L597,1009.72 L599,1009.83 L601,1009.56 L603,1009.63 L605,1009.5 L607,1009.38 L609,1009.39 L611,1009.67 L613,1009.54 L615,1009.75 L617,1009.56 L619,1009.59 L621,1009.42 L623,1009.53 L625,1009.6 L627,1009.48 L629,1009.64 L631,1009.8 L633,1009.63 L635,1009.65 L637,1009.66 L639,1009.64 L641,1009.41 L643,1009.58 L645,1009.48 L647,1009.54 L649,1009.83 L651,1009.54 L653,1009.75 L655,1009.64 L657,1009.57 L659,1009.58 L661,1009.6 L663,1009.56 L665,1009.66 L667,1009.6 L669,1009.76 L671,1009.68 L673,1009.62 L675,1009.42 L677,1009.56 L679,1009.52 L681,1009.74 L683,1009.72 L685,1009.5 L687,1008.57 L689,1008.02 L691,1008.66 L693,1009.17 L695,1009.57 L697,1009.48 L699,1009.64 L701,1009.57 L703,1009.79 L705,1009.45 L707,1009.66 L709,1009.64 L711,1009.51 L713,1009.69 L715,1009.52 L717,1009.58 L719,1009.53 L721,1009.49 L723,1009.41 L725,1009.61 L727,1009.39 L729,1009.59 L731,1009.56 L733,1009.57 L735,1009.66 L737,1009.56 L739,1009.73 L741,1009.5 L743,1009.54 L745,1009.55 L747,1009.63 L749,1009.65 L751,1009.62 L753,1009.57 L755,1009.74 L757,1009.47 L759,1009.5 L761,1009.61 L763,1009.59 L765,1009.76 L767,1009.77 L769,1009.69 L771,1009.54 L773,1009.62 L775,1009.52 L777,1009.62 L779,1009.54 L781,1009.65 L783,1009.75 L785,1009.68 L787,1009.78 L789,1009.74 L791,1009.45 L793,1009.64 L795,1009.63 L797,1009.67 L799,1009.58 L801,1009.6 L803,1009.58 L805,1009.61 L807,1009.69 L809,1009.49 L811,1009.36 L813,1009.48 L815,1009.47 L817,1009.69 L819,1009.77 L821,1009.8 L823,1009.5 L825,1009.52 L827,1009.4 L829,1009.64 L831,1009.67 L833,1009.64 L835,1009.82 L836.8,1009.69" fill="none" stroke="#eab839" stroke-width="1.6" stroke-linejoin="round"/></g><rect x="117" y="939" width="719.8" height="1" fill="rgba(204,204,220,0.21)"/><rect x="117" y="956" width="719.8" height="1" fill="rgba(204,204,220,0.21)"/><rect x="117" y="974" width="719.8" height="1" fill="rgba(204,204,220,0.21)"/><rect x="117" y="992" width="719.8" height="1" fill="rgba(204,204,220,0.21)"/><rect x="117" y="1009" width="719.8" height="1" fill="rgba(204,204,220,0.21)"/><rect x="205" y="939" width="1" height="71" fill="rgba(204,204,220,0.21)"/><rect x="325" y="939" width="1" height="71" fill="rgba(204,204,220,0.21)"/><rect x="445" y="939" width="1" height="71" fill="rgba(204,204,220,0.21)"/><rect x="565" y="939" width="1" height="71" fill="rgba(204,204,220,0.21)"/><rect x="685" y="939" width="1" height="71" fill="rgba(204,204,220,0.21)"/><rect x="805" y="939" width="1" height="71" fill="rgba(204,204,220,0.21)"/><text x="111" y="943.26" font-size="12" font-weight="400" text-anchor="end" fill="#d0d1de" textLength="33.97" lengthAdjust="spacingAndGlyphs">43 p/s</text><text x="111" y="960.56" font-size="12" font-weight="400" text-anchor="end" fill="#d0d1de" textLength="33.97" lengthAdjust="spacingAndGlyphs">42 p/s</text><text x="111" y="978.26" font-size="12" font-weight="400" text-anchor="end" fill="#d0d1de" textLength="33.97" lengthAdjust="spacingAndGlyphs">41 p/s</text><text x="111" y="996.06" font-size="12" font-weight="400" text-anchor="end" fill="#d0d1de" textLength="33.97" lengthAdjust="spacingAndGlyphs">40 p/s</text><text x="111" y="1013.76" font-size="12" font-weight="400" text-anchor="end" fill="#d0d1de" textLength="33.97" lengthAdjust="spacingAndGlyphs">39 p/s</text><rect x="838.5" y="939" width="4" height="1" fill="rgba(204,204,220,0.21)"/><text x="848" y="943.26" font-size="12" font-weight="400" text-anchor="start" fill="#d0d1de" stroke="#d0d1de" stroke-width="0.3">100</text><rect x="838.5" y="974" width="4" height="1" fill="rgba(204,204,220,0.21)"/><text x="848" y="978.26" font-size="12" font-weight="400" text-anchor="start" fill="#d0d1de" stroke="#d0d1de" stroke-width="0.3">50</text><rect x="838.5" y="1009" width="4" height="1" fill="rgba(204,204,220,0.21)"/><text x="848" y="1013.76" font-size="12" font-weight="400" text-anchor="start" fill="#d0d1de" stroke="#d0d1de" stroke-width="0.3">0</text><text x="205.5" y="1028.96" font-size="12" font-weight="400" text-anchor="middle" fill="#d0d1de" textLength="28.8" lengthAdjust="spacingAndGlyphs">12:30</text><text x="325.2" y="1028.96" font-size="12" font-weight="400" text-anchor="middle" fill="#d0d1de" textLength="28.8" lengthAdjust="spacingAndGlyphs">13:00</text><text x="445" y="1028.96" font-size="12" font-weight="400" text-anchor="middle" fill="#d0d1de" textLength="28.8" lengthAdjust="spacingAndGlyphs">13:30</text><text x="565.5" y="1028.96" font-size="12" font-weight="400" text-anchor="middle" fill="#d0d1de" textLength="28.8" lengthAdjust="spacingAndGlyphs">14:00</text><text x="685" y="1028.96" font-size="12" font-weight="400" text-anchor="middle" fill="#d0d1de" textLength="28.8" lengthAdjust="spacingAndGlyphs">14:30</text><text x="804.8" y="1028.96" font-size="12" font-weight="400" text-anchor="middle" fill="#d0d1de" textLength="28.8" lengthAdjust="spacingAndGlyphs">15:00</text><rect x="86" y="1050.3" width="14" height="4" rx="1" fill="#6ed0e0"/><text x="113.8" y="1053.96" font-size="12" font-weight="400" text-anchor="start" fill="#d0d1de" textLength="22.7" lengthAdjust="spacingAndGlyphs">SYN</text><rect x="153" y="1050.3" width="14" height="4" rx="1" fill="#ef843c"/><text x="181" y="1053.96" font-size="12" font-weight="400" text-anchor="start" fill="#d0d1de" textLength="49.9" lengthAdjust="spacingAndGlyphs">SYN-ACK</text><rect x="750" y="1050.3" width="14" height="4" rx="1" fill="#eab839"/><text x="778.5" y="1053.96" font-size="12" font-weight="400" text-anchor="start" fill="#d0d1de" textLength="20.5" lengthAdjust="spacingAndGlyphs">RST</text><rect x="816" y="1050.3" width="14" height="4" rx="1" fill="#7eb26d"/><text x="844" y="1053.96" font-size="12" font-weight="400" text-anchor="start" fill="#d0d1de" textLength="18.4" lengthAdjust="spacingAndGlyphs">FIN</text><rect x="886.5" y="888.5" width="810" height="181" rx="2.5" fill="#181b1f" stroke="#232529" stroke-width="1"/><text x="1291.5" y="909.62" font-size="14" font-weight="700" text-anchor="middle" fill="#d0d1de" textLength="162.75" lengthAdjust="spacingAndGlyphs">Missing TCPv4 SYN-ACKs</text><rect x="929" y="939.3" width="742.7" height="65.7" fill="rgba(234,112,112,0.12)"/><defs><clipPath id="c10"><rect x="929" y="938.3" width="742.7" height="72.9"/></clipPath></defs><g clip-path="url(#c10)"><path d="M929,1000.61 L930.6,1001.9 L932.2,1002.2 L933.8,1003.19 L935.4,1001.71 L937,1002.2 L938.6,1002.03 L940.2,1002.05 L941.8,1003.13 L943.4,1000.79 L945,1001.57 L946.6,1000.44 L948.2,1000.82 L949.8,1001.62 L951.4,1003.36 L953,1003.14 L954.6,1001.62 L956.2,1002.36 L957.8,1001.51 L959.4,1001.91 L961,996.95 L962.6,992.91 L964.2,995.93 L965.8,1000.52 L967.4,1003.16 L969,1003.41 L970.6,1002.22 L972.2,1004.15 L973.8,1002.91 L975.4,1003.3 L977,1002.21 L978.6,1001.34 L980.2,1000.91 L981.8,1001.16 L983.4,1001.16 L985,1001.07 L986.6,1003.68 L988.2,1003.94 L989.8,1004.53 L991.4,1003.37 L993,1002.33 L994.6,1001.65 L996.2,998.08 L997.8,999.22 L999.4,999.81 L1001,999.98 L1002.6,999.64 L1004.2,1000.24 L1005.8,1000.5 L1007.4,1002.29 L1009,1002.87 L1010.6,1001.82 L1012.2,1000.54 L1013.8,1001.32 L1015.4,1000.54 L1017,1000.8 L1018.6,1000.57 L1020.2,997.14 L1021.8,984.49 L1023.4,979.51 L1025,990.35 L1026.6,998.02 L1028.2,999.36 L1029.8,998.11 L1031.4,996.42 L1033,999.1 L1034.6,1002.5 L1036.2,1003.31 L1037.8,1003.2 L1039.4,1001.93 L1041,1001.57 L1042.6,997.05 L1044.2,983.77 L1045.8,973.11 L1047.4,977.37 L1049,992.95 L1050.6,999.16 L1052.2,1002.41 L1053.8,1001.41 L1055.4,1004.34 L1057,1003.41 L1058.6,1003.63 L1060.2,1001.71 L1061.8,1002.4 L1063.4,1001.82 L1065,1001.6 L1066.6,1000.94 L1068.2,1002.37 L1069.8,1001.71 L1071.4,1002.08 L1073,1002.02 L1074.6,1003.64 L1076.2,1001.67 L1077.8,1001.55 L1079.4,1000.56 L1081,1001.88 L1082.6,1001.47 L1084.2,1001.59 L1085.8,1000.48 L1087.4,1002.21 L1089,1002.38 L1090.6,1001.86 L1092.2,1001.4 L1093.8,1002.96 L1095.4,995.11 L1097,985.92 L1098.6,980.49 L1100.2,987.65 L1101.8,995.29 L1103.4,1001.03 L1105,1002.09 L1106.6,1003.97 L1108.2,1001.62 L1109.8,1002.42 L1111.4,1002.48 L1113,1003.38 L1114.6,1001.57 L1116.2,1001.23 L1117.8,1001.9 L1119.4,1001.15 L1121,1000.86 L1122.6,1002.73 L1124.2,1003.98 L1125.8,1002.31 L1127.4,998.08 L1129,996.75 L1130.6,997.54 L1132.2,998.09 L1133.8,1000.85 L1135.4,1000.96 L1137,1001.17 L1138.6,1001.83 L1140.2,1002.02 L1141.8,1002.65 L1143.4,1001.6 L1145,1002.3 L1146.6,1000.85 L1148.2,1002.38 L1149.8,1001.63 L1151.4,999.86 L1153,1002.48 L1154.6,1001.22 L1156.2,1002.6 L1157.8,1003.18 L1159.4,1002.59 L1161,1002.23 L1162.6,1002.22 L1164.2,1000.8 L1165.8,1002.56 L1167.4,1000.14 L1169,1002.41 L1170.6,1000.99 L1172.2,1001.77 L1173.8,1002.49 L1175.4,1001.68 L1177,1001.92 L1178.6,1002.29 L1180.2,1002.03 L1181.8,1002.83 L1183.4,1002.84 L1185,999.95 L1186.6,1001.67 L1188.2,1000.92 L1189.8,1003.46 L1191.4,1002.42 L1193,1004.28 L1194.6,1003.07 L1196.2,1001.4 L1197.8,1000.52 L1199.4,1000.79 L1201,1002.42 L1202.6,1000.33 L1204.2,1001.66 L1205.8,1001.85 L1207.4,1002.27 L1209,1003.95 L1210.6,1002.18 L1212.2,1003.09 L1213.8,1000.38 L1215.4,994 L1217,982.25 L1218.6,979.59 L1220.2,985.77 L1221.8,996.19 L1223.4,1001.51 L1225,1003.74 L1226.6,1004.28 L1228.2,1001.85 L1229.8,1001.55 L1231.4,1002.22 L1233,1002.57 L1234.6,1001.44 L1236.2,1000.74 L1237.8,1003.02 L1239.4,1001.51 L1241,1001.39 L1242.6,1001.65 L1244.2,1001.69 L1245.8,1003.57 L1247.4,1001.25 L1249,1001.95 L1250.6,995.82 L1252.2,982.05 L1253.8,984.33 L1255.4,993.07 L1257,986.9 L1258.6,988.28 L1260.2,999.41 L1261.8,1002.09 L1263.4,1003.52 L1265,1001.07 L1266.6,1001.12 L1268.2,1000.76 L1269.8,978.67 L1271.4,951.14 L1273,980.3 L1274.6,1000.26 L1276.2,1001.41 L1277.8,1001.69 L1279.4,1002.24 L1281,1002.06 L1282.6,1003.35 L1284.2,1000.81 L1285.8,1002.37 L1287.4,1002.43 L1289,1001.45 L1290.6,1003.68 L1292.2,1003.49 L1293.8,1002.99 L1295.4,1002.37 L1297,1002.71 L1298.6,1003.57 L1300.2,1001.95 L1301.8,1000.52 L1303.4,1000.93 L1305,1001.39 L1306.6,1000.95 L1308.2,1002.62 L1309.8,1001.46 L1311.4,1004.05 L1313,1002.05 L1314.6,1001.48 L1316.2,1002.42 L1317.8,1001.08 L1319.4,1002.51 L1321,1001.32 L1322.6,1001.67 L1324.2,1003.08 L1325.8,1001.74 L1327.4,1003.72 L1329,1003.54 L1330.6,1002.69 L1332.2,1003.86 L1333.8,1000.52 L1335.4,1002.6 L1337,1000.24 L1338.6,1002.42 L1340.2,1000.73 L1341.8,1000.95 L1343.4,1002.77 L1345,1004.34 L1346.6,1002.33 L1348.2,1002.72 L1349.8,1002.6 L1351.4,1000.99 L1353,1001.43 L1354.6,998.84 L1356.2,994.4 L1357.8,982.72 L1359.4,978.22 L1361,988.29 L1362.6,988.96 L1364.2,990.05 L1365.8,997.65 L1367.4,1002.85 L1369,1002.31 L1370.6,1000.13 L1372.2,1002.6 L1373.8,1002.96 L1375.4,1003.11 L1377,1003.67 L1378.6,1003.56 L1380.2,1003.75 L1381.8,1003.36 L1383.4,1002.67 L1385,1001.15 L1386.6,1000.36 L1388.2,1001.98 L1389.8,1001.73 L1391.4,1000.52 L1393,1002.79 L1394.6,1003.16 L1396.2,1003.12 L1397.8,1003.86 L1399.4,1003.83 L1401,1001.84 L1402.6,1002.64 L1404.2,1001.36 L1405.8,1001.54 L1407.4,1001.32 L1409,1003.34 L1410.6,1002.4 L1412.2,1004.32 L1413.8,1002.61 L1415.4,1003.43 L1417,1003.36 L1418.6,999.11 L1420.2,988.85 L1421.8,981.87 L1423.4,990.3 L1425,998.73 L1426.6,1002.91 L1428.2,1003.58 L1429.8,1004.47 L1431.4,1002.21 L1433,998.06 L1434.6,992.64 L1436.2,994.97 L1437.8,998.14 L1439.4,1000.26 L1441,1000.43 L1442.6,1001.4 L1444.2,1001.85 L1445.8,1004.3 L1447.4,1002.22 L1449,1004.3 L1450.6,1002.01 L1452.2,1001.22 L1453.8,1003.05 L1455.4,1000.1 L1457,1000.18 L1458.6,1000.53 L1460.2,1000.83 L1461.8,1002.3 L1463.4,1002.14 L1465,1002.07 L1466.6,1001.43 L1468.2,1003.03 L1469.8,1000.56 L1471.4,1000.68 L1473,1001.5 L1474.6,1002.58 L1476.2,1002.29 L1477.8,1002.96 L1479.4,1003.41 L1481,1003.97 L1482.6,1004.05 L1484.2,1000.82 L1485.8,996.57 L1487.4,996.13 L1489,999.15 L1490.6,1001.13 L1492.2,1002.37 L1493.8,1000.71 L1495.4,1000.58 L1497,991.99 L1498.6,979.55 L1500.2,975.84 L1501.8,986.39 L1503.4,997.52 L1505,1000.97 L1506.6,1002.47 L1508.2,1000.71 L1509.8,1002.36 L1511.4,1001 L1513,1003.17 L1514.6,1001.58 L1516.2,992.78 L1517.8,962.31 L1519.4,957.86 L1521,965.1 L1522.6,993.4 L1524.2,1000.53 L1525.8,1000.28 L1527.4,1001.72 L1529,1001.23 L1530.6,1003.48 L1532.2,1003.32 L1533.8,1002.77 L1535.4,1003.27 L1537,1001.18 L1538.6,999.96 L1540.2,997.53 L1541.8,995.82 L1543.4,1000.82 L1545,1000.47 L1546.6,1001.38 L1548.2,1003.88 L1549.8,1004.05 L1551.4,1002.74 L1553,1002.18 L1554.6,1000.3 L1556.2,997.62 L1557.8,997.19 L1559.4,997.65 L1561,999.85 L1562.6,1003.41 L1564.2,1001.33 L1565.8,1002.65 L1567.4,1003.81 L1569,1003.5 L1570.6,1001.09 L1572.2,1002.48 L1573.8,1001.58 L1575.4,1001.7 L1577,1002.8 L1578.6,1001.99 L1580.2,997.01 L1581.8,987.95 L1583.4,984.22 L1585,986.96 L1586.6,987.84 L1588.2,995.41 L1589.8,1000.28 L1591.4,999.85 L1593,1002.23 L1594.6,1001.2 L1596.2,1001.96 L1597.8,1002.05 L1599.4,1003.19 L1601,1002.79 L1602.6,1003.85 L1604.2,1002.67 L1605.8,1002.04 L1607.4,1002.3 L1609,1001.12 L1610.6,1001.55 L1612.2,1002.45 L1613.8,1001.77 L1615.4,998.76 L1617,995.76 L1618.6,996.17 L1620.2,1000.12 L1621.8,1000.75 L1623.4,1000.86 L1625,1001.16 L1626.6,1001.32 L1628.2,1002.78 L1629.8,1000.68 L1631.4,1002.13 L1633,1003.69 L1634.6,1002.98 L1636.2,1003.97 L1637.8,1001.48 L1639.4,1002.79 L1641,1001.32 L1642.6,1001.51 L1644.2,1000.06 L1645.8,1001.46 L1647.4,1003.17 L1649,1003.46 L1650.6,1003.25 L1652.2,1002.83 L1653.8,1001.39 L1655.4,1002.68 L1657,1000.17 L1658.6,998.13 L1660.2,997.22 L1661.8,999.18 L1663.4,1002.68 L1665,1001.33 L1666.6,1004.28 L1668.2,1001.85 L1669.8,1004.4 L1671.4,1002.87 L1671.7,1002.36 L1671.7,1010.5 L929,1010.5 Z" fill="#7eb26d" fill-opacity="0.1"/><path d="M929,1000.61 L930.6,1001.9 L932.2,1002.2 L933.8,1003.19 L935.4,1001.71 L937,1002.2 L938.6,1002.03 L940.2,1002.05 L941.8,1003.13 L943.4,1000.79 L945,1001.57 L946.6,1000.44 L948.2,1000.82 L949.8,1001.62 L951.4,1003.36 L953,1003.14 L954.6,1001.62 L956.2,1002.36 L957.8,1001.51 L959.4,1001.91 L961,996.95 L962.6,992.91 L964.2,995.93 L965.8,1000.52 L967.4,1003.16 L969,1003.41 L970.6,1002.22 L972.2,1004.15 L973.8,1002.91 L975.4,1003.3 L977,1002.21 L978.6,1001.34 L980.2,1000.91 L981.8,1001.16 L983.4,1001.16 L985,1001.07 L986.6,1003.68 L988.2,1003.94 L989.8,1004.53 L991.4,1003.37 L993,1002.33 L994.6,1001.65 L996.2,998.08 L997.8,999.22 L999.4,999.81 L1001,999.98 L1002.6,999.64 L1004.2,1000.24 L1005.8,1000.5 L1007.4,1002.29 L1009,1002.87 L1010.6,1001.82 L1012.2,1000.54 L1013.8,1001.32 L1015.4,1000.54 L1017,1000.8 L1018.6,1000.57 L1020.2,997.14 L1021.8,984.49 L1023.4,979.51 L1025,990.35 L1026.6,998.02 L1028.2,999.36 L1029.8,998.11 L1031.4,996.42 L1033,999.1 L1034.6,1002.5 L1036.2,1003.31 L1037.8,1003.2 L1039.4,1001.93 L1041,1001.57 L1042.6,997.05 L1044.2,983.77 L1045.8,973.11 L1047.4,977.37 L1049,992.95 L1050.6,999.16 L1052.2,1002.41 L1053.8,1001.41 L1055.4,1004.34 L1057,1003.41 L1058.6,1003.63 L1060.2,1001.71 L1061.8,1002.4 L1063.4,1001.82 L1065,1001.6 L1066.6,1000.94 L1068.2,1002.37 L1069.8,1001.71 L1071.4,1002.08 L1073,1002.02 L1074.6,1003.64 L1076.2,1001.67 L1077.8,1001.55 L1079.4,1000.56 L1081,1001.88 L1082.6,1001.47 L1084.2,1001.59 L1085.8,1000.48 L1087.4,1002.21 L1089,1002.38 L1090.6,1001.86 L1092.2,1001.4 L1093.8,1002.96 L1095.4,995.11 L1097,985.92 L1098.6,980.49 L1100.2,987.65 L1101.8,995.29 L1103.4,1001.03 L1105,1002.09 L1106.6,1003.97 L1108.2,1001.62 L1109.8,1002.42 L1111.4,1002.48 L1113,1003.38 L1114.6,1001.57 L1116.2,1001.23 L1117.8,1001.9 L1119.4,1001.15 L1121,1000.86 L1122.6,1002.73 L1124.2,1003.98 L1125.8,1002.31 L1127.4,998.08 L1129,996.75 L1130.6,997.54 L1132.2,998.09 L1133.8,1000.85 L1135.4,1000.96 L1137,1001.17 L1138.6,1001.83 L1140.2,1002.02 L1141.8,1002.65 L1143.4,1001.6 L1145,1002.3 L1146.6,1000.85 L1148.2,1002.38 L1149.8,1001.63 L1151.4,999.86 L1153,1002.48 L1154.6,1001.22 L1156.2,1002.6 L1157.8,1003.18 L1159.4,1002.59 L1161,1002.23 L1162.6,1002.22 L1164.2,1000.8 L1165.8,1002.56 L1167.4,1000.14 L1169,1002.41 L1170.6,1000.99 L1172.2,1001.77 L1173.8,1002.49 L1175.4,1001.68 L1177,1001.92 L1178.6,1002.29 L1180.2,1002.03 L1181.8,1002.83 L1183.4,1002.84 L1185,999.95 L1186.6,1001.67 L1188.2,1000.92 L1189.8,1003.46 L1191.4,1002.42 L1193,1004.28 L1194.6,1003.07 L1196.2,1001.4 L1197.8,1000.52 L1199.4,1000.79 L1201,1002.42 L1202.6,1000.33 L1204.2,1001.66 L1205.8,1001.85 L1207.4,1002.27 L1209,1003.95 L1210.6,1002.18 L1212.2,1003.09 L1213.8,1000.38 L1215.4,994 L1217,982.25 L1218.6,979.59 L1220.2,985.77 L1221.8,996.19 L1223.4,1001.51 L1225,1003.74 L1226.6,1004.28 L1228.2,1001.85 L1229.8,1001.55 L1231.4,1002.22 L1233,1002.57 L1234.6,1001.44 L1236.2,1000.74 L1237.8,1003.02 L1239.4,1001.51 L1241,1001.39 L1242.6,1001.65 L1244.2,1001.69 L1245.8,1003.57 L1247.4,1001.25 L1249,1001.95 L1250.6,995.82 L1252.2,982.05 L1253.8,984.33 L1255.4,993.07 L1257,986.9 L1258.6,988.28 L1260.2,999.41 L1261.8,1002.09 L1263.4,1003.52 L1265,1001.07 L1266.6,1001.12 L1268.2,1000.76 L1269.8,978.67 L1271.4,951.14 L1273,980.3 L1274.6,1000.26 L1276.2,1001.41 L1277.8,1001.69 L1279.4,1002.24 L1281,1002.06 L1282.6,1003.35 L1284.2,1000.81 L1285.8,1002.37 L1287.4,1002.43 L1289,1001.45 L1290.6,1003.68 L1292.2,1003.49 L1293.8,1002.99 L1295.4,1002.37 L1297,1002.71 L1298.6,1003.57 L1300.2,1001.95 L1301.8,1000.52 L1303.4,1000.93 L1305,1001.39 L1306.6,1000.95 L1308.2,1002.62 L1309.8,1001.46 L1311.4,1004.05 L1313,1002.05 L1314.6,1001.48 L1316.2,1002.42 L1317.8,1001.08 L1319.4,1002.51 L1321,1001.32 L1322.6,1001.67 L1324.2,1003.08 L1325.8,1001.74 L1327.4,1003.72 L1329,1003.54 L1330.6,1002.69 L1332.2,1003.86 L1333.8,1000.52 L1335.4,1002.6 L1337,1000.24 L1338.6,1002.42 L1340.2,1000.73 L1341.8,1000.95 L1343.4,1002.77 L1345,1004.34 L1346.6,1002.33 L1348.2,1002.72 L1349.8,1002.6 L1351.4,1000.99 L1353,1001.43 L1354.6,998.84 L1356.2,994.4 L1357.8,982.72 L1359.4,978.22 L1361,988.29 L1362.6,988.96 L1364.2,990.05 L1365.8,997.65 L1367.4,1002.85 L1369,1002.31 L1370.6,1000.13 L1372.2,1002.6 L1373.8,1002.96 L1375.4,1003.11 L1377,1003.67 L1378.6,1003.56 L1380.2,1003.75 L1381.8,1003.36 L1383.4,1002.67 L1385,1001.15 L1386.6,1000.36 L1388.2,1001.98 L1389.8,1001.73 L1391.4,1000.52 L1393,1002.79 L1394.6,1003.16 L1396.2,1003.12 L1397.8,1003.86 L1399.4,1003.83 L1401,1001.84 L1402.6,1002.64 L1404.2,1001.36 L1405.8,1001.54 L1407.4,1001.32 L1409,1003.34 L1410.6,1002.4 L1412.2,1004.32 L1413.8,1002.61 L1415.4,1003.43 L1417,1003.36 L1418.6,999.11 L1420.2,988.85 L1421.8,981.87 L1423.4,990.3 L1425,998.73 L1426.6,1002.91 L1428.2,1003.58 L1429.8,1004.47 L1431.4,1002.21 L1433,998.06 L1434.6,992.64 L1436.2,994.97 L1437.8,998.14 L1439.4,1000.26 L1441,1000.43 L1442.6,1001.4 L1444.2,1001.85 L1445.8,1004.3 L1447.4,1002.22 L1449,1004.3 L1450.6,1002.01 L1452.2,1001.22 L1453.8,1003.05 L1455.4,1000.1 L1457,1000.18 L1458.6,1000.53 L1460.2,1000.83 L1461.8,1002.3 L1463.4,1002.14 L1465,1002.07 L1466.6,1001.43 L1468.2,1003.03 L1469.8,1000.56 L1471.4,1000.68 L1473,1001.5 L1474.6,1002.58 L1476.2,1002.29 L1477.8,1002.96 L1479.4,1003.41 L1481,1003.97 L1482.6,1004.05 L1484.2,1000.82 L1485.8,996.57 L1487.4,996.13 L1489,999.15 L1490.6,1001.13 L1492.2,1002.37 L1493.8,1000.71 L1495.4,1000.58 L1497,991.99 L1498.6,979.55 L1500.2,975.84 L1501.8,986.39 L1503.4,997.52 L1505,1000.97 L1506.6,1002.47 L1508.2,1000.71 L1509.8,1002.36 L1511.4,1001 L1513,1003.17 L1514.6,1001.58 L1516.2,992.78 L1517.8,962.31 L1519.4,957.86 L1521,965.1 L1522.6,993.4 L1524.2,1000.53 L1525.8,1000.28 L1527.4,1001.72 L1529,1001.23 L1530.6,1003.48 L1532.2,1003.32 L1533.8,1002.77 L1535.4,1003.27 L1537,1001.18 L1538.6,999.96 L1540.2,997.53 L1541.8,995.82 L1543.4,1000.82 L1545,1000.47 L1546.6,1001.38 L1548.2,1003.88 L1549.8,1004.05 L1551.4,1002.74 L1553,1002.18 L1554.6,1000.3 L1556.2,997.62 L1557.8,997.19 L1559.4,997.65 L1561,999.85 L1562.6,1003.41 L1564.2,1001.33 L1565.8,1002.65 L1567.4,1003.81 L1569,1003.5 L1570.6,1001.09 L1572.2,1002.48 L1573.8,1001.58 L1575.4,1001.7 L1577,1002.8 L1578.6,1001.99 L1580.2,997.01 L1581.8,987.95 L1583.4,984.22 L1585,986.96 L1586.6,987.84 L1588.2,995.41 L1589.8,1000.28 L1591.4,999.85 L1593,1002.23 L1594.6,1001.2 L1596.2,1001.96 L1597.8,1002.05 L1599.4,1003.19 L1601,1002.79 L1602.6,1003.85 L1604.2,1002.67 L1605.8,1002.04 L1607.4,1002.3 L1609,1001.12 L1610.6,1001.55 L1612.2,1002.45 L1613.8,1001.77 L1615.4,998.76 L1617,995.76 L1618.6,996.17 L1620.2,1000.12 L1621.8,1000.75 L1623.4,1000.86 L1625,1001.16 L1626.6,1001.32 L1628.2,1002.78 L1629.8,1000.68 L1631.4,1002.13 L1633,1003.69 L1634.6,1002.98 L1636.2,1003.97 L1637.8,1001.48 L1639.4,1002.79 L1641,1001.32 L1642.6,1001.51 L1644.2,1000.06 L1645.8,1001.46 L1647.4,1003.17 L1649,1003.46 L1650.6,1003.25 L1652.2,1002.83 L1653.8,1001.39 L1655.4,1002.68 L1657,1000.17 L1658.6,998.13 L1660.2,997.22 L1661.8,999.18 L1663.4,1002.68 L1665,1001.33 L1666.6,1004.28 L1668.2,1001.85 L1669.8,1004.4 L1671.4,1002.87 L1671.7,1002.36" fill="none" stroke="#7eb26d" stroke-width="1.2" stroke-linejoin="round"/></g><rect x="929" y="939" width="742.7" height="1" fill="rgba(204,204,220,0.21)"/><rect x="929" y="962" width="742.7" height="1" fill="rgba(204,204,220,0.21)"/><rect x="929" y="986" width="742.7" height="1" fill="rgba(204,204,220,0.21)"/><rect x="929" y="1010" width="742.7" height="1" fill="rgba(204,204,220,0.21)"/><rect x="1020" y="939" width="1" height="72" fill="rgba(204,204,220,0.21)"/><rect x="1144" y="939" width="1" height="72" fill="rgba(204,204,220,0.21)"/><rect x="1268" y="939" width="1" height="72" fill="rgba(204,204,220,0.21)"/><rect x="1392" y="939" width="1" height="72" fill="rgba(204,204,220,0.21)"/><rect x="1516" y="939" width="1" height="72" fill="rgba(204,204,220,0.21)"/><rect x="1639" y="939" width="1" height="72" fill="rgba(204,204,220,0.21)"/><path d="M929,1004.9 H1671.7" stroke="#bf3a2b" stroke-width="1.7"/><text x="923.2" y="943.26" font-size="12" font-weight="400" text-anchor="end" fill="#d0d1de" textLength="27.3" lengthAdjust="spacingAndGlyphs">3 p/s</text><text x="923.2" y="966.86" font-size="12" font-weight="400" text-anchor="end" fill="#d0d1de" textLength="27.3" lengthAdjust="spacingAndGlyphs">2 p/s</text><text x="923.2" y="990.36" font-size="12" font-weight="400" text-anchor="end" fill="#d0d1de" textLength="27.3" lengthAdjust="spacingAndGlyphs">1 p/s</text><text x="923.2" y="1014.16" font-size="12" font-weight="400" text-anchor="end" fill="#d0d1de" textLength="27.3" lengthAdjust="spacingAndGlyphs">0 p/s</text><text x="1020.3" y="1028.96" font-size="12" font-weight="400" text-anchor="middle" fill="#d0d1de" textLength="28.8" lengthAdjust="spacingAndGlyphs">12:30</text><text x="1144.2" y="1028.96" font-size="12" font-weight="400" text-anchor="middle" fill="#d0d1de" textLength="28.8" lengthAdjust="spacingAndGlyphs">13:00</text><text x="1268.2" y="1028.96" font-size="12" font-weight="400" text-anchor="middle" fill="#d0d1de" textLength="28.8" lengthAdjust="spacingAndGlyphs">13:30</text><text x="1392.5" y="1028.96" font-size="12" font-weight="400" text-anchor="middle" fill="#d0d1de" textLength="28.8" lengthAdjust="spacingAndGlyphs">14:00</text><text x="1516.2" y="1028.96" font-size="12" font-weight="400" text-anchor="middle" fill="#d0d1de" textLength="28.8" lengthAdjust="spacingAndGlyphs">14:30</text><text x="1639.4" y="1028.96" font-size="12" font-weight="400" text-anchor="middle" fill="#d0d1de" textLength="28.8" lengthAdjust="spacingAndGlyphs">15:00</text><rect x="905" y="1050.3" width="14" height="4" rx="1" fill="#7eb26d"/><text x="933" y="1053.96" font-size="12" font-weight="400" text-anchor="start" fill="#d0d1de" textLength="96" lengthAdjust="spacingAndGlyphs">Missing SYN-ACK</text><rect x="67.5" y="1078.5" width="810" height="181" rx="2.5" fill="#181b1f" stroke="#232529" stroke-width="1"/><text x="472.5" y="1099.62" font-size="14" font-weight="700" text-anchor="middle" fill="#d0d1de" textLength="40.51" lengthAdjust="spacingAndGlyphs">TCPv6</text><rect x="137" y="1129" width="716" height="1" fill="rgba(204,204,220,0.21)"/><rect x="137" y="1152" width="716" height="1" fill="rgba(204,204,220,0.21)"/><rect x="137" y="1175" width="716" height="1" fill="rgba(204,204,220,0.21)"/><rect x="137" y="1198" width="716" height="1" fill="rgba(204,204,220,0.21)"/><rect x="137" y="1221" width="716" height="1" fill="rgba(204,204,220,0.21)"/><rect x="225" y="1129" width="1" height="93" fill="rgba(204,204,220,0.21)"/><rect x="344" y="1129" width="1" height="93" fill="rgba(204,204,220,0.21)"/><rect x="464" y="1129" width="1" height="93" fill="rgba(204,204,220,0.21)"/><rect x="583" y="1129" width="1" height="93" fill="rgba(204,204,220,0.21)"/><rect x="702" y="1129" width="1" height="93" fill="rgba(204,204,220,0.21)"/><rect x="822" y="1129" width="1" height="93" fill="rgba(204,204,220,0.21)"/><text x="131.6" y="1133.26" font-size="12" font-weight="400" text-anchor="end" fill="#d0d1de" textLength="27.3" lengthAdjust="spacingAndGlyphs">1 p/s</text><text x="131.6" y="1156.26" font-size="12" font-weight="400" text-anchor="end" fill="#d0d1de" textLength="50.64" lengthAdjust="spacingAndGlyphs">500 mp/s</text><text x="131.6" y="1179.26" font-size="12" font-weight="400" text-anchor="end" fill="#d0d1de" textLength="27.3" lengthAdjust="spacingAndGlyphs">0 p/s</text><text x="131.6" y="1202.26" font-size="12" font-weight="400" text-anchor="end" fill="#d0d1de" textLength="54.64" lengthAdjust="spacingAndGlyphs">-500 mp/s</text><text x="131.6" y="1225.26" font-size="12" font-weight="400" text-anchor="end" fill="#d0d1de" textLength="31.3" lengthAdjust="spacingAndGlyphs">-1 p/s</text><text x="225.2" y="1239.96" font-size="12" font-weight="400" text-anchor="middle" fill="#d0d1de" textLength="28.8" lengthAdjust="spacingAndGlyphs">12:30</text><text x="344.2" y="1239.96" font-size="12" font-weight="400" text-anchor="middle" fill="#d0d1de" textLength="28.8" lengthAdjust="spacingAndGlyphs">13:00</text><text x="464.2" y="1239.96" font-size="12" font-weight="400" text-anchor="middle" fill="#d0d1de" textLength="28.8" lengthAdjust="spacingAndGlyphs">13:30</text><text x="583.3" y="1239.96" font-size="12" font-weight="400" text-anchor="middle" fill="#d0d1de" textLength="28.8" lengthAdjust="spacingAndGlyphs">14:00</text><text x="702.1" y="1239.96" font-size="12" font-weight="400" text-anchor="middle" fill="#d0d1de" textLength="28.8" lengthAdjust="spacingAndGlyphs">14:30</text><text x="822.2" y="1239.96" font-size="12" font-weight="400" text-anchor="middle" fill="#d0d1de" textLength="28.8" lengthAdjust="spacingAndGlyphs">15:00</text><text x="472.4" y="1157.62" font-size="14" font-weight="400" text-anchor="middle" fill="#d0d1de" stroke="#d0d1de" stroke-width="0.3">No data</text><rect x="886.5" y="1078.5" width="810" height="181" rx="2.5" fill="#181b1f" stroke="#232529" stroke-width="1"/><text x="1291.5" y="1099.62" font-size="14" font-weight="700" text-anchor="middle" fill="#d0d1de" textLength="162.75" lengthAdjust="spacingAndGlyphs">Missing TCPv6 SYN-ACKs</text><rect x="956" y="1129.3" width="715.7" height="35.7" fill="rgba(234,112,112,0.12)"/><rect x="956" y="1129" width="715.7" height="1" fill="rgba(204,204,220,0.21)"/><rect x="956" y="1152" width="715.7" height="1" fill="rgba(204,204,220,0.21)"/><rect x="956" y="1175" width="715.7" height="1" fill="rgba(204,204,220,0.21)"/><rect x="956" y="1198" width="715.7" height="1" fill="rgba(204,204,220,0.21)"/><rect x="956" y="1221" width="715.7" height="1" fill="rgba(204,204,220,0.21)"/><rect x="1044" y="1129" width="1" height="93" fill="rgba(204,204,220,0.21)"/><rect x="1163" y="1129" width="1" height="93" fill="rgba(204,204,220,0.21)"/><rect x="1283" y="1129" width="1" height="93" fill="rgba(204,204,220,0.21)"/><rect x="1402" y="1129" width="1" height="93" fill="rgba(204,204,220,0.21)"/><rect x="1521" y="1129" width="1" height="93" fill="rgba(204,204,220,0.21)"/><rect x="1641" y="1129" width="1" height="93" fill="rgba(204,204,220,0.21)"/><path d="M956,1164.9 H1671.7" stroke="#bf3a2b" stroke-width="1.7"/><text x="950.4" y="1133.26" font-size="12" font-weight="400" text-anchor="end" fill="#d0d1de" textLength="27.3" lengthAdjust="spacingAndGlyphs">1 p/s</text><text x="950.4" y="1156.26" font-size="12" font-weight="400" text-anchor="end" fill="#d0d1de" textLength="50.64" lengthAdjust="spacingAndGlyphs">500 mp/s</text><text x="950.4" y="1179.26" font-size="12" font-weight="400" text-anchor="end" fill="#d0d1de" textLength="27.3" lengthAdjust="spacingAndGlyphs">0 p/s</text><text x="950.4" y="1202.26" font-size="12" font-weight="400" text-anchor="end" fill="#d0d1de" textLength="54.64" lengthAdjust="spacingAndGlyphs">-500 mp/s</text><text x="950.4" y="1225.26" font-size="12" font-weight="400" text-anchor="end" fill="#d0d1de" textLength="31.3" lengthAdjust="spacingAndGlyphs">-1 p/s</text><text x="1044.2" y="1239.96" font-size="12" font-weight="400" text-anchor="middle" fill="#d0d1de" textLength="28.8" lengthAdjust="spacingAndGlyphs">12:30</text><text x="1163.3" y="1239.96" font-size="12" font-weight="400" text-anchor="middle" fill="#d0d1de" textLength="28.8" lengthAdjust="spacingAndGlyphs">13:00</text><text x="1283.3" y="1239.96" font-size="12" font-weight="400" text-anchor="middle" fill="#d0d1de" textLength="28.8" lengthAdjust="spacingAndGlyphs">13:30</text><text x="1402.1" y="1239.96" font-size="12" font-weight="400" text-anchor="middle" fill="#d0d1de" textLength="28.8" lengthAdjust="spacingAndGlyphs">14:00</text><text x="1521.3" y="1239.96" font-size="12" font-weight="400" text-anchor="middle" fill="#d0d1de" textLength="28.8" lengthAdjust="spacingAndGlyphs">14:30</text><text x="1641.3" y="1239.96" font-size="12" font-weight="400" text-anchor="middle" fill="#d0d1de" textLength="28.8" lengthAdjust="spacingAndGlyphs">15:00</text><text x="1291.2" y="1157.62" font-size="14" font-weight="400" text-anchor="middle" fill="#d0d1de" stroke="#d0d1de" stroke-width="0.3">No data</text></svg></body></html>
